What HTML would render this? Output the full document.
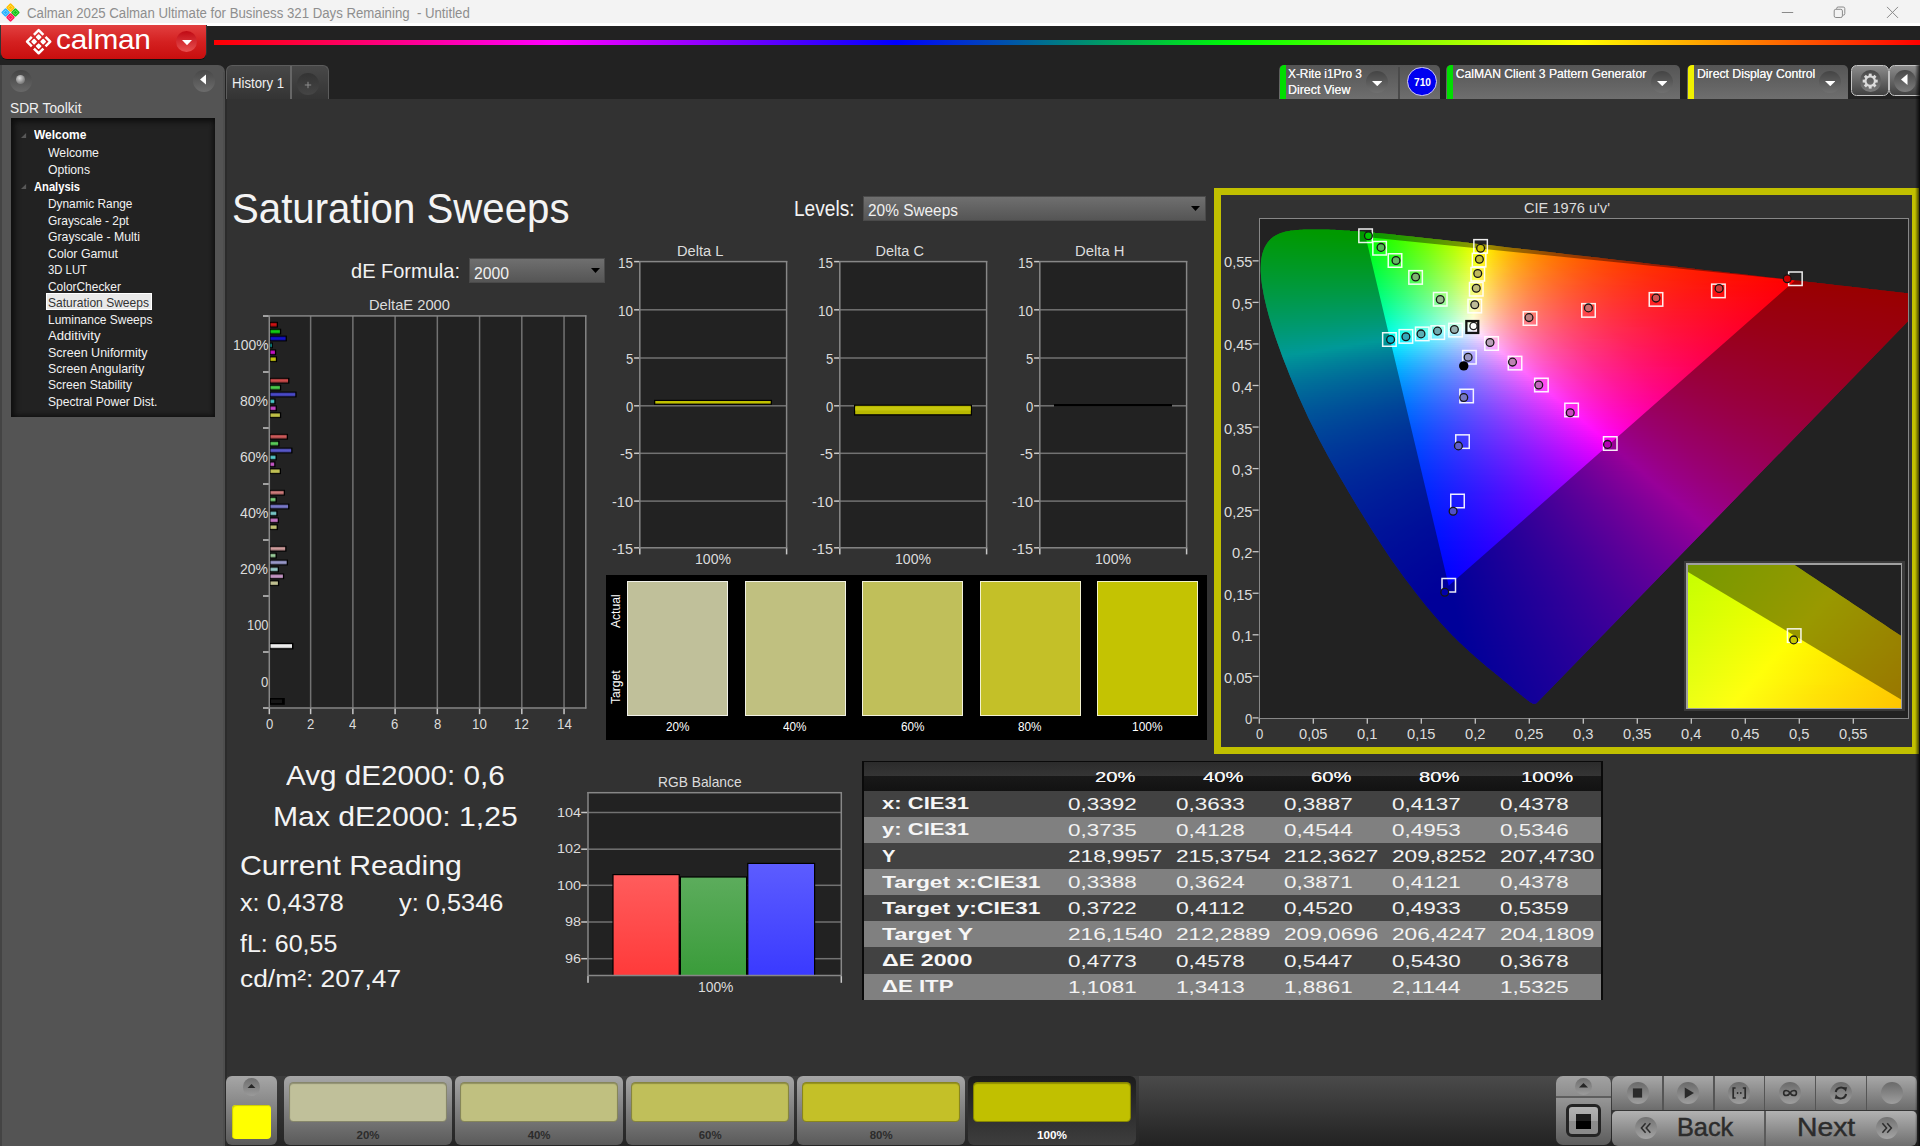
<!DOCTYPE html>
<html><head><meta charset="utf-8"><title>Calman</title><style>html,body{margin:0;padding:0;background:#323232;overflow:hidden}
body{width:1920px;height:1146px;position:relative;font-family:"Liberation Sans",sans-serif}
.a{position:absolute;display:block}
.cie i{position:absolute;display:block}
.t{position:absolute;white-space:nowrap;line-height:1;transform-origin:0 0}
</style></head><body>
<div class="a" style="left:0px;top:0px;width:1920px;height:23.4px;background:#f3f3f3;"></div>
<div class="a" style="left:0px;top:23.4px;width:1920px;height:2.4px;background:#fff;"></div>
<svg class="a" style="left:0;top:0" width="22" height="25"><rect x="7.2" y="4.3" width="6.6" height="6.6" rx="1.2" transform="rotate(45 10.5 7.6)" fill="#ffc000"/><rect x="8.85" y="5.95" width="3.3" height="3.3" rx=".6" transform="rotate(45 10.5 7.6)" fill="none" stroke="#ffe060" stroke-width=".9"/><rect x="12.1" y="9.2" width="6.6" height="6.6" rx="1.2" transform="rotate(45 15.4 12.5)" fill="#18c018"/><rect x="13.75" y="10.85" width="3.3" height="3.3" rx=".6" transform="rotate(45 15.4 12.5)" fill="none" stroke="#70e870" stroke-width=".9"/><rect x="2.3" y="9.2" width="6.6" height="6.6" rx="1.2" transform="rotate(45 5.6 12.5)" fill="#28b0ff"/><rect x="3.95" y="10.85" width="3.3" height="3.3" rx=".6" transform="rotate(45 5.6 12.5)" fill="none" stroke="#80d8ff" stroke-width=".9"/><rect x="7.2" y="14.1" width="6.6" height="6.6" rx="1.2" transform="rotate(45 10.5 17.4)" fill="#ff1858"/><rect x="8.85" y="15.75" width="3.3" height="3.3" rx=".6" transform="rotate(45 10.5 17.4)" fill="none" stroke="#ff7098" stroke-width=".9"/></svg>
<div class="t" style="left:26.50px;top:5.78px;font-size:14.49px;color:#8e8e8e;transform:scaleX(0.9121);white-space:pre;">Calman 2025 Calman Ultimate for Business 321 Days Remaining  - Untitled</div>
<svg class="a" style="left:1770px;top:0" width="150" height="25" fill="none" stroke="#8a8a8a" stroke-width="1"><path d="M11.8 12.5H23.2"/><rect x="64.2" y="9.3" width="8.2" height="8.2" rx="1.6"/><path d="M66.6 9V8.6Q66.6 7 68.2 7H73.2Q74.8 7 74.8 8.6V13.6Q74.8 15.2 73.2 15.2H72.8"/><path d="M117 6.9L128 17.9M128 6.9L117 17.9"/></svg>
<div class="a" style="left:0px;top:25.8px;width:1920px;height:73.2px;background:#222;"></div>
<div class="a" style="left:0px;top:25px;width:207px;height:35px;background:#333;border-radius:0 0 8px 8px;"></div>
<div class="a" style="left:1px;top:25px;width:205px;height:33.5px;background:linear-gradient(#e24040,#d42020 50%,#c80e0e);border-radius:0 0 6px 6px;box-shadow:0 1px 0 #111;"></div>
<svg class="a" style="left:0;top:0" width="60" height="60"><g transform="rotate(45 38.65 41.65)"><g fill="none" stroke="#fff" stroke-width="2.5" stroke-linecap="butt" stroke-linejoin="round"><path d="M37.15 33.45H30.45V40.15"/><path d="M40.15 33.45H46.85V40.15"/><path d="M40.15 49.85H46.85V43.15"/><path d="M37.15 49.85H30.45V43.15"/></g><g fill="#fff"><rect x="33.25" y="36.25" width="4.4" height="4.4" rx=".8"/><rect x="33.25" y="42.65" width="4.4" height="4.4" rx=".8"/><rect x="39.65" y="36.25" width="4.4" height="4.4" rx=".8"/><rect x="39.65" y="42.65" width="4.4" height="4.4" rx=".8"/></g></g></svg>
<div class="t" style="left:55.50px;top:24.66px;font-size:28.40px;color:#fff;transform:scaleX(1.0487);letter-spacing:-.2px;">calman</div>
<div class="a" style="left:176px;top:30.8px;width:21.2px;height:21.2px;border-radius:50%;background:linear-gradient(#c00a14,#e85050);"></div>
<svg class="a" style="left:181.9px;top:40.2px" width="10" height="5.2" viewBox="0 0 10 5.2"><path d="M0 0H10L5 5.2Z" fill="#fff"/></svg>
<div class="a" style="left:214px;top:39.5px;width:1706px;height:5.8px;background:linear-gradient(90deg,#f00,#f0f 20%,#00f 40%,#0f0 60%,#ff0 80%,#f00);"></div>
<div class="a" style="left:0px;top:65px;width:225px;height:1081px;background:#545454;border-radius:0 7px 0 0;"></div>
<div class="a" style="left:0px;top:65px;width:2px;height:1081px;background:#444;"></div>
<div class="a" style="left:222.8px;top:72px;width:2.2px;height:1074px;background:#4e4e4e;"></div>
<div class="a" style="left:10.3px;top:69.6px;width:22px;height:22px;border-radius:50%;background:linear-gradient(#444,#686868);"></div>
<div class="a" style="left:16.3px;top:74.6px;width:9px;height:9px;border-radius:50%;background:radial-gradient(circle at 40% 35%,#ddd,#888 60%,#666);"></div>
<div class="a" style="left:192.5px;top:69.6px;width:22px;height:22px;border-radius:50%;background:linear-gradient(#484848,#6c6c6c);"></div>
<svg class="a" style="left:199.75px;top:74.1px" width="6.5" height="11" viewBox="0 0 6.5 11"><path d="M6.5 0V11L0 5.5Z" fill="#fff"/></svg>
<div class="t" style="left:10.00px;top:100.68px;font-size:14.49px;color:#f0f0f0;transform:scaleX(0.9478);">SDR Toolkit</div>
<div class="a" style="left:10.5px;top:118px;width:204px;height:299px;background:#222;box-shadow:inset 2px 2px 6px 1px #0c0c0c,inset -1px -1px 4px #151515;"></div>
<div class="t" style="left:33.70px;top:128.21px;font-size:13.04px;color:#fff;font-weight:bold;transform:scaleX(0.9207);">Welcome</div>
<div class="t" style="left:48.40px;top:146.21px;font-size:13.04px;color:#f2f2f2;transform:scaleX(0.9423);">Welcome</div>
<div class="t" style="left:48.40px;top:162.91px;font-size:13.04px;color:#f2f2f2;transform:scaleX(0.9344);">Options</div>
<div class="t" style="left:33.70px;top:179.71px;font-size:13.04px;color:#fff;font-weight:bold;transform:scaleX(0.8575);">Analysis</div>
<div class="t" style="left:48.40px;top:197.21px;font-size:13.04px;color:#f2f2f2;transform:scaleX(0.9107);">Dynamic Range</div>
<div class="t" style="left:48.40px;top:213.71px;font-size:13.04px;color:#f2f2f2;transform:scaleX(0.9160);">Grayscale - 2pt</div>
<div class="t" style="left:48.40px;top:230.21px;font-size:13.04px;color:#f2f2f2;transform:scaleX(0.9403);">Grayscale - Multi</div>
<div class="t" style="left:48.40px;top:246.71px;font-size:13.04px;color:#f2f2f2;transform:scaleX(0.9468);">Color Gamut</div>
<div class="t" style="left:48.40px;top:263.21px;font-size:13.04px;color:#f2f2f2;transform:scaleX(0.8679);">3D LUT</div>
<div class="t" style="left:48.40px;top:279.71px;font-size:13.04px;color:#f2f2f2;transform:scaleX(0.9155);">ColorChecker</div>
<div class="a" style="left:46.2px;top:293.3px;width:105.6px;height:16.4px;background:#e9e9e9;border:1px solid #fff;box-sizing:border-box;"></div>
<div class="t" style="left:48.40px;top:296.21px;font-size:13.04px;color:#333;transform:scaleX(0.9225);">Saturation Sweeps</div>
<div class="t" style="left:48.40px;top:312.91px;font-size:13.04px;color:#f2f2f2;transform:scaleX(0.9180);">Luminance Sweeps</div>
<div class="t" style="left:48.40px;top:329.21px;font-size:13.04px;color:#f2f2f2;transform:scaleX(1.0059);">Additivity</div>
<div class="t" style="left:48.40px;top:345.71px;font-size:13.04px;color:#f2f2f2;transform:scaleX(0.9600);">Screen Uniformity</div>
<div class="t" style="left:48.40px;top:362.21px;font-size:13.04px;color:#f2f2f2;transform:scaleX(0.9440);">Screen Angularity</div>
<div class="t" style="left:48.40px;top:378.41px;font-size:13.04px;color:#f2f2f2;transform:scaleX(0.9270);">Screen Stability</div>
<div class="t" style="left:48.40px;top:394.91px;font-size:13.04px;color:#f2f2f2;transform:scaleX(0.9268);">Spectral Power Dist.</div>
<svg class="a" style="left:20.8px;top:132.6px" width="6" height="6"><path d="M5.1 0V4.9H0Z" fill="#585858"/></svg>
<svg class="a" style="left:20.8px;top:184.3px" width="6" height="6"><path d="M5.1 0V4.9H0Z" fill="#585858"/></svg>
<div class="a" style="left:225.6px;top:65px;width:103.4px;height:34px;background:linear-gradient(#484848,#343434);border-radius:6px 6px 0 0;border:1px solid #5c5c5c;border-bottom:none;box-sizing:border-box;"></div>
<div class="a" style="left:290px;top:66px;width:1.5px;height:33px;background:#666;"></div>
<div class="t" style="left:232.00px;top:76.77px;font-size:13.91px;color:#f0f0f0;transform:scaleX(0.9474);">History 1</div>
<div class="a" style="left:297px;top:73.4px;width:22px;height:22px;border-radius:50%;background:linear-gradient(#333,#454545);"></div>
<svg class="a" style="left:303px;top:80.2px" width="10" height="10" stroke="#8c8c8c" stroke-width="1"><path d="M5 1.8V8.2M1.8 5H8.2"/></svg>
<div class="a" style="left:1278.5px;top:65px;width:161px;height:34px;background:linear-gradient(#555,#6e6e6e);border-radius:5px 5px 0 0;overflow:hidden;"><div class="a" style="left:1px;top:0px;width:6px;height:34px;background:#0d0;border-radius:4px 0 0 0;"></div></div>
<div class="t" style="left:1288.20px;top:67.65px;font-size:12.17px;color:#f4f4f4;transform:scaleX(0.9766);text-shadow:0 0 .6px #fff;">X-Rite i1Pro 3</div>
<div class="t" style="left:1288.20px;top:83.95px;font-size:12.17px;color:#f4f4f4;transform:scaleX(1.0190);text-shadow:0 0 .6px #fff;">Direct View</div>
<div class="a" style="left:1366px;top:71px;width:22px;height:22px;border-radius:50%;background:linear-gradient(#444,#707070);"></div>
<svg class="a" style="left:1371.95px;top:80.9px" width="10.5" height="5.2" viewBox="0 0 10.5 5.2"><path d="M0 0H10.5L5.25 5.2Z" fill="#fff"/></svg>
<div class="a" style="left:1398px;top:67px;width:1.5px;height:32px;background:#4a4a4a;"></div>
<div class="a" style="left:1407.3px;top:66.8px;width:29.4px;height:29.4px;border-radius:50%;background:#0000f0;border:1.3px solid #d8d0f0;box-sizing:border-box;"></div>
<div class="t" style="left:1413.50px;top:77.24px;font-size:11.01px;color:#fff;font-weight:bold;transform:scaleX(0.9252);">710</div>
<div class="a" style="left:1446px;top:65px;width:233.5px;height:34px;background:linear-gradient(#555,#6e6e6e);border-radius:5px 5px 0 0;overflow:hidden;"><div class="a" style="left:1px;top:0px;width:6px;height:34px;background:#0d0;border-radius:4px 0 0 0;"></div></div>
<div class="t" style="left:1455.70px;top:67.65px;font-size:12.17px;color:#f4f4f4;text-shadow:0 0 .6px #fff;">CalMAN Client 3 Pattern Generator</div>
<div class="a" style="left:1651px;top:71px;width:22px;height:22px;border-radius:50%;background:linear-gradient(#444,#707070);"></div>
<svg class="a" style="left:1656.95px;top:80.9px" width="10.5" height="5.2" viewBox="0 0 10.5 5.2"><path d="M0 0H10.5L5.25 5.2Z" fill="#fff"/></svg>
<div class="a" style="left:1687px;top:65px;width:161px;height:34px;background:linear-gradient(#555,#6e6e6e);border-radius:5px 5px 0 0;overflow:hidden;"><div class="a" style="left:1px;top:0px;width:6px;height:34px;background:#f0f000;border-radius:4px 0 0 0;"></div></div>
<div class="t" style="left:1696.70px;top:67.65px;font-size:12.17px;color:#f4f4f4;transform:scaleX(1.0067);text-shadow:0 0 .6px #fff;">Direct Display Control</div>
<div class="a" style="left:1819px;top:71px;width:22px;height:22px;border-radius:50%;background:linear-gradient(#444,#707070);"></div>
<svg class="a" style="left:1824.95px;top:80.9px" width="10.5" height="5.2" viewBox="0 0 10.5 5.2"><path d="M0 0H10.5L5.25 5.2Z" fill="#fff"/></svg>
<div class="a" style="left:1851.2px;top:64.7px;width:38.2px;height:31.8px;background:linear-gradient(#8c8c8c,#404040);border:1.5px solid #c4c4c4;border-radius:5.5px;box-sizing:border-box;"></div>
<div class="a" style="left:1889.3px;top:64.7px;width:38.2px;height:31.8px;background:linear-gradient(#8c8c8c,#404040);border:1.5px solid #c4c4c4;border-radius:5.5px;box-sizing:border-box;"></div>
<div class="a" style="left:1859.5px;top:69.8px;width:21.8px;height:21.8px;border-radius:50%;background:linear-gradient(#484848,#7c7c7c);"></div>
<div class="a" style="left:1894.4px;top:69.8px;width:21.8px;height:21.8px;border-radius:50%;background:linear-gradient(#484848,#7c7c7c);"></div>
<svg class="a" style="left:1860.2px;top:70.6px" width="20" height="20"><g transform="translate(10.2 10.1)" fill="#dcdcdc"><rect x="-1.45" y="-7.5" width="2.9" height="3" transform="rotate(0)"/><rect x="-1.45" y="-7.5" width="2.9" height="3" transform="rotate(45)"/><rect x="-1.45" y="-7.5" width="2.9" height="3" transform="rotate(90)"/><rect x="-1.45" y="-7.5" width="2.9" height="3" transform="rotate(135)"/><rect x="-1.45" y="-7.5" width="2.9" height="3" transform="rotate(180)"/><rect x="-1.45" y="-7.5" width="2.9" height="3" transform="rotate(225)"/><rect x="-1.45" y="-7.5" width="2.9" height="3" transform="rotate(270)"/><rect x="-1.45" y="-7.5" width="2.9" height="3" transform="rotate(315)"/><circle r="4.7" fill="none" stroke="#dcdcdc" stroke-width="2.1"/></g></svg>
<svg class="a" style="left:1901.35px;top:74.3px" width="6.5" height="11" viewBox="0 0 6.5 11"><path d="M6.5 0V11L0 5.5Z" fill="#fff"/></svg>
<div class="a" style="left:1915px;top:65px;width:5px;height:1081px;background:linear-gradient(90deg,rgba(0,0,0,0),rgba(0,0,0,.8));z-index:50;"></div>
<div class="a" style="left:225px;top:99px;width:1.5px;height:1047px;background:#2b2b2b;"></div>
<div class="t" style="left:232.30px;top:187.64px;font-size:41.59px;color:#f4f4f4;transform:scaleX(0.9670);">Saturation Sweeps</div>
<div class="t" style="left:351.00px;top:261.26px;font-size:20.87px;color:#f2f2f2;transform:scaleX(0.9590);">dE Formula:</div>
<div class="a" style="left:468.7px;top:257.7px;width:136.5px;height:25.5px;background:linear-gradient(#6f6f6f,#555);border:1px solid #4a4a4a;box-sizing:border-box;"></div><div class="t" style="left:473.70px;top:264.76px;font-size:17.10px;color:#f0f0f0;transform:scaleX(0.9201);">2000</div><svg class="a" style="left:590.5px;top:268.25px" width="9" height="5"><path d="M0 0H9L4.5 5Z" fill="#000"/></svg>
<div class="t" style="left:793.50px;top:198.01px;font-size:21.16px;color:#f2f2f2;transform:scaleX(0.9025);">Levels:</div>
<div class="a" style="left:862.5px;top:195.5px;width:343.7px;height:25.2px;background:linear-gradient(#6f6f6f,#555);border:1px solid #4a4a4a;box-sizing:border-box;"></div><div class="t" style="left:867.50px;top:202.26px;font-size:17.10px;color:#f0f0f0;transform:scaleX(0.9017);">20% Sweeps</div><svg class="a" style="left:1191.1px;top:205.9px" width="9" height="5"><path d="M0 0H9L4.5 5Z" fill="#000"/></svg>
<div class="t" style="left:369.40px;top:298.33px;font-size:14.20px;color:#dcdcdc;transform:scaleX(1.0362);">DeltaE 2000</div>
<svg class="a" style="left:0;top:0" width="620" height="730"><defs><linearGradient id="b1" x1="0" y1="0" x2="0" y2="1"><stop offset="0" stop-color="rgb(147,12,12)"/><stop offset=".45" stop-color="rgb(205,18,18)"/><stop offset="1" stop-color="rgb(147,12,12)"/></linearGradient><linearGradient id="b2" x1="0" y1="0" x2="0" y2="1"><stop offset="0" stop-color="rgb(12,147,12)"/><stop offset=".45" stop-color="rgb(18,205,18)"/><stop offset="1" stop-color="rgb(12,147,12)"/></linearGradient><linearGradient id="b3" x1="0" y1="0" x2="0" y2="1"><stop offset="0" stop-color="rgb(12,12,147)"/><stop offset=".45" stop-color="rgb(18,18,205)"/><stop offset="1" stop-color="rgb(12,12,147)"/></linearGradient><linearGradient id="b4" x1="0" y1="0" x2="0" y2="1"><stop offset="0" stop-color="rgb(12,147,147)"/><stop offset=".45" stop-color="rgb(18,205,205)"/><stop offset="1" stop-color="rgb(12,147,147)"/></linearGradient><linearGradient id="b5" x1="0" y1="0" x2="0" y2="1"><stop offset="0" stop-color="rgb(147,12,147)"/><stop offset=".45" stop-color="rgb(205,18,205)"/><stop offset="1" stop-color="rgb(147,12,147)"/></linearGradient><linearGradient id="b6" x1="0" y1="0" x2="0" y2="1"><stop offset="0" stop-color="rgb(147,147,12)"/><stop offset=".45" stop-color="rgb(205,205,18)"/><stop offset="1" stop-color="rgb(147,147,12)"/></linearGradient><linearGradient id="b7" x1="0" y1="0" x2="0" y2="1"><stop offset="0" stop-color="rgb(147,54,54)"/><stop offset=".45" stop-color="rgb(205,75,75)"/><stop offset="1" stop-color="rgb(147,54,54)"/></linearGradient><linearGradient id="b8" x1="0" y1="0" x2="0" y2="1"><stop offset="0" stop-color="rgb(54,147,54)"/><stop offset=".45" stop-color="rgb(75,205,75)"/><stop offset="1" stop-color="rgb(54,147,54)"/></linearGradient><linearGradient id="b9" x1="0" y1="0" x2="0" y2="1"><stop offset="0" stop-color="rgb(54,54,147)"/><stop offset=".45" stop-color="rgb(75,75,205)"/><stop offset="1" stop-color="rgb(54,54,147)"/></linearGradient><linearGradient id="b10" x1="0" y1="0" x2="0" y2="1"><stop offset="0" stop-color="rgb(54,147,147)"/><stop offset=".45" stop-color="rgb(75,205,205)"/><stop offset="1" stop-color="rgb(54,147,147)"/></linearGradient><linearGradient id="b11" x1="0" y1="0" x2="0" y2="1"><stop offset="0" stop-color="rgb(147,54,147)"/><stop offset=".45" stop-color="rgb(205,75,205)"/><stop offset="1" stop-color="rgb(147,54,147)"/></linearGradient><linearGradient id="b12" x1="0" y1="0" x2="0" y2="1"><stop offset="0" stop-color="rgb(147,147,54)"/><stop offset=".45" stop-color="rgb(205,205,75)"/><stop offset="1" stop-color="rgb(147,147,54)"/></linearGradient><linearGradient id="b13" x1="0" y1="0" x2="0" y2="1"><stop offset="0" stop-color="rgb(147,64,64)"/><stop offset=".45" stop-color="rgb(205,90,90)"/><stop offset="1" stop-color="rgb(147,64,64)"/></linearGradient><linearGradient id="b14" x1="0" y1="0" x2="0" y2="1"><stop offset="0" stop-color="rgb(64,147,64)"/><stop offset=".45" stop-color="rgb(90,205,90)"/><stop offset="1" stop-color="rgb(64,147,64)"/></linearGradient><linearGradient id="b15" x1="0" y1="0" x2="0" y2="1"><stop offset="0" stop-color="rgb(64,64,147)"/><stop offset=".45" stop-color="rgb(90,90,205)"/><stop offset="1" stop-color="rgb(64,64,147)"/></linearGradient><linearGradient id="b16" x1="0" y1="0" x2="0" y2="1"><stop offset="0" stop-color="rgb(64,147,147)"/><stop offset=".45" stop-color="rgb(90,205,205)"/><stop offset="1" stop-color="rgb(64,147,147)"/></linearGradient><linearGradient id="b17" x1="0" y1="0" x2="0" y2="1"><stop offset="0" stop-color="rgb(147,64,147)"/><stop offset=".45" stop-color="rgb(205,90,205)"/><stop offset="1" stop-color="rgb(147,64,147)"/></linearGradient><linearGradient id="b18" x1="0" y1="0" x2="0" y2="1"><stop offset="0" stop-color="rgb(147,147,64)"/><stop offset=".45" stop-color="rgb(205,205,90)"/><stop offset="1" stop-color="rgb(147,147,64)"/></linearGradient><linearGradient id="b19" x1="0" y1="0" x2="0" y2="1"><stop offset="0" stop-color="rgb(147,88,88)"/><stop offset=".45" stop-color="rgb(205,123,123)"/><stop offset="1" stop-color="rgb(147,88,88)"/></linearGradient><linearGradient id="b20" x1="0" y1="0" x2="0" y2="1"><stop offset="0" stop-color="rgb(88,147,88)"/><stop offset=".45" stop-color="rgb(123,205,123)"/><stop offset="1" stop-color="rgb(88,147,88)"/></linearGradient><linearGradient id="b21" x1="0" y1="0" x2="0" y2="1"><stop offset="0" stop-color="rgb(88,88,147)"/><stop offset=".45" stop-color="rgb(123,123,205)"/><stop offset="1" stop-color="rgb(88,88,147)"/></linearGradient><linearGradient id="b22" x1="0" y1="0" x2="0" y2="1"><stop offset="0" stop-color="rgb(88,147,147)"/><stop offset=".45" stop-color="rgb(123,205,205)"/><stop offset="1" stop-color="rgb(88,147,147)"/></linearGradient><linearGradient id="b23" x1="0" y1="0" x2="0" y2="1"><stop offset="0" stop-color="rgb(147,88,147)"/><stop offset=".45" stop-color="rgb(205,123,205)"/><stop offset="1" stop-color="rgb(147,88,147)"/></linearGradient><linearGradient id="b24" x1="0" y1="0" x2="0" y2="1"><stop offset="0" stop-color="rgb(147,147,88)"/><stop offset=".45" stop-color="rgb(205,205,123)"/><stop offset="1" stop-color="rgb(147,147,88)"/></linearGradient><linearGradient id="b25" x1="0" y1="0" x2="0" y2="1"><stop offset="0" stop-color="rgb(147,111,111)"/><stop offset=".45" stop-color="rgb(205,155,155)"/><stop offset="1" stop-color="rgb(147,111,111)"/></linearGradient><linearGradient id="b26" x1="0" y1="0" x2="0" y2="1"><stop offset="0" stop-color="rgb(111,147,111)"/><stop offset=".45" stop-color="rgb(155,205,155)"/><stop offset="1" stop-color="rgb(111,147,111)"/></linearGradient><linearGradient id="b27" x1="0" y1="0" x2="0" y2="1"><stop offset="0" stop-color="rgb(111,111,147)"/><stop offset=".45" stop-color="rgb(155,155,205)"/><stop offset="1" stop-color="rgb(111,111,147)"/></linearGradient><linearGradient id="b28" x1="0" y1="0" x2="0" y2="1"><stop offset="0" stop-color="rgb(111,147,147)"/><stop offset=".45" stop-color="rgb(155,205,205)"/><stop offset="1" stop-color="rgb(111,147,147)"/></linearGradient><linearGradient id="b29" x1="0" y1="0" x2="0" y2="1"><stop offset="0" stop-color="rgb(147,111,147)"/><stop offset=".45" stop-color="rgb(205,155,205)"/><stop offset="1" stop-color="rgb(147,111,147)"/></linearGradient><linearGradient id="b30" x1="0" y1="0" x2="0" y2="1"><stop offset="0" stop-color="rgb(147,147,111)"/><stop offset=".45" stop-color="rgb(205,205,155)"/><stop offset="1" stop-color="rgb(147,147,111)"/></linearGradient><linearGradient id="bw" x1="0" y1="0" x2="0" y2="1"><stop offset="0" stop-color="#aaa"/><stop offset=".45" stop-color="#fff"/><stop offset="1" stop-color="#aaa"/></linearGradient></defs><rect x="269" y="315.3" width="317.4" height="393.3" fill="#222"/><rect x="309.88" y="316.00" width="1.5" height="392.00" fill="#727272"/><rect x="352.12" y="316.00" width="1.5" height="392.00" fill="#727272"/><rect x="394.35" y="316.00" width="1.5" height="392.00" fill="#727272"/><rect x="436.59" y="316.00" width="1.5" height="392.00" fill="#727272"/><rect x="478.82" y="316.00" width="1.5" height="392.00" fill="#727272"/><rect x="521.05" y="316.00" width="1.5" height="392.00" fill="#727272"/><rect x="563.29" y="316.00" width="1.5" height="392.00" fill="#727272"/><rect x="269.00" y="315.15" width="317.40" height="1.5" fill="#878787"/><rect x="585.05" y="315.30" width="1.5" height="393.30" fill="#878787"/><rect x="268.55" y="315.30" width="1.5" height="393.30" fill="#878787"/><rect x="269.00" y="707.25" width="317.40" height="1.5" fill="#878787"/><rect x="263.00" y="315.25" width="5.70" height="1.5" fill="#c6c6c6"/><rect x="263.00" y="371.25" width="5.70" height="1.5" fill="#c6c6c6"/><rect x="263.00" y="427.25" width="5.70" height="1.5" fill="#c6c6c6"/><rect x="263.00" y="483.25" width="5.70" height="1.5" fill="#c6c6c6"/><rect x="263.00" y="539.25" width="5.70" height="1.5" fill="#c6c6c6"/><rect x="263.00" y="595.25" width="5.70" height="1.5" fill="#c6c6c6"/><rect x="263.00" y="651.25" width="5.70" height="1.5" fill="#c6c6c6"/><rect x="263.00" y="707.25" width="5.70" height="1.5" fill="#c6c6c6"/><rect x="268.55" y="708.60" width="1.5" height="5.60" fill="#c6c6c6"/><rect x="309.88" y="708.60" width="1.5" height="5.60" fill="#c6c6c6"/><rect x="352.12" y="708.60" width="1.5" height="5.60" fill="#c6c6c6"/><rect x="394.35" y="708.60" width="1.5" height="5.60" fill="#c6c6c6"/><rect x="436.59" y="708.60" width="1.5" height="5.60" fill="#c6c6c6"/><rect x="478.82" y="708.60" width="1.5" height="5.60" fill="#c6c6c6"/><rect x="521.05" y="708.60" width="1.5" height="5.60" fill="#c6c6c6"/><rect x="563.29" y="708.60" width="1.5" height="5.60" fill="#c6c6c6"/><rect x="270" y="321.8" width="8.0" height="5.8" fill="#000"/><rect x="270.5" y="322.8" width="6.2" height="3.8" fill="url(#b1)"/><rect x="270" y="328.7" width="11.2" height="5.8" fill="#000"/><rect x="270.5" y="329.7" width="9.4" height="3.8" fill="url(#b2)"/><rect x="270" y="335.6" width="16.9" height="5.8" fill="#000"/><rect x="270.5" y="336.6" width="15.1" height="3.8" fill="url(#b3)"/><rect x="270" y="342.5" width="2.9" height="5.8" fill="#000"/><rect x="270.5" y="343.5" width="1.1" height="3.8" fill="url(#b4)"/><rect x="270" y="349.4" width="6.2" height="5.8" fill="#000"/><rect x="270.5" y="350.4" width="4.4" height="3.8" fill="url(#b5)"/><rect x="270" y="356.3" width="7.1" height="5.8" fill="#000"/><rect x="270.5" y="357.3" width="5.3" height="3.8" fill="url(#b6)"/><rect x="270" y="377.8" width="19.4" height="5.8" fill="#000"/><rect x="270.5" y="378.8" width="17.6" height="3.8" fill="url(#b7)"/><rect x="270" y="384.7" width="11.2" height="5.8" fill="#000"/><rect x="270.5" y="385.7" width="9.4" height="3.8" fill="url(#b8)"/><rect x="270" y="391.6" width="26.6" height="5.8" fill="#000"/><rect x="270.5" y="392.6" width="24.8" height="3.8" fill="url(#b9)"/><rect x="270" y="398.5" width="5.6" height="5.8" fill="#000"/><rect x="270.5" y="399.5" width="3.8" height="3.8" fill="url(#b10)"/><rect x="270" y="405.4" width="6.9" height="5.8" fill="#000"/><rect x="270.5" y="406.4" width="5.1" height="3.8" fill="url(#b11)"/><rect x="270" y="412.3" width="11.2" height="5.8" fill="#000"/><rect x="270.5" y="413.3" width="9.4" height="3.8" fill="url(#b12)"/><rect x="270" y="433.8" width="18.0" height="5.8" fill="#000"/><rect x="270.5" y="434.8" width="16.2" height="3.8" fill="url(#b13)"/><rect x="270" y="440.7" width="9.5" height="5.8" fill="#000"/><rect x="270.5" y="441.7" width="7.7" height="3.8" fill="url(#b14)"/><rect x="270" y="447.6" width="22.5" height="5.8" fill="#000"/><rect x="270.5" y="448.6" width="20.7" height="3.8" fill="url(#b15)"/><rect x="270" y="454.5" width="6.8" height="5.8" fill="#000"/><rect x="270.5" y="455.5" width="5.0" height="3.8" fill="url(#b16)"/><rect x="270" y="461.4" width="5.5" height="5.8" fill="#000"/><rect x="270.5" y="462.4" width="3.7" height="3.8" fill="url(#b17)"/><rect x="270" y="468.3" width="11.0" height="5.8" fill="#000"/><rect x="270.5" y="469.3" width="9.2" height="3.8" fill="url(#b18)"/><rect x="270" y="489.8" width="15.0" height="5.8" fill="#000"/><rect x="270.5" y="490.8" width="13.2" height="3.8" fill="url(#b19)"/><rect x="270" y="496.7" width="6.8" height="5.8" fill="#000"/><rect x="270.5" y="497.7" width="5.0" height="3.8" fill="url(#b20)"/><rect x="270" y="503.6" width="19.4" height="5.8" fill="#000"/><rect x="270.5" y="504.6" width="17.6" height="3.8" fill="url(#b21)"/><rect x="270" y="510.5" width="7.6" height="5.8" fill="#000"/><rect x="270.5" y="511.5" width="5.8" height="3.8" fill="url(#b22)"/><rect x="270" y="517.4" width="9.0" height="5.8" fill="#000"/><rect x="270.5" y="518.4" width="7.2" height="3.8" fill="url(#b23)"/><rect x="270" y="524.3" width="7.9" height="5.8" fill="#000"/><rect x="270.5" y="525.3" width="6.1" height="3.8" fill="url(#b24)"/><rect x="270" y="545.8" width="16.5" height="5.8" fill="#000"/><rect x="270.5" y="546.8" width="14.7" height="3.8" fill="url(#b25)"/><rect x="270" y="552.7" width="6.8" height="5.8" fill="#000"/><rect x="270.5" y="553.7" width="5.0" height="3.8" fill="url(#b26)"/><rect x="270" y="559.6" width="18.0" height="5.8" fill="#000"/><rect x="270.5" y="560.6" width="16.2" height="3.8" fill="url(#b27)"/><rect x="270" y="566.5" width="9.0" height="5.8" fill="#000"/><rect x="270.5" y="567.5" width="7.2" height="3.8" fill="url(#b28)"/><rect x="270" y="573.4" width="14.2" height="5.8" fill="#000"/><rect x="270.5" y="574.4" width="12.4" height="3.8" fill="url(#b29)"/><rect x="270" y="580.3" width="9.2" height="5.8" fill="#000"/><rect x="270.5" y="581.3" width="7.4" height="3.8" fill="url(#b30)"/><rect x="270" y="642.8" width="23.5" height="6.6" fill="#000"/><rect x="270.5" y="644" width="21.5" height="4.2" fill="url(#bw)"/><rect x="270" y="698" width="14.8" height="6.8" fill="#000"/><rect x="271" y="699.5" width="11" height="3.6" fill="#151515"/></svg>
<div class="t" style="left:232.80px;top:338.18px;font-size:14.49px;color:#dcdcdc;transform:scaleX(0.9578);">100%</div>
<div class="t" style="left:240.30px;top:394.18px;font-size:14.49px;color:#dcdcdc;transform:scaleX(0.9653);">80%</div>
<div class="t" style="left:240.30px;top:450.18px;font-size:14.49px;color:#dcdcdc;transform:scaleX(0.9653);">60%</div>
<div class="t" style="left:239.80px;top:506.18px;font-size:14.49px;color:#dcdcdc;transform:scaleX(0.9826);">40%</div>
<div class="t" style="left:240.30px;top:562.18px;font-size:14.49px;color:#dcdcdc;transform:scaleX(0.9653);">20%</div>
<div class="t" style="left:246.80px;top:617.98px;font-size:14.49px;color:#dcdcdc;transform:scaleX(0.8892);">100</div>
<div class="t" style="left:261.00px;top:674.68px;font-size:14.49px;color:#dcdcdc;transform:scaleX(0.9058);">0</div>
<div class="t" style="left:265.65px;top:717.67px;font-size:13.91px;color:#dcdcdc;transform:scaleX(0.9435);">0</div>
<div class="t" style="left:306.98px;top:717.67px;font-size:13.91px;color:#dcdcdc;transform:scaleX(0.9435);">2</div>
<div class="t" style="left:349.22px;top:717.67px;font-size:13.91px;color:#dcdcdc;transform:scaleX(0.9435);">4</div>
<div class="t" style="left:391.45px;top:717.67px;font-size:13.91px;color:#dcdcdc;transform:scaleX(0.9435);">6</div>
<div class="t" style="left:433.69px;top:717.67px;font-size:13.91px;color:#dcdcdc;transform:scaleX(0.9435);">8</div>
<div class="t" style="left:472.17px;top:717.67px;font-size:13.91px;color:#dcdcdc;transform:scaleX(0.9564);">10</div>
<div class="t" style="left:514.40px;top:717.67px;font-size:13.91px;color:#dcdcdc;transform:scaleX(0.9564);">12</div>
<div class="t" style="left:556.64px;top:717.67px;font-size:13.91px;color:#dcdcdc;transform:scaleX(0.9564);">14</div>
<svg class="a" style="left:0;top:0" width="1210" height="560"><rect x="639.6" y="261" width="147.5" height="287.4" fill="#222"/><rect x="640.00" y="309.05" width="146.50" height="1.5" fill="#727272"/><rect x="640.00" y="357.25" width="146.50" height="1.5" fill="#727272"/><rect x="640.00" y="405.05" width="146.50" height="1.5" fill="#727272"/><rect x="640.00" y="452.55" width="146.50" height="1.5" fill="#727272"/><rect x="640.00" y="500.35" width="146.50" height="1.5" fill="#727272"/><rect x="639.20" y="260.85" width="148.10" height="1.5" fill="#878787"/><rect x="639.20" y="547.05" width="148.10" height="1.5" fill="#878787"/><rect x="639.05" y="261.00" width="1.5" height="287.40" fill="#878787"/><rect x="785.85" y="261.00" width="1.5" height="287.40" fill="#878787"/><rect x="634.10" y="260.85" width="5.00" height="1.5" fill="#c6c6c6"/><rect x="634.10" y="309.05" width="5.00" height="1.5" fill="#c6c6c6"/><rect x="634.10" y="357.25" width="5.00" height="1.5" fill="#c6c6c6"/><rect x="634.10" y="405.05" width="5.00" height="1.5" fill="#c6c6c6"/><rect x="634.10" y="452.55" width="5.00" height="1.5" fill="#c6c6c6"/><rect x="634.10" y="500.35" width="5.00" height="1.5" fill="#c6c6c6"/><rect x="634.10" y="547.05" width="5.00" height="1.5" fill="#c6c6c6"/><rect x="639.05" y="548.40" width="1.5" height="6.00" fill="#c6c6c6"/><rect x="785.85" y="548.40" width="1.5" height="6.00" fill="#c6c6c6"/><rect x="654" y="399.8" width="118" height="5" fill="#000"/><rect x="655.3" y="401" width="115.4" height="2.6" fill="#c0c000"/></svg>
<div class="t" style="left:676.55px;top:243.58px;font-size:14.49px;color:#dcdcdc;transform:scaleX(1.0127);">Delta L</div>
<div class="t" style="left:618.30px;top:255.63px;font-size:14.78px;color:#dcdcdc;transform:scaleX(0.9124);">15</div>
<div class="t" style="left:618.30px;top:303.83px;font-size:14.78px;color:#dcdcdc;transform:scaleX(0.9124);">10</div>
<div class="t" style="left:626.00px;top:352.03px;font-size:14.78px;color:#dcdcdc;transform:scaleX(0.8880);">5</div>
<div class="t" style="left:626.00px;top:399.83px;font-size:14.78px;color:#dcdcdc;transform:scaleX(0.8880);">0</div>
<div class="t" style="left:620.30px;top:447.33px;font-size:14.78px;color:#dcdcdc;transform:scaleX(0.9891);">-5</div>
<div class="t" style="left:612.30px;top:495.13px;font-size:14.78px;color:#dcdcdc;transform:scaleX(0.9830);">-10</div>
<div class="t" style="left:612.30px;top:541.83px;font-size:14.78px;color:#dcdcdc;transform:scaleX(0.9830);">-15</div>
<div class="t" style="left:695.20px;top:551.68px;font-size:14.49px;color:#dcdcdc;transform:scaleX(0.9713);">100%</div>
<svg class="a" style="left:0;top:0" width="1210" height="560"><rect x="839.6" y="261" width="147.5" height="287.4" fill="#222"/><rect x="840.00" y="309.05" width="146.50" height="1.5" fill="#727272"/><rect x="840.00" y="357.25" width="146.50" height="1.5" fill="#727272"/><rect x="840.00" y="405.05" width="146.50" height="1.5" fill="#727272"/><rect x="840.00" y="452.55" width="146.50" height="1.5" fill="#727272"/><rect x="840.00" y="500.35" width="146.50" height="1.5" fill="#727272"/><rect x="839.20" y="260.85" width="148.10" height="1.5" fill="#878787"/><rect x="839.20" y="547.05" width="148.10" height="1.5" fill="#878787"/><rect x="839.05" y="261.00" width="1.5" height="287.40" fill="#878787"/><rect x="985.85" y="261.00" width="1.5" height="287.40" fill="#878787"/><rect x="834.10" y="260.85" width="5.00" height="1.5" fill="#c6c6c6"/><rect x="834.10" y="309.05" width="5.00" height="1.5" fill="#c6c6c6"/><rect x="834.10" y="357.25" width="5.00" height="1.5" fill="#c6c6c6"/><rect x="834.10" y="405.05" width="5.00" height="1.5" fill="#c6c6c6"/><rect x="834.10" y="452.55" width="5.00" height="1.5" fill="#c6c6c6"/><rect x="834.10" y="500.35" width="5.00" height="1.5" fill="#c6c6c6"/><rect x="834.10" y="547.05" width="5.00" height="1.5" fill="#c6c6c6"/><rect x="839.05" y="548.40" width="1.5" height="6.00" fill="#c6c6c6"/><rect x="985.85" y="548.40" width="1.5" height="6.00" fill="#c6c6c6"/><rect x="854" y="404.6" width="118" height="11" fill="#000"/><rect x="855.2" y="405.8" width="115.6" height="8.4" fill="#b8b800"/><rect x="855.2" y="407" width="115.6" height="3.5" fill="#caca10" opacity=".8"/></svg>
<div class="t" style="left:875.55px;top:243.58px;font-size:14.49px;color:#dcdcdc;">Delta C</div>
<div class="t" style="left:818.30px;top:255.63px;font-size:14.78px;color:#dcdcdc;transform:scaleX(0.9124);">15</div>
<div class="t" style="left:818.30px;top:303.83px;font-size:14.78px;color:#dcdcdc;transform:scaleX(0.9124);">10</div>
<div class="t" style="left:826.00px;top:352.03px;font-size:14.78px;color:#dcdcdc;transform:scaleX(0.8880);">5</div>
<div class="t" style="left:826.00px;top:399.83px;font-size:14.78px;color:#dcdcdc;transform:scaleX(0.8880);">0</div>
<div class="t" style="left:820.30px;top:447.33px;font-size:14.78px;color:#dcdcdc;transform:scaleX(0.9891);">-5</div>
<div class="t" style="left:812.30px;top:495.13px;font-size:14.78px;color:#dcdcdc;transform:scaleX(0.9830);">-10</div>
<div class="t" style="left:812.30px;top:541.83px;font-size:14.78px;color:#dcdcdc;transform:scaleX(0.9830);">-15</div>
<div class="t" style="left:895.20px;top:551.68px;font-size:14.49px;color:#dcdcdc;transform:scaleX(0.9713);">100%</div>
<svg class="a" style="left:0;top:0" width="1210" height="560"><rect x="1039.6" y="261" width="147.5" height="287.4" fill="#222"/><rect x="1040.00" y="309.05" width="146.50" height="1.5" fill="#727272"/><rect x="1040.00" y="357.25" width="146.50" height="1.5" fill="#727272"/><rect x="1040.00" y="405.05" width="146.50" height="1.5" fill="#727272"/><rect x="1040.00" y="452.55" width="146.50" height="1.5" fill="#727272"/><rect x="1040.00" y="500.35" width="146.50" height="1.5" fill="#727272"/><rect x="1039.20" y="260.85" width="148.10" height="1.5" fill="#878787"/><rect x="1039.20" y="547.05" width="148.10" height="1.5" fill="#878787"/><rect x="1039.05" y="261.00" width="1.5" height="287.40" fill="#878787"/><rect x="1185.85" y="261.00" width="1.5" height="287.40" fill="#878787"/><rect x="1034.10" y="260.85" width="5.00" height="1.5" fill="#c6c6c6"/><rect x="1034.10" y="309.05" width="5.00" height="1.5" fill="#c6c6c6"/><rect x="1034.10" y="357.25" width="5.00" height="1.5" fill="#c6c6c6"/><rect x="1034.10" y="405.05" width="5.00" height="1.5" fill="#c6c6c6"/><rect x="1034.10" y="452.55" width="5.00" height="1.5" fill="#c6c6c6"/><rect x="1034.10" y="500.35" width="5.00" height="1.5" fill="#c6c6c6"/><rect x="1034.10" y="547.05" width="5.00" height="1.5" fill="#c6c6c6"/><rect x="1039.05" y="548.40" width="1.5" height="6.00" fill="#c6c6c6"/><rect x="1185.85" y="548.40" width="1.5" height="6.00" fill="#c6c6c6"/><rect x="1054" y="404" width="118" height="2.6" fill="#000"/></svg>
<div class="t" style="left:1075.05px;top:243.58px;font-size:14.49px;color:#dcdcdc;transform:scaleX(1.0243);">Delta H</div>
<div class="t" style="left:1018.30px;top:255.63px;font-size:14.78px;color:#dcdcdc;transform:scaleX(0.9124);">15</div>
<div class="t" style="left:1018.30px;top:303.83px;font-size:14.78px;color:#dcdcdc;transform:scaleX(0.9124);">10</div>
<div class="t" style="left:1026.00px;top:352.03px;font-size:14.78px;color:#dcdcdc;transform:scaleX(0.8880);">5</div>
<div class="t" style="left:1026.00px;top:399.83px;font-size:14.78px;color:#dcdcdc;transform:scaleX(0.8880);">0</div>
<div class="t" style="left:1020.30px;top:447.33px;font-size:14.78px;color:#dcdcdc;transform:scaleX(0.9891);">-5</div>
<div class="t" style="left:1012.30px;top:495.13px;font-size:14.78px;color:#dcdcdc;transform:scaleX(0.9830);">-10</div>
<div class="t" style="left:1012.30px;top:541.83px;font-size:14.78px;color:#dcdcdc;transform:scaleX(0.9830);">-15</div>
<div class="t" style="left:1095.20px;top:551.68px;font-size:14.49px;color:#dcdcdc;transform:scaleX(0.9713);">100%</div>
<div class="a" style="left:606px;top:575px;width:601px;height:164.7px;background:#000;"></div>
<div class="a" style="left:627px;top:581px;width:101px;height:135px;background:#c0c09a;border:1.2px solid rgba(255,255,255,.78);box-sizing:border-box;"></div>
<div class="t" style="left:665.75px;top:721.16px;font-size:12.75px;color:#fff;transform:scaleX(0.9207);">20%</div>
<div class="a" style="left:744.55px;top:581px;width:101px;height:135px;background:#c0c080;border:1.2px solid rgba(255,255,255,.78);box-sizing:border-box;"></div>
<div class="t" style="left:783.30px;top:721.16px;font-size:12.75px;color:#fff;transform:scaleX(0.9207);">40%</div>
<div class="a" style="left:862.1px;top:581px;width:101px;height:135px;background:#c0bf5a;border:1.2px solid rgba(255,255,255,.78);box-sizing:border-box;"></div>
<div class="t" style="left:900.85px;top:721.16px;font-size:12.75px;color:#fff;transform:scaleX(0.9207);">60%</div>
<div class="a" style="left:979.65px;top:581px;width:101px;height:135px;background:#c4c028;border:1.2px solid rgba(255,255,255,.78);box-sizing:border-box;"></div>
<div class="t" style="left:1018.40px;top:721.16px;font-size:12.75px;color:#fff;transform:scaleX(0.9207);">80%</div>
<div class="a" style="left:1097.2px;top:581px;width:101px;height:135px;background:#c4c302;border:1.2px solid rgba(255,255,255,.78);box-sizing:border-box;"></div>
<div class="t" style="left:1132.45px;top:721.16px;font-size:12.75px;color:#fff;transform:scaleX(0.9351);">100%</div>
<div class="t" style="left:609.5px;top:627.5px;font-size:12.6px;color:#fff;transform:rotate(-90deg) scaleX(.96);transform-origin:0 0;">Actual</div>
<div class="t" style="left:609.5px;top:703.8px;font-size:12.6px;color:#fff;transform:rotate(-90deg) scaleX(.96);transform-origin:0 0;">Target</div>
<div class="t" style="left:285.80px;top:761.82px;font-size:27.97px;color:#f4f4f4;transform:scaleX(1.0605);">Avg dE2000: 0,6</div>
<div class="t" style="left:273.10px;top:803.42px;font-size:27.97px;color:#f4f4f4;transform:scaleX(1.0779);">Max dE2000: 1,25</div>
<div class="t" style="left:240.40px;top:851.36px;font-size:28.41px;color:#f4f4f4;transform:scaleX(1.0642);">Current Reading</div>
<div class="t" style="left:240.40px;top:891.40px;font-size:23.77px;color:#f4f4f4;transform:scaleX(1.0616);">x: 0,4378</div>
<div class="t" style="left:399.30px;top:891.40px;font-size:23.77px;color:#f4f4f4;transform:scaleX(1.0677);">y: 0,5346</div>
<div class="t" style="left:240.40px;top:931.80px;font-size:23.77px;color:#f4f4f4;transform:scaleX(1.0530);">fL: 60,55</div>
<div class="t" style="left:240.40px;top:967.00px;font-size:23.77px;color:#f4f4f4;transform:scaleX(1.1093);">cd/m²: 207,47</div>
<div class="t" style="left:657.65px;top:774.93px;font-size:14.20px;color:#dcdcdc;transform:scaleX(0.9727);">RGB Balance</div>
<svg class="a" style="left:0;top:0" width="860" height="1000"><rect x="588" y="792.5" width="253.5" height="183.3" fill="#222"/><rect x="588.00" y="811.75" width="253.00" height="1.5" fill="#727272"/><rect x="581.20" y="811.75" width="6.20" height="1.5" fill="#c6c6c6"/><rect x="588.00" y="848.45" width="253.00" height="1.5" fill="#727272"/><rect x="581.20" y="848.45" width="6.20" height="1.5" fill="#c6c6c6"/><rect x="588.00" y="884.55" width="253.00" height="1.5" fill="#727272"/><rect x="581.20" y="884.55" width="6.20" height="1.5" fill="#c6c6c6"/><rect x="588.00" y="921.25" width="253.00" height="1.5" fill="#727272"/><rect x="581.20" y="921.25" width="6.20" height="1.5" fill="#c6c6c6"/><rect x="588.00" y="957.95" width="253.00" height="1.5" fill="#727272"/><rect x="581.20" y="957.95" width="6.20" height="1.5" fill="#c6c6c6"/><rect x="587.40" y="791.95" width="254.60" height="1.5" fill="#878787"/><rect x="587.25" y="792.00" width="1.5" height="183.50" fill="#878787"/><rect x="840.55" y="792.00" width="1.5" height="183.50" fill="#878787"/><rect x="587.25" y="976.00" width="1.5" height="6.80" fill="#c6c6c6"/><rect x="840.55" y="976.00" width="1.5" height="6.80" fill="#c6c6c6"/><defs><linearGradient id="gr" x1="0" y1="0" x2="0" y2="1"><stop offset="0" stop-color="#ff5c5c"/><stop offset="1" stop-color="#ff3a3a"/></linearGradient><linearGradient id="gg" x1="0" y1="0" x2="0" y2="1"><stop offset="0" stop-color="#5cac5c"/><stop offset="1" stop-color="#3a9c3a"/></linearGradient><linearGradient id="gb" x1="0" y1="0" x2="0" y2="1"><stop offset="0" stop-color="#5c5cff"/><stop offset="1" stop-color="#3a3aff"/></linearGradient></defs><rect x="612.4" y="874" width="67.4" height="101.5" fill="#000"/><rect x="613.6" y="875.2" width="65.0" height="100.3" fill="url(#gr)"/><rect x="679.8" y="876.4" width="67.4" height="99.1" fill="#000"/><rect x="681.0" y="877.6" width="65.0" height="97.9" fill="url(#gg)"/><rect x="747.2" y="862.8" width="68" height="112.7" fill="#000"/><rect x="748.4000000000001" y="864.0" width="65.6" height="111.5" fill="url(#gb)"/><rect x="587.40" y="974.75" width="254.60" height="1.5" fill="#878787"/></svg>
<div class="t" style="left:556.80px;top:805.77px;font-size:13.33px;color:#dcdcdc;transform:scaleX(1.0790);">104</div>
<div class="t" style="left:556.80px;top:842.47px;font-size:13.33px;color:#dcdcdc;transform:scaleX(1.0790);">102</div>
<div class="t" style="left:556.80px;top:878.77px;font-size:13.33px;color:#dcdcdc;transform:scaleX(1.0790);">100</div>
<div class="t" style="left:564.80px;top:915.27px;font-size:13.33px;color:#dcdcdc;transform:scaleX(1.0790);">98</div>
<div class="t" style="left:564.80px;top:951.97px;font-size:13.33px;color:#dcdcdc;transform:scaleX(1.0790);">96</div>
<div class="t" style="left:697.50px;top:981.17px;font-size:13.91px;color:#dcdcdc;transform:scaleX(0.9949);">100%</div>
<div class="a" style="left:862px;top:760.6px;width:741.2px;height:239.4px;background:#0a0a0a;"></div>
<div class="a" style="left:864px;top:762px;width:736.5px;height:14px;background:linear-gradient(#2b2b2b,#353535);"></div>
<div class="a" style="left:864px;top:776px;width:736.5px;height:14.6px;background:linear-gradient(#191919,#121212);"></div>
<div class="t" style="left:1095.10px;top:769.91px;font-size:14.93px;color:#f4f4f4;transform:scaleX(1.3556);text-shadow:0 0 .5px #fff;">20%</div>
<div class="t" style="left:1203.10px;top:769.91px;font-size:14.93px;color:#f4f4f4;transform:scaleX(1.3556);text-shadow:0 0 .5px #fff;">40%</div>
<div class="t" style="left:1311.10px;top:769.91px;font-size:14.93px;color:#f4f4f4;transform:scaleX(1.3556);text-shadow:0 0 .5px #fff;">60%</div>
<div class="t" style="left:1419.10px;top:769.91px;font-size:14.93px;color:#f4f4f4;transform:scaleX(1.3556);text-shadow:0 0 .5px #fff;">80%</div>
<div class="t" style="left:1521.30px;top:769.91px;font-size:14.93px;color:#f4f4f4;transform:scaleX(1.3699);text-shadow:0 0 .5px #fff;">100%</div>
<div class="a" style="left:864px;top:790.6px;width:736.5px;height:26.43px;background:#424242;"></div>
<div class="t" style="left:881.90px;top:796.26px;font-size:16.52px;color:#f6f6f6;font-weight:bold;transform:scaleX(1.3344);">x: CIE31</div>
<div class="t" style="left:1067.60px;top:795.84px;font-size:17.25px;color:#f2f2f2;transform:scaleX(1.3006);">0,3392</div>
<div class="t" style="left:1175.60px;top:795.84px;font-size:17.25px;color:#f2f2f2;transform:scaleX(1.3006);">0,3633</div>
<div class="t" style="left:1283.60px;top:795.84px;font-size:17.25px;color:#f2f2f2;transform:scaleX(1.3006);">0,3887</div>
<div class="t" style="left:1391.60px;top:795.84px;font-size:17.25px;color:#f2f2f2;transform:scaleX(1.3006);">0,4137</div>
<div class="t" style="left:1499.60px;top:795.84px;font-size:17.25px;color:#f2f2f2;transform:scaleX(1.3006);">0,4378</div>
<div class="a" style="left:864px;top:816.73px;width:736.5px;height:26.43px;background:#808080;"></div>
<div class="t" style="left:881.90px;top:822.39px;font-size:16.52px;color:#f6f6f6;font-weight:bold;transform:scaleX(1.3344);">y: CIE31</div>
<div class="t" style="left:1067.60px;top:821.97px;font-size:17.25px;color:#f2f2f2;transform:scaleX(1.3006);">0,3735</div>
<div class="t" style="left:1175.60px;top:821.97px;font-size:17.25px;color:#f2f2f2;transform:scaleX(1.3006);">0,4128</div>
<div class="t" style="left:1283.60px;top:821.97px;font-size:17.25px;color:#f2f2f2;transform:scaleX(1.3006);">0,4544</div>
<div class="t" style="left:1391.60px;top:821.97px;font-size:17.25px;color:#f2f2f2;transform:scaleX(1.3006);">0,4953</div>
<div class="t" style="left:1499.60px;top:821.97px;font-size:17.25px;color:#f2f2f2;transform:scaleX(1.3006);">0,5346</div>
<div class="a" style="left:864px;top:842.86px;width:736.5px;height:26.43px;background:#424242;"></div>
<div class="t" style="left:881.90px;top:848.52px;font-size:16.52px;color:#f6f6f6;font-weight:bold;transform:scaleX(1.2250);">Y</div>
<div class="t" style="left:1067.60px;top:848.10px;font-size:17.25px;color:#f2f2f2;transform:scaleX(1.3125);">218,9957</div>
<div class="t" style="left:1175.60px;top:848.10px;font-size:17.25px;color:#f2f2f2;transform:scaleX(1.3125);">215,3754</div>
<div class="t" style="left:1283.60px;top:848.10px;font-size:17.25px;color:#f2f2f2;transform:scaleX(1.3125);">212,3627</div>
<div class="t" style="left:1391.60px;top:848.10px;font-size:17.25px;color:#f2f2f2;transform:scaleX(1.3125);">209,8252</div>
<div class="t" style="left:1499.60px;top:848.10px;font-size:17.25px;color:#f2f2f2;transform:scaleX(1.3125);">207,4730</div>
<div class="a" style="left:864px;top:868.99px;width:736.5px;height:26.43px;background:#808080;"></div>
<div class="t" style="left:881.90px;top:874.65px;font-size:16.52px;color:#f6f6f6;font-weight:bold;transform:scaleX(1.3848);">Target x:CIE31</div>
<div class="t" style="left:1067.60px;top:874.23px;font-size:17.25px;color:#f2f2f2;transform:scaleX(1.3006);">0,3388</div>
<div class="t" style="left:1175.60px;top:874.23px;font-size:17.25px;color:#f2f2f2;transform:scaleX(1.3006);">0,3624</div>
<div class="t" style="left:1283.60px;top:874.23px;font-size:17.25px;color:#f2f2f2;transform:scaleX(1.3006);">0,3871</div>
<div class="t" style="left:1391.60px;top:874.23px;font-size:17.25px;color:#f2f2f2;transform:scaleX(1.3006);">0,4121</div>
<div class="t" style="left:1499.60px;top:874.23px;font-size:17.25px;color:#f2f2f2;transform:scaleX(1.3006);">0,4378</div>
<div class="a" style="left:864px;top:895.12px;width:736.5px;height:26.43px;background:#424242;"></div>
<div class="t" style="left:881.90px;top:900.78px;font-size:16.52px;color:#f6f6f6;font-weight:bold;transform:scaleX(1.3848);">Target y:CIE31</div>
<div class="t" style="left:1067.60px;top:900.36px;font-size:17.25px;color:#f2f2f2;transform:scaleX(1.3006);">0,3722</div>
<div class="t" style="left:1175.60px;top:900.36px;font-size:17.25px;color:#f2f2f2;transform:scaleX(1.3330);">0,4112</div>
<div class="t" style="left:1283.60px;top:900.36px;font-size:17.25px;color:#f2f2f2;transform:scaleX(1.3006);">0,4520</div>
<div class="t" style="left:1391.60px;top:900.36px;font-size:17.25px;color:#f2f2f2;transform:scaleX(1.3006);">0,4933</div>
<div class="t" style="left:1499.60px;top:900.36px;font-size:17.25px;color:#f2f2f2;transform:scaleX(1.3006);">0,5359</div>
<div class="a" style="left:864px;top:921.25px;width:736.5px;height:26.43px;background:#808080;"></div>
<div class="t" style="left:881.90px;top:926.91px;font-size:16.52px;color:#f6f6f6;font-weight:bold;transform:scaleX(1.4092);">Target Y</div>
<div class="t" style="left:1067.60px;top:926.49px;font-size:17.25px;color:#f2f2f2;transform:scaleX(1.3125);">216,1540</div>
<div class="t" style="left:1175.60px;top:926.49px;font-size:17.25px;color:#f2f2f2;transform:scaleX(1.3125);">212,2889</div>
<div class="t" style="left:1283.60px;top:926.49px;font-size:17.25px;color:#f2f2f2;transform:scaleX(1.3125);">209,0696</div>
<div class="t" style="left:1391.60px;top:926.49px;font-size:17.25px;color:#f2f2f2;transform:scaleX(1.3125);">206,4247</div>
<div class="t" style="left:1499.60px;top:926.49px;font-size:17.25px;color:#f2f2f2;transform:scaleX(1.3125);">204,1809</div>
<div class="a" style="left:864px;top:947.38px;width:736.5px;height:26.43px;background:#424242;"></div>
<div class="t" style="left:881.90px;top:953.04px;font-size:16.52px;color:#f6f6f6;font-weight:bold;transform:scaleX(1.4089);">ΔE 2000</div>
<div class="t" style="left:1067.60px;top:952.62px;font-size:17.25px;color:#f2f2f2;transform:scaleX(1.3006);">0,4773</div>
<div class="t" style="left:1175.60px;top:952.62px;font-size:17.25px;color:#f2f2f2;transform:scaleX(1.3006);">0,4578</div>
<div class="t" style="left:1283.60px;top:952.62px;font-size:17.25px;color:#f2f2f2;transform:scaleX(1.3006);">0,5447</div>
<div class="t" style="left:1391.60px;top:952.62px;font-size:17.25px;color:#f2f2f2;transform:scaleX(1.3006);">0,5430</div>
<div class="t" style="left:1499.60px;top:952.62px;font-size:17.25px;color:#f2f2f2;transform:scaleX(1.3006);">0,3678</div>
<div class="a" style="left:864px;top:973.51px;width:736.5px;height:26.13px;background:#808080;"></div>
<div class="t" style="left:881.90px;top:979.17px;font-size:16.52px;color:#f6f6f6;font-weight:bold;transform:scaleX(1.3443);">ΔE ITP</div>
<div class="t" style="left:1067.60px;top:978.75px;font-size:17.25px;color:#f2f2f2;transform:scaleX(1.3006);">1,1081</div>
<div class="t" style="left:1175.60px;top:978.75px;font-size:17.25px;color:#f2f2f2;transform:scaleX(1.3006);">1,3413</div>
<div class="t" style="left:1283.60px;top:978.75px;font-size:17.25px;color:#f2f2f2;transform:scaleX(1.3006);">1,8861</div>
<div class="t" style="left:1391.60px;top:978.75px;font-size:17.25px;color:#f2f2f2;transform:scaleX(1.3330);">2,1144</div>
<div class="t" style="left:1499.60px;top:978.75px;font-size:17.25px;color:#f2f2f2;transform:scaleX(1.3006);">1,5325</div>
<div class="a" style="left:1214px;top:187.5px;width:704.8px;height:566.5px;border:7.1px solid #c1c000;box-sizing:border-box;background:#323232;"></div>
<div class="t" style="left:1523.50px;top:200.55px;font-size:14.06px;color:#dcdcdc;transform:scaleX(1.0395);">CIE 1976 u'v'</div>
<div class="a" style="left:1258.65px;top:217.85px;width:650.8px;height:500.7px;background:#222;border:1.5px solid #878787;box-sizing:border-box;"></div>
<div class="a cie" style="left:1260px;top:219px;width:648px;height:498px;overflow:hidden"><div class="a" style="left:0;top:0;width:948px;height:498px;clip-path:polygon(276.5px 484.2px,276.5px 484.2px,276.5px 484.1px,276.5px 484.1px,276.5px 484.1px,276.4px 484.1px,276.4px 484.1px,276.4px 484.2px,276.4px 484.2px,276.3px 484.2px,276.3px 484.3px,276.3px 484.3px,276.3px 484.4px,276.2px 484.4px,276.2px 484.4px,276.2px 484.5px,276.1px 484.5px,276.1px 484.5px,276.1px 484.5px,276.0px 484.5px,276.0px 484.5px,275.9px 484.5px,275.9px 484.5px,275.8px 484.5px,275.8px 484.5px,275.7px 484.5px,275.7px 484.5px,275.6px 484.6px,275.6px 484.6px,275.5px 484.7px,275.5px 484.7px,275.4px 484.7px,275.4px 484.8px,275.3px 484.8px,275.2px 484.8px,275.2px 484.8px,275.1px 484.8px,275.0px 484.8px,275.0px 484.8px,274.9px 484.8px,274.8px 484.8px,274.7px 484.8px,274.7px 484.7px,274.6px 484.7px,274.5px 484.7px,274.4px 484.7px,274.3px 484.7px,274.2px 484.8px,274.1px 484.8px,274.0px 484.8px,273.9px 484.8px,273.8px 484.8px,273.7px 484.8px,273.6px 484.8px,273.5px 484.8px,273.3px 484.8px,273.2px 484.8px,273.1px 484.7px,272.9px 484.7px,272.7px 484.6px,272.5px 484.5px,272.3px 484.4px,272.1px 484.3px,271.8px 484.1px,271.6px 484.0px,271.3px 483.8px,271.0px 483.6px,270.7px 483.4px,270.3px 483.2px,269.9px 482.9px,269.6px 482.7px,269.2px 482.4px,268.8px 482.1px,268.4px 481.8px,268.0px 481.5px,267.5px 481.2px,267.1px 480.8px,266.6px 480.4px,266.1px 480.1px,265.6px 479.6px,265.0px 479.2px,264.4px 478.7px,263.8px 478.2px,263.2px 477.7px,262.5px 477.2px,261.8px 476.6px,261.1px 476.0px,260.3px 475.4px,259.5px 474.8px,258.8px 474.1px,258.0px 473.4px,257.1px 472.7px,256.3px 472.0px,255.4px 471.2px,254.5px 470.5px,253.6px 469.7px,252.7px 468.9px,251.7px 468.1px,250.7px 467.3px,249.7px 466.4px,248.6px 465.5px,247.5px 464.6px,246.4px 463.7px,245.2px 462.7px,244.0px 461.7px,242.7px 460.7px,241.4px 459.6px,240.0px 458.4px,238.6px 457.3px,237.1px 456.1px,235.6px 454.9px,234.1px 453.6px,232.5px 452.3px,231.0px 451.0px,229.4px 449.7px,227.7px 448.4px,226.0px 447.0px,224.3px 445.5px,222.5px 444.0px,220.7px 442.5px,218.8px 440.8px,216.9px 439.2px,214.9px 437.4px,212.8px 435.6px,210.7px 433.7px,208.6px 431.8px,206.4px 429.8px,204.2px 427.7px,201.9px 425.6px,199.6px 423.4px,197.3px 421.2px,194.9px 418.8px,192.5px 416.4px,189.9px 413.8px,187.3px 411.0px,184.5px 408.1px,181.7px 405.0px,178.7px 401.6px,175.6px 398.1px,172.4px 394.3px,169.0px 390.3px,165.6px 386.2px,162.1px 381.8px,158.5px 377.3px,154.8px 372.5px,151.1px 367.6px,147.2px 362.5px,143.3px 357.3px,139.4px 351.8px,135.4px 346.2px,131.3px 340.4px,127.2px 334.4px,123.1px 328.2px,118.9px 321.8px,114.6px 315.2px,110.3px 308.5px,106.0px 301.6px,101.7px 294.6px,97.3px 287.5px,93.0px 280.2px,88.6px 272.9px,84.3px 265.6px,80.0px 258.2px,75.7px 250.7px,71.5px 243.2px,67.3px 235.7px,63.3px 228.2px,59.3px 220.7px,55.5px 213.2px,51.8px 205.8px,48.2px 198.4px,44.8px 191.1px,41.5px 183.8px,38.3px 176.7px,35.3px 169.6px,32.4px 162.7px,29.6px 155.9px,27.0px 149.2px,24.4px 142.8px,22.0px 136.4px,19.8px 130.3px,17.6px 124.3px,15.6px 118.5px,13.8px 112.9px,12.0px 107.6px,10.5px 102.4px,9.0px 97.4px,7.7px 92.6px,6.5px 88.1px,5.5px 83.7px,4.5px 79.5px,3.7px 75.5px,3.0px 71.6px,2.3px 68.0px,1.8px 64.5px,1.4px 61.2px,1.1px 58.0px,0.9px 54.9px,0.7px 52.0px,0.7px 49.3px,0.8px 46.6px,0.9px 44.1px,1.1px 41.7px,1.4px 39.4px,1.8px 37.2px,2.3px 35.1px,2.9px 33.1px,3.5px 31.2px,4.2px 29.4px,5.0px 27.8px,5.9px 26.2px,6.8px 24.7px,7.8px 23.3px,8.9px 21.9px,10.0px 20.7px,11.2px 19.6px,12.5px 18.5px,13.8px 17.6px,15.1px 16.7px,16.5px 15.9px,18.0px 15.2px,19.5px 14.5px,21.0px 14.0px,22.6px 13.4px,24.2px 13.0px,25.8px 12.6px,27.5px 12.2px,29.2px 11.9px,30.9px 11.6px,32.7px 11.4px,34.4px 11.2px,36.3px 11.1px,38.1px 10.9px,39.9px 10.8px,41.8px 10.7px,43.7px 10.6px,45.6px 10.5px,47.5px 10.5px,49.4px 10.5px,51.3px 10.4px,53.3px 10.4px,55.2px 10.4px,57.1px 10.4px,59.0px 10.4px,60.9px 10.4px,62.9px 10.5px,64.8px 10.5px,66.7px 10.5px,68.7px 10.6px,70.6px 10.7px,72.6px 10.7px,74.6px 10.8px,76.6px 10.9px,78.6px 11.0px,80.6px 11.1px,82.7px 11.2px,84.8px 11.4px,86.9px 11.5px,89.0px 11.6px,91.1px 11.8px,93.3px 11.9px,95.4px 12.1px,97.6px 12.2px,99.8px 12.4px,102.1px 12.6px,104.4px 12.8px,106.6px 13.0px,109.0px 13.2px,111.3px 13.4px,113.7px 13.6px,116.1px 13.8px,118.5px 14.1px,120.9px 14.3px,123.4px 14.5px,125.9px 14.8px,128.4px 15.0px,131.0px 15.3px,133.6px 15.6px,136.2px 15.8px,138.9px 16.1px,141.6px 16.4px,144.3px 16.7px,147.1px 17.0px,149.9px 17.3px,152.8px 17.6px,155.7px 17.9px,158.6px 18.2px,161.6px 18.5px,164.5px 18.9px,167.6px 19.2px,170.7px 19.5px,173.8px 19.9px,176.9px 20.2px,180.1px 20.6px,183.3px 20.9px,186.6px 21.3px,189.9px 21.7px,193.3px 22.1px,196.7px 22.4px,200.1px 22.8px,203.6px 23.2px,207.1px 23.6px,210.7px 24.0px,214.3px 24.4px,218.0px 24.9px,221.7px 25.3px,225.5px 25.7px,229.2px 26.1px,233.1px 26.6px,237.0px 27.0px,240.9px 27.5px,244.9px 27.9px,248.9px 28.4px,252.9px 28.9px,257.0px 29.3px,261.2px 29.8px,265.3px 30.3px,269.6px 30.8px,273.9px 31.3px,278.2px 31.8px,282.5px 32.3px,286.9px 32.8px,291.4px 33.3px,295.9px 33.8px,300.4px 34.3px,304.9px 34.9px,309.5px 35.4px,314.2px 35.9px,318.8px 36.5px,323.5px 37.0px,328.3px 37.5px,333.0px 38.1px,337.8px 38.6px,342.6px 39.2px,347.5px 39.7px,352.4px 40.3px,357.2px 40.9px,362.2px 41.4px,367.1px 42.0px,372.1px 42.6px,377.0px 43.1px,382.0px 43.7px,386.9px 44.3px,391.8px 44.9px,396.7px 45.4px,401.6px 46.0px,406.4px 46.5px,411.2px 47.1px,416.0px 47.6px,420.7px 48.2px,425.5px 48.7px,430.2px 49.3px,435.0px 49.8px,439.7px 50.4px,444.4px 50.9px,449.1px 51.4px,453.8px 52.0px,458.5px 52.5px,463.1px 53.1px,467.7px 53.6px,472.2px 54.1px,476.6px 54.6px,481.0px 55.1px,485.3px 55.6px,489.5px 56.1px,493.7px 56.5px,497.8px 57.0px,501.9px 57.5px,505.9px 57.9px,509.8px 58.4px,513.7px 58.8px,517.6px 59.3px,521.3px 59.7px,525.0px 60.1px,528.7px 60.6px,532.2px 61.0px,535.7px 61.4px,539.1px 61.8px,542.5px 62.2px,545.7px 62.5px,548.9px 62.9px,552.1px 63.3px,555.1px 63.6px,558.1px 64.0px,561.1px 64.3px,563.9px 64.6px,566.7px 65.0px,569.5px 65.3px,572.2px 65.6px,574.8px 65.9px,577.4px 66.2px,579.9px 66.4px,582.3px 66.7px,584.7px 67.0px,587.1px 67.3px,589.4px 67.5px,591.6px 67.8px,593.8px 68.1px,596.0px 68.3px,598.1px 68.6px,600.2px 68.8px,602.3px 69.0px,604.3px 69.3px,606.3px 69.5px,608.3px 69.7px,610.2px 69.9px,612.1px 70.2px,613.9px 70.4px,615.8px 70.6px,617.5px 70.8px,619.3px 71.0px,621.0px 71.2px,622.6px 71.4px,624.2px 71.6px,625.8px 71.8px,627.4px 71.9px,628.9px 72.1px,630.3px 72.3px,631.8px 72.4px,633.2px 72.6px,634.5px 72.7px,635.8px 72.9px,637.1px 73.0px,638.3px 73.2px,639.5px 73.3px,640.6px 73.4px,641.8px 73.6px,642.8px 73.7px,643.9px 73.8px,644.9px 73.9px,645.9px 74.0px,646.8px 74.1px,647.7px 74.3px,648.6px 74.4px,649.5px 74.5px,650.3px 74.6px,651.1px 74.6px,651.9px 74.7px,652.7px 74.8px,653.4px 74.9px,654.2px 75.0px,654.8px 75.1px,655.5px 75.1px,656.2px 75.2px,656.8px 75.3px,657.4px 75.4px,657.9px 75.4px,658.5px 75.5px,658.9px 75.5px,659.4px 75.6px,659.9px 75.7px,660.3px 75.7px,660.7px 75.7px,661.0px 75.8px,661.4px 75.8px,661.7px 75.9px,662.1px 75.9px,662.4px 75.9px,662.8px 76.0px,663.1px 76.0px,663.4px 76.1px,663.8px 76.1px,664.1px 76.1px,664.4px 76.2px,664.7px 76.2px,664.9px 76.2px,665.2px 76.3px,665.4px 76.3px,665.7px 76.3px,665.9px 76.4px,666.2px 76.4px,666.4px 76.4px,666.7px 76.4px,666.9px 76.5px,667.2px 76.5px,667.4px 76.5px,667.7px 76.6px,667.9px 76.6px,668.2px 76.6px,668.4px 76.6px,668.7px 76.7px,668.9px 76.7px,669.2px 76.7px,669.4px 76.8px,669.6px 76.8px,669.8px 76.8px,670.0px 76.8px,670.2px 76.8px,670.4px 76.9px,670.6px 76.9px,670.8px 76.9px,670.9px 76.9px,671.1px 76.9px,671.2px 77.0px,671.4px 77.0px,671.5px 77.0px,671.6px 77.0px,671.7px 77.0px,671.8px 77.0px,671.9px 77.0px,671.9px 77.0px,672.0px 77.1px,672.1px 77.1px,672.1px 77.1px,672.2px 77.1px,672.2px 77.1px,672.3px 77.1px,672.3px 77.1px,672.3px 77.1px,672.4px 77.1px,672.4px 77.1px,672.4px 77.1px,672.5px 77.1px)"><i style="left:29px;top:10px;width:61px;height:2px;background:linear-gradient(90deg,#00ff01 0px,#00ff00 60px)"></i><i style="left:19px;top:12px;width:96px;height:2px;background:linear-gradient(90deg,#00ff06 0px,#00ff00 42px,#00ff00 85px,#11ff00 95px)"></i><i style="left:14px;top:14px;width:122px;height:2px;background:linear-gradient(90deg,#00ff09 0px,#00ff01 57px,#00ff00 90px,#36ff00 121px)"></i><i style="left:11px;top:16px;width:144px;height:2px;background:linear-gradient(90deg,#00ff0d 0px,#00ff00 94px,#2cff00 119px,#5bff00 143px)"></i><i style="left:8px;top:18px;width:165px;height:2px;background:linear-gradient(90deg,#00ff10 0px,#00ff02 97px,#3dff00 131px,#82ff00 164px)"></i><i style="left:6px;top:20px;width:185px;height:2px;background:linear-gradient(90deg,#00ff13 0px,#00ff05 100px,#27ff01 122px,#52ff00 144px,#7dff00 164px,#acff00 184px)"></i><i style="left:5px;top:22px;width:204px;height:2px;background:linear-gradient(90deg,#00ff17 0px,#01ff09 102px,#34ff04 130px,#69ff00 156px,#a0ff00 180px,#dcff00 203px)"></i><i style="left:3px;top:24px;width:224px;height:2px;background:linear-gradient(90deg,#00ff1a 0px,#00ff0d 104px,#39ff07 135px,#76ff02 164px,#b7ff00 191px,#feff00 217px,#ffef00 223px)"></i><i style="left:2px;top:26px;width:242px;height:2px;background:linear-gradient(90deg,#00ff1d 0px,#00ff10 105px,#36ff0b 135px,#75ff06 165px,#b7ff01 192px,#ffff00 218px,#ffe100 229px,#ffc600 241px)"></i><i style="left:1px;top:28px;width:260px;height:2px;background:linear-gradient(90deg,#00ff20 0px,#00ff14 107px,#3aff0f 138px,#75ff0a 166px,#b7ff05 193px,#ffff00 219px,#ffe600 228px,#ffd000 237px,#ffba00 248px,#ffa600 259px)"></i><i style="left:0px;top:30px;width:279px;height:2px;background:linear-gradient(90deg,#00ff24 0px,#00ff18 108px,#37ff13 138px,#75ff0e 167px,#b4ff0a 193px,#fffe04 220px,#ffdd01 232px,#ffbf00 246px,#ffa400 261px,#ff8b00 278px)"></i><i style="left:0px;top:32px;width:296px;height:2px;background:linear-gradient(90deg,#00ff27 0px,#00ff1b 109px,#3bff17 140px,#77ff13 168px,#b7ff0e 194px,#feff09 219px,#ffd304 236px,#ffb101 253px,#ff9100 273px,#ff7700 295px)"></i><i style="left:0px;top:34px;width:314px;height:2px;background:linear-gradient(90deg,#00ff2a 0px,#00ff1f 109px,#36ff1c 138px,#74ff17 167px,#b7ff13 194px,#feff0e 219px,#ffce08 238px,#ffa603 259px,#ff8200 284px,#ff6400 313px)"></i><i style="left:0px;top:36px;width:331px;height:2px;background:linear-gradient(90deg,#00ff2d 0px,#00ff23 110px,#39ff1f 140px,#76ff1c 168px,#b7ff17 194px,#ffff13 219px,#ffe30f 229px,#ffc90b 240px,#ffb108 252px,#ff9c05 265px,#ff8802 279px,#ff7500 295px,#ff5600 330px)"></i><i style="left:0px;top:38px;width:348px;height:2px;background:linear-gradient(90deg,#00ff30 0px,#00ff27 110px,#37ff24 139px,#76ff20 168px,#b7ff1c 194px,#ffff18 219px,#ffe013 230px,#ffc40f 242px,#ffa90b 256px,#ff9207 271px,#ff7d04 287px,#ff6a01 305px,#ff5900 325px,#ff4900 347px)"></i><i style="left:0px;top:40px;width:366px;height:2px;background:linear-gradient(90deg,#00ff34 0px,#01ff2b 111px,#38ff28 140px,#76ff25 168px,#b7ff21 194px,#fdff1d 218px,#fffe1d 219px,#ffd817 233px,#ffbb12 246px,#ffa00d 261px,#ff8909 277px,#ff7406 295px,#ff6002 316px,#ff4e00 339px,#ff3e00 365px)"></i><i style="left:0px;top:42px;width:383px;height:2px;background:linear-gradient(90deg,#00ff37 0px,#00ff2f 111px,#38ff2c 140px,#75ff29 168px,#b7ff26 194px,#fdff23 218px,#ffd71b 233px,#ffb916 247px,#ff9d10 263px,#ff820c 282px,#ff6b07 303px,#ff5704 326px,#ff4500 352px,#ff3400 382px)"></i><i style="left:0px;top:44px;width:400px;height:2px;background:linear-gradient(90deg,#00ff3a 0px,#01ff33 112px,#39ff31 141px,#77ff2e 169px,#b8ff2b 194px,#feff28 218px,#ffd620 233px,#ffb419 249px,#ff9613 267px,#ff7b0e 287px,#ff6409 310px,#ff4f05 336px,#ff3c01 366px,#ff2c00 399px)"></i><i style="left:0px;top:46px;width:418px;height:2px;background:linear-gradient(90deg,#00ff3e 0px,#00ff37 112px,#38ff35 141px,#77ff33 169px,#b8ff30 194px,#ffff2d 218px,#ffd624 233px,#ffb11d 250px,#ff9115 270px,#ff750f 292px,#ff5d0a 317px,#ff4706 346px,#ff3401 379px,#ff2400 417px)"></i><i style="left:0px;top:48px;width:435px;height:2px;background:linear-gradient(90deg,#00ff41 0px,#01ff3b 113px,#3aff39 142px,#77ff37 169px,#b8ff35 194px,#ffff33 218px,#ffd329 234px,#ffad20 252px,#ff8c18 273px,#ff6f11 297px,#ff560c 324px,#ff4006 356px,#ff2e02 392px,#ff1d00 434px)"></i><i style="left:0px;top:50px;width:453px;height:2px;background:linear-gradient(90deg,#00ff44 0px,#00ff40 113px,#37ff3e 141px,#74ff3c 168px,#b5ff3b 193px,#fffe38 218px,#ffe732 226px,#ffd02d 235px,#ffa923 254px,#ff871a 276px,#ff6913 302px,#ff500d 332px,#ff3a07 366px,#ff2703 406px,#ff1700 452px)"></i><i style="left:0px;top:52px;width:470px;height:2px;background:linear-gradient(90deg,#00ff48 0px,#01ff44 114px,#39ff43 142px,#76ff41 169px,#b5ff40 193px,#fffe3e 218px,#ffe637 226px,#ffcf31 235px,#ffa626 255px,#ff821d 279px,#ff6515 306px,#ff4b0e 338px,#ff3508 375px,#ff2203 418px,#ff1100 469px)"></i><i style="left:0px;top:54px;width:488px;height:2px;background:linear-gradient(90deg,#00ff4b 0px,#00ff48 114px,#38ff47 142px,#74ff46 168px,#b0ff45 191px,#feff44 217px,#fffd43 218px,#ffe23c 227px,#ffcc35 236px,#ffb62f 246px,#ffa229 257px,#ff7e1f 282px,#ff5f17 311px,#ff450f 345px,#ff2f09 385px,#ff1c04 432px,#ff0c00 487px)"></i><i style="left:0px;top:56px;width:505px;height:2px;background:linear-gradient(90deg,#00ff4f 0px,#01ff4d 115px,#37ff4c 142px,#73ff4b 168px,#b0ff4b 191px,#feff4a 217px,#fffc49 218px,#ffe241 227px,#ffc939 237px,#ffb132 248px,#ff9e2c 259px,#ff7921 285px,#ff5b18 315px,#ff4110 351px,#ff2a0a 394px,#ff1804 444px,#ff0700 504px)"></i><i style="left:0px;top:58px;width:523px;height:2px;background:linear-gradient(90deg,#00ff52 0px,#00ff51 115px,#39ff51 143px,#75ff50 169px,#b8ff50 194px,#ffff4f 217px,#ffe447 226px,#ffca3f 236px,#ffb337 247px,#ff9d30 259px,#ff892a 272px,#ff7724 286px,#ff571a 319px,#ff3d12 357px,#ff260a 403px,#ff1304 457px,#ff0300 522px)"></i><i style="left:0px;top:60px;width:540px;height:2px;background:linear-gradient(90deg,#00ff56 0px,#01ff56 116px,#3aff56 144px,#78ff56 170px,#b8ff55 194px,#fffe55 217px,#ffe04b 227px,#ffc743 237px,#ffb03b 248px,#ff9933 261px,#ff862d 274px,#ff7326 289px,#ff531c 323px,#ff3813 364px,#ff210b 413px,#ff0e04 474px,#ff0000 539px)"></i><i style="left:0px;top:62px;width:557px;height:2px;background:linear-gradient(90deg,#00ff59 0px,#00ff5a 116px,#38ff5a 143px,#75ff5b 169px,#b3ff5b 192px,#fffe5b 217px,#ffe050 227px,#ffc447 238px,#ffab3e 250px,#ff9536 263px,#ff812f 277px,#ff6e28 293px,#ff4e1d 329px,#ff3113 375px,#ff1b0b 430px,#ff0302 517px,#ff0001 533px,#ff0000 556px)"></i><i style="left:0px;top:64px;width:575px;height:2px;background:linear-gradient(90deg,#00ff5d 0px,#00ff5f 116px,#35ff5f 142px,#72ff60 168px,#b0ff61 191px,#fdff62 216px,#fffd61 217px,#ffdf56 227px,#ffc34b 238px,#ffab42 250px,#ff9339 264px,#ff7e31 279px,#ff6a2a 296px,#ff491e 334px,#ff2c13 385px,#ff140a 448px,#ff0003 530px,#ff0000 574px)"></i><i style="left:0px;top:66px;width:592px;height:2px;background:linear-gradient(90deg,#00ff61 0px,#00ff63 117px,#39ff64 144px,#74ff65 169px,#b0ff66 191px,#feff68 216px,#fffd67 217px,#ffde5b 227px,#ffc04f 239px,#ffa645 252px,#ff8f3c 266px,#ff7934 282px,#ff662c 299px,#ff5525 318px,#ff451f 339px,#ff3519 365px,#ff2713 395px,#ff0e0a 466px,#ff0004 528px,#ff0000 591px)"></i><i style="left:0px;top:68px;width:609px;height:2px;background:linear-gradient(90deg,#00ff64 0px,#00ff68 117px,#36ff69 143px,#74ff6b 169px,#b6ff6c 193px,#ffff6e 216px,#ffde60 227px,#ffc054 239px,#ffa549 252px,#ff8d3f 267px,#ff7736 283px,#ff642e 301px,#ff5227 321px,#ff4221 343px,#ff311a 372px,#ff2214 405px,#ff0a0a 483px,#ff0006 526px,#ff0000 608px)"></i><i style="left:0px;top:70px;width:627px;height:2px;background:linear-gradient(90deg,#00ff68 0px,#00ff6d 118px,#39ff6f 145px,#76ff70 170px,#b6ff72 193px,#ffff74 216px,#ffdd66 227px,#ffbf59 239px,#ffa34d 253px,#ff8a42 268px,#ff7439 285px,#ff6030 304px,#ff4e29 325px,#ff3e22 348px,#ff2d1b 379px,#ff1e14 415px,#ff100e 456px,#ff0509 502px,#ff0007 524px,#ff0000 626px)"></i><i style="left:0px;top:72px;width:644px;height:2px;background:linear-gradient(90deg,#00ff6c 0px,#00ff72 118px,#34ff74 143px,#73ff76 169px,#b3ff78 192px,#fffe7a 216px,#ffdc6b 227px,#ffbc5d 240px,#ffa050 254px,#ff8745 270px,#ff713b 287px,#ff5c32 307px,#ff4a2a 329px,#ff3a23 353px,#ff291b 387px,#ff1a14 425px,#ff0c0e 469px,#ff0009 520px,#ff0000 643px)"></i><i style="left:0px;top:74px;width:648px;height:2px;background:linear-gradient(90deg,#00ff6f 0px,#00ff77 119px,#38ff79 145px,#75ff7c 170px,#b3ff7e 192px,#fffd81 216px,#ffdb71 227px,#ffbb62 240px,#ff9f55 254px,#ff8649 270px,#ff703f 287px,#ff5c35 307px,#ff4a2d 329px,#ff3925 354px,#ff281d 387px,#ff1916 425px,#ff0c10 468px,#ff000b 518px,#ff0001 647px)"></i><i style="left:1px;top:76px;width:647px;height:2px;background:linear-gradient(90deg,#00ff73 0px,#00ff7c 118px,#35ff7e 143px,#72ff81 168px,#b0ff84 190px,#feff88 214px,#fffd87 215px,#ffdb76 226px,#ffba67 239px,#ff9f59 253px,#ff854d 269px,#ff6f42 286px,#ff5b38 306px,#ff492f 328px,#ff3827 353px,#ff271f 386px,#ff1918 423px,#ff0c12 466px,#ff000c 515px,#ff0002 646px)"></i><i style="left:1px;top:78px;width:647px;height:2px;background:linear-gradient(90deg,#00ff77 0px,#01ff81 119px,#37ff84 144px,#72ff87 168px,#adff8a 189px,#d6ff8c 202px,#feff8f 214px,#fffc8d 215px,#ffda7c 226px,#ffba6b 239px,#ff9e5d 253px,#ff8451 269px,#ff6f46 286px,#ff5a3b 306px,#ff4832 328px,#ff382a 353px,#ff2721 386px,#ff181a 423px,#ff000e 513px,#ff0003 646px)"></i><i style="left:2px;top:80px;width:646px;height:2px;background:linear-gradient(90deg,#00ff7b 0px,#00ff86 118px,#36ff89 143px,#74ff8d 168px,#b6ff91 191px,#ffff95 213px,#ffdc83 224px,#ffbb72 237px,#ff9f63 251px,#ff8555 267px,#ff6f4a 284px,#ff5a3f 304px,#ff4835 326px,#ff382d 351px,#ff2724 383px,#ff181c 420px,#ff000f 509px,#ff0004 645px)"></i><i style="left:2px;top:82px;width:646px;height:2px;background:linear-gradient(90deg,#00ff7f 0px,#01ff8b 119px,#3aff8f 145px,#77ff93 169px,#b7ff98 191px,#fffe9c 213px,#ffdb89 224px,#ffba77 237px,#ff9e67 251px,#ff8459 267px,#ff6e4d 284px,#ff5942 304px,#ff4738 326px,#ff372f 351px,#ff2626 383px,#ff181e 419px,#ff0011 507px,#ff0005 645px)"></i><i style="left:3px;top:84px;width:645px;height:2px;background:linear-gradient(90deg,#00ff83 0px,#00ff91 118px,#37ff95 143px,#74ff99 167px,#b4ff9e 189px,#fffea2 212px,#ffda8f 223px,#ffb97c 236px,#ff9d6c 250px,#ff835d 266px,#ff6d51 283px,#ff5945 303px,#ff473b 325px,#ff3631 350px,#ff2628 381px,#ff1820 417px,#ff0013 504px,#ff0006 644px)"></i><i style="left:3px;top:86px;width:645px;height:2px;background:linear-gradient(90deg,#00ff87 0px,#01ff96 119px,#39ff9b 144px,#73ff9f 167px,#b0ffa4 188px,#feffaa 211px,#fffda9 212px,#ffda94 223px,#ffb981 236px,#ff9c70 250px,#ff8462 265px,#ff6e55 282px,#ff5949 302px,#ff473e 324px,#ff3634 349px,#ff262b 380px,#ff1822 416px,#ff0014 502px,#ff0007 644px)"></i><i style="left:4px;top:88px;width:644px;height:2px;background:linear-gradient(90deg,#00ff8b 0px,#00ff9c 118px,#36ffa0 142px,#73ffa5 166px,#adffab 186px,#d4ffae 198px,#feffb2 210px,#fffcb0 211px,#ffd99a 222px,#ffb886 235px,#ff9b75 249px,#ff8366 264px,#ff6d58 281px,#ff584c 301px,#ff4641 323px,#ff3537 348px,#ff252d 379px,#ff1724 414px,#ff0016 499px,#ff0009 643px)"></i><i style="left:4px;top:90px;width:644px;height:2px;background:linear-gradient(90deg,#00ff8f 0px,#01ffa1 119px,#3affa6 144px,#78ffac 168px,#baffb2 190px,#ffffb9 210px,#ffdba2 221px,#ffb98d 234px,#ff9c7b 248px,#ff846b 263px,#ff6d5d 280px,#ff5850 300px,#ff4644 322px,#ff353a 347px,#ff2630 377px,#ff1827 412px,#ff0018 496px,#ff000a 643px)"></i><i style="left:5px;top:92px;width:643px;height:2px;background:linear-gradient(90deg,#00ff93 0px,#00ffa7 118px,#39ffac 143px,#75ffb2 166px,#b7ffb9 188px,#fffec0 209px,#ffdaa8 220px,#ffbb94 232px,#ff9d80 246px,#ff836f 262px,#ff6c61 279px,#ff5753 299px,#ff4547 321px,#ff353c 346px,#ff2532 376px,#ff1729 410px,#ff001a 493px,#ff000b 642px)"></i><i style="left:5px;top:94px;width:643px;height:2px;background:linear-gradient(90deg,#00ff98 0px,#01ffac 119px,#38ffb2 143px,#75ffb9 166px,#b4ffc0 187px,#fffec7 209px,#ffd9ae 220px,#ffba99 232px,#ff9c85 246px,#ff8273 262px,#ff6c64 279px,#ff5756 299px,#ff444a 321px,#ff343f 346px,#ff2434 376px,#ff172b 410px,#ff001c 491px,#ff000c 642px)"></i><i style="left:6px;top:96px;width:642px;height:2px;background:linear-gradient(90deg,#00ff9c 0px,#00ffb2 118px,#37ffb9 142px,#74ffc0 165px,#b1ffc6 185px,#fdffcf 207px,#fffdce 208px,#ffd9b5 219px,#ffb99f 231px,#ff9c8a 245px,#ff8178 261px,#ff6b68 278px,#ff5659 298px,#ff444d 320px,#ff3341 345px,#ff2436 375px,#ff162d 408px,#ff001d 488px,#ff000d 641px)"></i><i style="left:6px;top:98px;width:642px;height:2px;background:linear-gradient(90deg,#00ffa0 0px,#00ffab 64px,#01ffb8 119px,#39ffbf 143px,#74ffc6 165px,#aeffcd 184px,#feffd7 207px,#fffcd5 208px,#ffd8bb 219px,#ffb8a4 231px,#ff9b8f 245px,#ff807c 261px,#ff6a6c 278px,#ff555d 298px,#ff434f 320px,#ff3344 345px,#ff2439 374px,#ff162f 407px,#ff001f 485px,#ff000e 641px)"></i><i style="left:7px;top:100px;width:641px;height:2px;background:linear-gradient(90deg,#00ffa5 0px,#00ffb0 63px,#00ffbe 118px,#38ffc5 142px,#77ffcd 165px,#b8ffd6 186px,#ffffdf 206px,#ffd7c1 218px,#ffb7aa 230px,#ff9a94 244px,#ff8181 259px,#ff6a70 276px,#ff5561 296px,#ff4353 318px,#ff3247 343px,#ff233b 372px,#ff1632 404px,#ff0021 482px,#ff0017 554px,#ff000f 640px)"></i><i style="left:7px;top:102px;width:641px;height:2px;background:linear-gradient(90deg,#00ffa9 0px,#00ffb5 63px,#00ffc4 118px,#33ffcb 140px,#73ffd4 164px,#b4ffdd 185px,#ffffe7 206px,#ffd9ca 217px,#ffb9b1 229px,#ff9b9a 243px,#ff8187 258px,#ff6b75 275px,#ff5565 295px,#ff4356 317px,#ff324a 342px,#ff233e 371px,#ff1634 403px,#ff0023 480px,#ff0019 553px,#ff0010 640px)"></i><i style="left:8px;top:104px;width:640px;height:2px;background:linear-gradient(90deg,#00ffae 0px,#00ffbb 63px,#00ffca 118px,#3affd3 142px,#76ffdb 164px,#b4ffe4 184px,#fffeee 205px,#ffd8d0 216px,#ffb8b7 228px,#ff9a9f 242px,#ff818b 257px,#ff6a79 274px,#ff5568 294px,#ff4259 316px,#ff324c 341px,#ff2341 369px,#ff1636 401px,#ff0025 477px,#ff001a 550px,#ff0011 639px)"></i><i style="left:9px;top:106px;width:638px;height:2px;background:linear-gradient(90deg,#00ffb2 0px,#00ffc0 63px,#00ffd0 117px,#34ffd8 139px,#72ffe2 162px,#b1ffeb 182px,#fdfff7 203px,#fffdf6 204px,#ffd7d7 215px,#ffb7bd 227px,#ff99a4 241px,#ff808f 256px,#ff697d 273px,#ff546b 293px,#ff415c 315px,#ff314f 340px,#ff2243 368px,#ff1639 399px,#ff0027 473px,#ff001c 547px,#ff0012 637px)"></i><i style="left:9px;top:108px;width:636px;height:2px;background:linear-gradient(90deg,#00ffb7 0px,#00ffc6 63px,#00ffd7 118px,#38ffe0 141px,#72ffe9 162px,#aefff3 181px,#eefffd 199px,#fffcfd 204px,#ffd7de 215px,#ffb6c2 227px,#ff98a9 241px,#ff7f94 256px,#ff6881 273px,#ff536f 293px,#ff415f 315px,#ff3052 340px,#ff153b 398px,#ff0029 471px,#ff001d 545px,#ff0013 635px)"></i><i style="left:10px;top:110px;width:633px;height:2px;background:linear-gradient(90deg,#00ffbb 0px,#00ffcb 63px,#00ffdd 117px,#2affe4 135px,#60ffed 155px,#8dfff5 170px,#bffffd 185px,#fcf5ff 204px,#fff0fc 206px,#ffcddd 217px,#ffaec2 229px,#ff92a9 243px,#ff7a94 258px,#ff6481 275px,#ff4f70 295px,#ff3e60 317px,#ff2e53 342px,#ff143d 398px,#ff002b 468px,#ff001f 542px,#ff0015 632px)"></i><i style="left:11px;top:112px;width:630px;height:2px;background:linear-gradient(90deg,#00ffc0 0px,#00ffd1 63px,#00ffe4 117px,#46fff0 145px,#90fffd 170px,#d6f3ff 193px,#fbecff 205px,#ffe9fd 207px,#ffc6de 218px,#ffa9c4 230px,#ff8dab 244px,#ff7495 260px,#ff5f82 277px,#ff4c71 297px,#ff3b62 319px,#ff2c54 343px,#ff133e 398px,#ff002d 465px,#ff0020 539px,#ff0016 629px)"></i><i style="left:11px;top:114px;width:628px;height:2px;background:linear-gradient(90deg,#00ffc5 0px,#00ffd6 63px,#00ffea 117px,#36fff4 139px,#79fdff 163px,#ffe1fe 209px,#ffbddd 221px,#ffa1c4 233px,#ff87ab 247px,#ff7197 262px,#ff5c84 279px,#ff4973 299px,#ff3963 321px,#ff2955 346px,#ff1340 398px,#ff002f 462px,#ff0022 536px,#ff0017 627px)"></i><i style="left:12px;top:116px;width:625px;height:2px;background:linear-gradient(90deg,#00ffca 0px,#00ffdc 63px,#01fff1 117px,#25fff8 132px,#50fdff 148px,#a4ecff 179px,#fcdaff 209px,#ffd6fc 211px,#ffb7df 222px,#ff9ac3 235px,#ff81ac 249px,#ff6c97 264px,#ff5885 281px,#ff4673 301px,#ff3664 323px,#ff2756 348px,#ff1242 398px,#ff0031 459px,#ff0024 533px,#ff0018 624px)"></i><i style="left:13px;top:118px;width:622px;height:2px;background:linear-gradient(90deg,#00ffcf 0px,#00ffe2 62px,#00fff8 116px,#2cfdff 134px,#8aeaff 170px,#fbd2ff 210px,#ffcffd 212px,#ffb2e0 223px,#ff95c5 236px,#ff7dad 250px,#ff6798 266px,#ff5486 283px,#ff4374 303px,#ff3365 325px,#ff2557 350px,#ff1144 398px,#ff0034 456px,#ff0025 530px,#ff001a 621px)"></i><i style="left:13px;top:120px;width:620px;height:2px;background:linear-gradient(90deg,#00ffd4 0px,#00ffe6 59px,#01fefe 117px,#6be8ff 160px,#b3d9ff 187px,#fdcaff 213px,#ffc6fb 215px,#ffaadf 226px,#ff8fc5 239px,#ff78ae 253px,#ff6398 269px,#ff5186 286px,#ff4075 306px,#ff2358 353px,#ff1046 399px,#ff0036 454px,#ff0027 528px,#ff001b 619px)"></i><i style="left:14px;top:122px;width:617px;height:2px;background:linear-gradient(90deg,#00ffd9 0px,#00ffea 52px,#00fffd 99px,#00f8ff 116px,#6de1ff 161px,#b4d2ff 188px,#fcc2ff 214px,#ffbffc 216px,#ffa4e1 227px,#ff8ac6 240px,#ff73ae 255px,#ff5e99 271px,#ff4c86 289px,#ff3c76 308px,#ff2159 355px,#ff0f47 399px,#ff0038 451px,#ff0029 525px,#ff001c 616px)"></i><i style="left:15px;top:124px;width:614px;height:2px;background:linear-gradient(90deg,#00ffde 0px,#00ffed 44px,#00fffd 84px,#01f1ff 116px,#76d8ff 165px,#ffb9fd 217px,#ff9de0 229px,#ff84c6 242px,#ff6faf 256px,#ff5b9b 272px,#ff4988 290px,#ff3977 310px,#ff1f5b 356px,#ff0e49 398px,#ff003a 448px,#ff002b 522px,#ff001e 613px)"></i><i style="left:15px;top:126px;width:612px;height:2px;background:linear-gradient(90deg,#00ffe3 0px,#00fffe 71px,#00ebff 116px,#6cd4ff 162px,#b2c4ff 190px,#fdb4ff 218px,#ffb0fc 220px,#ff96df 232px,#ff7ec6 245px,#ff6aaf 259px,#ff579b 275px,#ff4688 293px,#ff3778 313px,#ff1c5b 360px,#ff0d4b 399px,#ff003d 445px,#ff002c 520px,#ff001f 611px)"></i><i style="left:16px;top:128px;width:609px;height:2px;background:linear-gradient(90deg,#00ffe8 0px,#00feff 62px,#01e5ff 116px,#72ccff 165px,#b5bdff 192px,#fcadff 219px,#ffaafd 221px,#ff91e0 233px,#ff7ac7 246px,#ff66b1 260px,#ff549d 276px,#ff438a 294px,#ff3479 314px,#ff1b5d 361px,#ff0c4d 399px,#ff003f 442px,#ff002e 516px,#ff0020 608px)"></i><i style="left:17px;top:130px;width:607px;height:2px;background:linear-gradient(90deg,#00ffee 0px,#00feff 48px,#00dfff 115px,#74c5ff 166px,#ffa5fe 222px,#ff8ee3 233px,#ff79cc 245px,#ff67b7 258px,#ff56a4 272px,#ff3983 305px,#ff2268 344px,#ff0f53 387px,#ff0041 439px,#ff0030 514px,#ff0022 606px)"></i><i style="left:18px;top:132px;width:604px;height:2px;background:linear-gradient(90deg,#00fff3 0px,#00feff 34px,#01d9ff 115px,#70c0ff 165px,#b6b0ff 194px,#fda0ff 222px,#ff9dfc 224px,#ff87e3 235px,#ff74cc 247px,#ff62b7 260px,#ff52a4 274px,#ff3684 307px,#ff1f69 346px,#ff0e55 387px,#ff0044 435px,#ff0032 510px,#ff0023 603px)"></i><i style="left:18px;top:134px;width:602px;height:2px;background:linear-gradient(90deg,#00fff8 0px,#00fdff 21px,#00d4ff 115px,#72baff 167px,#b6aaff 196px,#fc9aff 224px,#ff98fd 226px,#ff83e4 237px,#ff71cf 248px,#ff60ba 261px,#ff50a7 275px,#ff3586 308px,#ff1e6b 347px,#ff0e57 387px,#ff0046 433px,#ff0034 508px,#ff0025 601px)"></i><i style="left:19px;top:136px;width:599px;height:2px;background:linear-gradient(90deg,#00fffe 0px,#00eeff 45px,#01ceff 115px,#78b3ff 170px,#ff92fe 227px,#ff7ee5 238px,#ff6cce 250px,#ff5bba 263px,#ff4ca7 277px,#ff3287 309px,#ff1c6c 348px,#ff0d59 386px,#ff0049 430px,#ff0036 505px,#ff0026 598px)"></i><i style="left:20px;top:138px;width:596px;height:2px;background:linear-gradient(90deg,#00faff 0px,#00c9ff 114px,#70afff 167px,#b49fff 197px,#fd8eff 227px,#ff8cfc 229px,#ff78e4 240px,#ff68cf 251px,#ff58bb 264px,#ff4aa9 278px,#ff3089 310px,#ff1b6d 349px,#ff0c5b 385px,#ff004b 427px,#ff0037 502px,#ff0027 595px)"></i><i style="left:21px;top:140px;width:593px;height:2px;background:linear-gradient(90deg,#00f5ff 0px,#01c4ff 114px,#76a8ff 170px,#b799ff 199px,#fc89ff 228px,#ff87fd 230px,#ff74e5 241px,#ff64d1 252px,#ff55bc 265px,#ff47aa 279px,#ff2e8a 311px,#ff196f 350px,#ff0c5d 384px,#ff004e 424px,#ff0039 499px,#ff0029 592px)"></i><i style="left:21px;top:142px;width:591px;height:2px;background:linear-gradient(90deg,#00f0ff 0px,#00bfff 114px,#77a3ff 172px,#ff82fe 232px,#ff70e6 243px,#ff60d0 255px,#ff44ac 281px,#ff2c8c 313px,#ff1871 351px,#ff0b60 384px,#ff0051 421px,#ff003c 496px,#ff002a 590px)"></i><i style="left:22px;top:144px;width:588px;height:2px;background:linear-gradient(90deg,#00ebff 0px,#00bbff 113px,#2cb0ff 136px,#6ea0ff 168px,#b390ff 200px,#fd7eff 232px,#ff7cfd 234px,#ff6be5 245px,#ff5cd1 256px,#ff4ebe 269px,#ff41ac 283px,#ff298c 315px,#ff1672 352px,#ff0a62 383px,#ff0053 418px,#ff003e 493px,#ff002c 587px)"></i><i style="left:23px;top:146px;width:585px;height:2px;background:linear-gradient(90deg,#00e6ff 0px,#00b6ff 113px,#769aff 172px,#ff77fe 235px,#ff67e6 246px,#ff59d3 257px,#ff4bbf 270px,#ff3ead 284px,#ff278d 316px,#ff1573 353px,#ff0a64 382px,#ff0056 415px,#ff0040 490px,#ff002d 584px)"></i><i style="left:24px;top:148px;width:582px;height:2px;background:linear-gradient(90deg,#00e1ff 0px,#00b2ff 112px,#33a5ff 139px,#7595ff 172px,#ff73fe 236px,#ff62e5 248px,#ff54d2 259px,#ff3bae 285px,#ff2690 316px,#ff1475 353px,#ff0059 412px,#ff0042 487px,#ff002f 581px)"></i><i style="left:24px;top:150px;width:580px;height:2px;background:linear-gradient(90deg,#00dcff 0px,#00adff 113px,#7491ff 173px,#b681ff 205px,#fd6fff 237px,#ff6dfd 239px,#ff5ee6 250px,#ff51d3 261px,#ff38af 288px,#ff2390 319px,#ff1277 355px,#ff005c 409px,#ff0044 484px,#ff0030 579px)"></i><i style="left:25px;top:152px;width:577px;height:2px;background:linear-gradient(90deg,#00d8ff 0px,#00a9ff 112px,#339dff 140px,#738dff 173px,#ff69fe 240px,#ff5be7 251px,#ff4dd3 263px,#ff36b0 289px,#ff2291 320px,#ff1178 356px,#ff005f 406px,#ff0046 481px,#ff0032 576px)"></i><i style="left:26px;top:154px;width:574px;height:2px;background:linear-gradient(90deg,#00d3ff 0px,#00a5ff 112px,#7887ff 176px,#ff65fe 241px,#ff4ad4 264px,#ff33b1 290px,#ff2094 320px,#ff0f7a 356px,#ff0062 403px,#ff0048 478px,#ff0034 573px)"></i><i style="left:27px;top:156px;width:571px;height:2px;background:linear-gradient(90deg,#00cfff 0px,#00a1ff 111px,#7285ff 173px,#b574ff 207px,#fc62ff 241px,#ff60fd 243px,#ff47d5 265px,#ff31b2 291px,#ff1e95 321px,#ff0e7b 357px,#ff0065 400px,#ff004a 475px,#ff0035 570px)"></i><i style="left:28px;top:158px;width:568px;height:2px;background:linear-gradient(90deg,#00caff 0px,#009dff 111px,#7780ff 176px,#ff5dfe 244px,#ff44d6 266px,#ff2fb3 292px,#ff1c96 322px,#ff0d7d 357px,#ff0068 396px,#ff0054 446px,#ff0044 502px,#ff0037 567px)"></i><i style="left:28px;top:160px;width:566px;height:2px;background:linear-gradient(90deg,#00c6ff 0px,#009aff 111px,#707dff 174px,#b66cff 210px,#fd5aff 245px,#ff58fd 247px,#ff40d6 269px,#ff2cb4 295px,#ff1a96 325px,#ff0b7e 359px,#ff006b 394px,#ff0056 447px,#ff0046 502px,#ff0038 565px)"></i><i style="left:29px;top:162px;width:563px;height:2px;background:linear-gradient(90deg,#00c2ff 0px,#0196ff 111px,#7578ff 177px,#ff54fd 248px,#ff3dd7 270px,#ff29b5 296px,#ff1898 326px,#ff0a7f 360px,#ff006e 391px,#ff0058 446px,#ff0048 500px,#ff003a 562px)"></i><i style="left:30px;top:164px;width:560px;height:2px;background:linear-gradient(90deg,#00beff 0px,#0093ff 110px,#7674ff 178px,#ff51fe 249px,#ff3bd8 271px,#ff27b6 297px,#ff179a 326px,#ff0981 360px,#ff0072 387px,#ff0059 445px,#ff0049 498px,#ff003c 559px)"></i><i style="left:31px;top:166px;width:558px;height:2px;background:linear-gradient(90deg,#00baff 0px,#018fff 110px,#7471ff 177px,#b760ff 213px,#fd4eff 249px,#ff4cfd 251px,#ff37d7 273px,#ff25b7 298px,#ff159b 327px,#ff0782 361px,#ff0075 384px,#ff005b 445px,#ff004b 497px,#ff003d 557px)"></i><i style="left:32px;top:168px;width:555px;height:2px;background:linear-gradient(90deg,#00b7ff 0px,#008cff 109px,#756eff 178px,#ff49fe 252px,#ff35d8 274px,#ff23b8 299px,#ff149c 328px,#ff0684 361px,#ff0078 381px,#ff005c 444px,#ff004d 495px,#ff003f 554px)"></i><i style="left:33px;top:170px;width:552px;height:2px;background:linear-gradient(90deg,#00b3ff 0px,#0189ff 109px,#786aff 180px,#ff46fe 253px,#ff32d9 275px,#ff21b9 300px,#ff129d 329px,#ff0585 362px,#ff007c 378px,#ff005e 443px,#ff004e 493px,#ff0041 551px)"></i><i style="left:34px;top:172px;width:549px;height:2px;background:linear-gradient(90deg,#00afff 0px,#0086ff 108px,#7467ff 178px,#b756ff 216px,#fd43ff 253px,#ff42fd 255px,#ff2fda 276px,#ff1fba 301px,#ff119f 329px,#ff0487 362px,#ff007f 375px,#ff006e 407px,#ff0060 442px,#ff0050 491px,#ff0042 548px)"></i><i style="left:34px;top:174px;width:547px;height:2px;background:linear-gradient(90deg,#00acff 0px,#0182ff 109px,#7863ff 182px,#ff3ffe 257px,#ff2ddb 278px,#ff1dbb 303px,#ff0fa0 331px,#ff0389 363px,#ff0083 372px,#ff0074 400px,#ff0062 442px,#ff0052 490px,#ff0044 546px)"></i><i style="left:35px;top:176px;width:544px;height:2px;background:linear-gradient(90deg,#00a9ff 0px,#0080ff 108px,#7760ff 182px,#ff3cfe 258px,#ff2ada 280px,#ff1bbc 304px,#ff0da1 332px,#ff018a 364px,#ff0075 400px,#ff0063 442px,#ff0054 489px,#ff0046 543px)"></i><i style="left:36px;top:178px;width:541px;height:2px;background:linear-gradient(90deg,#00a5ff 0px,#017cff 108px,#755eff 181px,#b84cff 220px,#fd39ff 258px,#ff38fd 260px,#ff27db 281px,#ff19bd 305px,#ff0ca2 333px,#ff008b 364px,#ff0077 400px,#ff0065 441px,#ff0055 487px,#ff0048 540px)"></i><i style="left:37px;top:180px;width:538px;height:2px;background:linear-gradient(90deg,#00a2ff 0px,#007aff 107px,#785aff 183px,#ff35fe 261px,#ff25dc 282px,#ff17be 306px,#ff0aa4 333px,#ff008d 364px,#ff0079 399px,#ff0067 439px,#ff0057 485px,#ff0049 537px)"></i><i style="left:38px;top:182px;width:535px;height:2px;background:linear-gradient(90deg,#009fff 0px,#0177ff 107px,#7957ff 184px,#ff32fe 262px,#ff22dc 284px,#ff15bf 307px,#ff09a5 334px,#ff0093 358px,#ff008e 365px,#ff007a 400px,#ff0069 439px,#ff0059 484px,#ff004b 534px)"></i><i style="left:39px;top:184px;width:532px;height:2px;background:linear-gradient(90deg,#009cff 0px,#0074ff 106px,#7654ff 183px,#ff2ffe 264px,#ff20dd 285px,#ff13c0 308px,#ff0aac 329px,#ff0199 352px,#ff0090 365px,#ff007c 399px,#ff006a 438px,#ff005b 482px,#ff004d 531px)"></i><i style="left:40px;top:186px;width:529px;height:2px;background:linear-gradient(90deg,#0098ff 0px,#0171ff 106px,#7951ff 185px,#ff2cfe 265px,#ff1edd 286px,#ff11c1 309px,#ff08ae 329px,#ff009c 351px,#ff0092 365px,#ff007e 399px,#ff006c 437px,#ff005d 480px,#ff004f 528px)"></i><i style="left:41px;top:188px;width:526px;height:2px;background:linear-gradient(90deg,#0095ff 0px,#006fff 105px,#7a4eff 186px,#ff2afe 266px,#ff1cde 287px,#ff0fc2 310px,#ff00a0 348px,#ff0093 365px,#ff0080 398px,#ff006e 435px,#ff005f 477px,#ff0051 525px)"></i><i style="left:42px;top:190px;width:523px;height:2px;background:linear-gradient(90deg,#0092ff 0px,#016cff 105px,#784cff 185px,#ff27fe 268px,#ff19df 288px,#ff0ec3 311px,#ff00a4 345px,#ff0094 366px,#ff0081 398px,#ff0070 435px,#ff0060 476px,#ff0053 522px)"></i><i style="left:42px;top:192px;width:521px;height:2px;background:linear-gradient(90deg,#0090ff 0px,#006aff 105px,#7949ff 187px,#ff24fe 270px,#ff17df 291px,#ff0cc4 313px,#ff00a8 343px,#ff0096 367px,#ff0083 399px,#ff0072 435px,#ff0062 475px,#ff0055 520px)"></i><i style="left:43px;top:194px;width:518px;height:2px;background:linear-gradient(90deg,#008dff 0px,#0068ff 104px,#3759ff 143px,#7847ff 187px,#ff22fe 271px,#ff15df 292px,#ff0ac5 314px,#ff00ac 340px,#ff0098 367px,#ff0084 399px,#ff0073 434px,#ff0064 473px,#ff0057 517px)"></i><i style="left:44px;top:196px;width:515px;height:2px;background:linear-gradient(90deg,#008aff 0px,#0065ff 104px,#7744ff 187px,#ff1ffe 273px,#ff13e0 293px,#ff08c6 315px,#ff00b1 337px,#ff0099 367px,#ff0086 398px,#ff0076 432px,#ff0066 471px,#ff0059 514px)"></i><i style="left:45px;top:198px;width:512px;height:2px;background:linear-gradient(90deg,#0088ff 0px,#0063ff 103px,#3754ff 143px,#7742ff 187px,#ff1cfe 274px,#ff11e1 294px,#ff07c7 316px,#ff00b5 334px,#ff009b 367px,#ff0088 397px,#ff0077 431px,#ff005b 511px)"></i><i style="left:46px;top:200px;width:509px;height:2px;background:linear-gradient(90deg,#0085ff 0px,#0061ff 103px,#7640ff 187px,#ff19fd 276px,#ff0cda 301px,#ff00bb 330px,#ff009c 368px,#ff0089 398px,#ff0079 431px,#ff005d 508px)"></i><i style="left:47px;top:202px;width:507px;height:2px;background:linear-gradient(90deg,#0082ff 0px,#005fff 102px,#374fff 143px,#773dff 188px,#ff17fe 277px,#ff0bdd 300px,#ff00bf 327px,#ff009e 368px,#ff008b 397px,#ff007b 430px,#ff005e 506px)"></i><i style="left:48px;top:204px;width:504px;height:2px;background:linear-gradient(90deg,#0080ff 0px,#005cff 102px,#793bff 190px,#ff15fe 278px,#ff0adf 300px,#ff00c5 323px,#ff00b2 344px,#ff009f 368px,#ff008d 397px,#ff007c 429px,#ff0060 503px)"></i><i style="left:49px;top:206px;width:501px;height:2px;background:linear-gradient(90deg,#007dff 0px,#005aff 101px,#743aff 187px,#ff12fe 280px,#ff09e3 299px,#ff00ca 320px,#ff00b4 343px,#ff00a1 368px,#ff008f 396px,#ff007f 427px,#ff0063 500px)"></i><i style="left:50px;top:208px;width:498px;height:2px;background:linear-gradient(90deg,#007bff 0px,#0058ff 101px,#7837ff 190px,#ff10fe 281px,#ff08e6 298px,#ff00cf 317px,#ff00b8 341px,#ff00a3 368px,#ff0091 396px,#ff0081 426px,#ff0065 497px)"></i><i style="left:51px;top:210px;width:495px;height:2px;background:linear-gradient(90deg,#0078ff 0px,#0056ff 100px,#7934ff 191px,#ff0efe 282px,#ff00d5 314px,#ff00bb 339px,#ff00a4 368px,#ff0093 395px,#ff0083 425px,#ff0067 494px)"></i><i style="left:52px;top:212px;width:492px;height:2px;background:linear-gradient(90deg,#0076ff 0px,#0154ff 100px,#7733ff 190px,#ff0cfe 284px,#ff00db 310px,#ff00ce 322px,#ff00b9 344px,#ff00a6 368px,#ff0084 424px,#ff0069 491px)"></i><i style="left:53px;top:214px;width:489px;height:2px;background:linear-gradient(90deg,#0074ff 0px,#0052ff 99px,#7830ff 191px,#ff0afe 285px,#ff00e1 307px,#ff00cf 323px,#ff00ba 344px,#ff00a7 368px,#ff0087 422px,#ff006b 488px)"></i><i style="left:54px;top:216px;width:486px;height:2px;background:linear-gradient(90deg,#0071ff 0px,#0150ff 99px,#7a2eff 193px,#ff08fe 286px,#ff00e6 304px,#ff00cf 324px,#ff00bb 345px,#ff00a9 368px,#ff0089 421px,#ff006d 485px)"></i><i style="left:55px;top:218px;width:483px;height:2px;background:linear-gradient(90deg,#006fff 0px,#004fff 98px,#772dff 191px,#ff05fe 288px,#ff00ec 301px,#ff00d1 324px,#ff00bd 345px,#ff00ab 368px,#ff008b 420px,#ff0070 482px)"></i><i style="left:56px;top:220px;width:480px;height:2px;background:linear-gradient(90deg,#006dff 0px,#014dff 98px,#792aff 193px,#ff04fe 289px,#ff00f2 298px,#ff00d2 325px,#ff00be 346px,#ff00ac 368px,#ff008c 419px,#ff0072 479px)"></i><i style="left:57px;top:222px;width:477px;height:2px;background:linear-gradient(90deg,#006bff 0px,#004bff 97px,#7a28ff 194px,#ff02ff 290px,#ff00e7 308px,#ff00d3 326px,#ff00ae 368px,#ff008f 417px,#ff0074 476px)"></i><i style="left:58px;top:224px;width:474px;height:2px;background:linear-gradient(90deg,#0068ff 0px,#0149ff 97px,#7827ff 193px,#ff00fe 292px,#ff00e8 309px,#ff00d3 327px,#ff00af 368px,#ff0091 416px,#ff0077 473px)"></i><i style="left:59px;top:226px;width:471px;height:2px;background:linear-gradient(90deg,#0066ff 0px,#0047ff 96px,#7a24ff 195px,#f700ff 287px,#ff00fe 293px,#ff00e8 310px,#ff00d4 328px,#ff00b1 368px,#ff0093 415px,#ff0079 470px)"></i><i style="left:60px;top:228px;width:468px;height:2px;background:linear-gradient(90deg,#0064ff 0px,#0146ff 96px,#7b22ff 196px,#f100ff 284px,#ff00ff 294px,#ff00d5 329px,#ff00b2 368px,#ff0095 414px,#ff007c 467px)"></i><i style="left:62px;top:230px;width:464px;height:2px;background:linear-gradient(90deg,#0062ff 0px,#0044ff 94px,#7921ff 194px,#eb00ff 280px,#ff00fe 295px,#ff00d6 328px,#ff00b5 366px,#ff0097 411px,#ff007e 463px)"></i><i style="left:63px;top:232px;width:461px;height:2px;background:linear-gradient(90deg,#0060ff 0px,#0142ff 94px,#7a1fff 195px,#e400ff 276px,#ff00fe 296px,#ff00d7 329px,#ff00b6 366px,#ff0099 410px,#ff0080 460px)"></i><i style="left:64px;top:234px;width:458px;height:2px;background:linear-gradient(90deg,#005eff 0px,#0041ff 93px,#6d21ff 185px,#de00ff 273px,#fe00ff 297px,#ff00d8 330px,#ff00b8 366px,#ff009c 408px,#ff0083 457px)"></i><i style="left:65px;top:236px;width:455px;height:2px;background:linear-gradient(90deg,#005cff 0px,#013fff 93px,#6a20ff 183px,#d900ff 270px,#ff00fe 299px,#ff00da 330px,#ff00b9 366px,#ff009e 407px,#ff0086 454px)"></i><i style="left:66px;top:238px;width:453px;height:2px;background:linear-gradient(90deg,#005aff 0px,#003eff 92px,#6720ff 181px,#d300ff 267px,#ff00ff 300px,#ff00da 331px,#ff00bb 366px,#ff00a0 406px,#ff0088 452px)"></i><i style="left:67px;top:240px;width:450px;height:2px;background:linear-gradient(90deg,#0058ff 0px,#013cff 92px,#641fff 179px,#cd00ff 263px,#fe00ff 301px,#ff00db 332px,#ff00bc 366px,#ff00a2 405px,#ff008a 449px)"></i><i style="left:68px;top:242px;width:447px;height:2px;background:linear-gradient(90deg,#0057ff 0px,#003bff 91px,#621eff 177px,#c700ff 260px,#ff00fe 303px,#ff00dd 332px,#ff00bf 365px,#ff00a4 403px,#ff008d 446px)"></i><i style="left:69px;top:244px;width:444px;height:2px;background:linear-gradient(90deg,#0055ff 0px,#0039ff 90px,#5e1eff 174px,#c200ff 257px,#ff00ff 304px,#ff00dd 333px,#ff00c0 365px,#ff00a6 402px,#ff0090 443px)"></i><i style="left:70px;top:246px;width:441px;height:2px;background:linear-gradient(90deg,#0053ff 0px,#0038ff 90px,#5e1cff 174px,#bd00ff 254px,#ff00fe 306px,#ff00de 334px,#ff00c2 365px,#ff00a9 400px,#ff0092 440px)"></i><i style="left:71px;top:248px;width:438px;height:2px;background:linear-gradient(90deg,#0051ff 0px,#0037ff 89px,#591cff 170px,#b700ff 250px,#ff00fe 307px,#ff00de 335px,#ff00c3 365px,#ff00ab 399px,#ff0095 437px)"></i><i style="left:73px;top:250px;width:434px;height:2px;background:linear-gradient(90deg,#004fff 0px,#0035ff 88px,#571bff 168px,#b300ff 246px,#ff00ff 307px,#ff00e0 334px,#ff00c6 363px,#ff00ad 396px,#ff0098 433px)"></i><i style="left:74px;top:252px;width:431px;height:2px;background:linear-gradient(90deg,#004eff 0px,#0034ff 87px,#551bff 166px,#ae00ff 243px,#ff00fe 309px,#ff00e1 335px,#ff00c7 363px,#ff00b0 395px,#ff009b 430px)"></i><i style="left:75px;top:254px;width:428px;height:2px;background:linear-gradient(90deg,#004cff 0px,#0032ff 87px,#541aff 165px,#aa00ff 240px,#fe00ff 309px,#ff00e0 337px,#ff00c9 363px,#ff00b2 393px,#ff009e 427px)"></i><i style="left:76px;top:256px;width:425px;height:2px;background:linear-gradient(90deg,#004aff 0px,#0031ff 86px,#5019ff 162px,#a400ff 236px,#fe00ff 310px,#ff00e1 338px,#ff00ca 363px,#ff00b4 392px,#ff00a1 424px)"></i><i style="left:77px;top:258px;width:422px;height:2px;background:linear-gradient(90deg,#0049ff 0px,#0030ff 86px,#4f18ff 161px,#a000ff 233px,#fe00ff 312px,#ff00e3 337px,#ff00cc 362px,#ff00b7 390px,#ff00a4 421px)"></i><i style="left:78px;top:260px;width:419px;height:2px;background:linear-gradient(90deg,#0047ff 0px,#002fff 85px,#4c18ff 158px,#9b00ff 230px,#fe00ff 313px,#ff00e3 339px,#ff00ce 362px,#ff00b9 389px,#ff00a7 418px)"></i><i style="left:80px;top:262px;width:415px;height:2px;background:linear-gradient(90deg,#0045ff 0px,#012dff 84px,#4b17ff 156px,#9700ff 226px,#fe00ff 313px,#ff00e3 340px,#ff00cf 361px,#ff00bc 386px,#ff00aa 414px)"></i><i style="left:81px;top:264px;width:412px;height:2px;background:linear-gradient(90deg,#0044ff 0px,#002cff 83px,#4717ff 153px,#9200ff 222px,#fe00ff 315px,#ff00e6 338px,#ff00d2 360px,#ff00ad 411px)"></i><i style="left:82px;top:266px;width:409px;height:2px;background:linear-gradient(90deg,#0042ff 0px,#012bff 83px,#4616ff 152px,#8e00ff 219px,#fe00ff 316px,#ff00d3 360px,#ff00b0 408px)"></i><i style="left:83px;top:268px;width:406px;height:2px;background:linear-gradient(90deg,#0041ff 0px,#002aff 82px,#4415ff 150px,#8a00ff 216px,#fe00ff 317px,#ff00d5 360px,#ff00b3 405px)"></i><i style="left:84px;top:270px;width:403px;height:2px;background:linear-gradient(90deg,#003fff 0px,#0128ff 82px,#4215ff 148px,#8600ff 213px,#fe00ff 319px,#ff00d7 359px,#ff00b6 402px)"></i><i style="left:85px;top:272px;width:400px;height:2px;background:linear-gradient(90deg,#003eff 0px,#0027ff 81px,#4014ff 146px,#8200ff 209px,#fe00ff 320px,#ff00d8 359px,#ff00ba 399px)"></i><i style="left:87px;top:274px;width:396px;height:2px;background:linear-gradient(90deg,#003cff 0px,#0126ff 80px,#3e13ff 143px,#7e00ff 205px,#fe00ff 321px,#ff00db 357px,#ff00bd 395px)"></i><i style="left:88px;top:276px;width:394px;height:2px;background:linear-gradient(90deg,#003bff 0px,#0025ff 79px,#7a00ff 202px,#bc00ff 263px,#fe00ff 322px,#ff00dc 357px,#ff00c0 393px)"></i><i style="left:89px;top:278px;width:391px;height:2px;background:linear-gradient(90deg,#003aff 0px,#0024ff 78px,#7700ff 199px,#b700ff 260px,#ff00ff 324px,#ff00de 356px,#ff00c3 390px)"></i><i style="left:90px;top:280px;width:388px;height:2px;background:linear-gradient(90deg,#0038ff 0px,#0023ff 78px,#7300ff 196px,#b600ff 260px,#fe00ff 325px,#ff00e0 356px,#ff00c7 387px)"></i><i style="left:91px;top:282px;width:385px;height:2px;background:linear-gradient(90deg,#0037ff 0px,#0022ff 77px,#6f00ff 192px,#b600ff 260px,#fe00ff 326px,#ff00e1 356px,#ff00ca 384px)"></i><i style="left:93px;top:284px;width:381px;height:2px;background:linear-gradient(90deg,#0035ff 0px,#0021ff 76px,#6b00ff 188px,#b100ff 256px,#ff00ff 327px,#ff00e5 353px,#ff00ce 380px)"></i><i style="left:94px;top:286px;width:378px;height:2px;background:linear-gradient(90deg,#0034ff 0px,#0020ff 75px,#6800ff 185px,#b200ff 257px,#fe00ff 328px,#ff00e6 353px,#ff00d2 377px)"></i><i style="left:95px;top:288px;width:375px;height:2px;background:linear-gradient(90deg,#0033ff 0px,#001fff 75px,#6500ff 182px,#b100ff 257px,#fe00ff 329px,#ff00d5 374px)"></i><i style="left:96px;top:290px;width:372px;height:2px;background:linear-gradient(90deg,#0031ff 0px,#001eff 74px,#6100ff 178px,#ad00ff 254px,#ff00ff 331px,#ff00d9 371px)"></i><i style="left:97px;top:292px;width:369px;height:2px;background:linear-gradient(90deg,#0030ff 0px,#001dff 74px,#5e00ff 175px,#ad00ff 255px,#fe00ff 332px,#ff00dd 368px)"></i><i style="left:99px;top:294px;width:365px;height:2px;background:linear-gradient(90deg,#002fff 0px,#001cff 72px,#5b00ff 171px,#ab00ff 253px,#fe00ff 332px,#ff00e1 364px)"></i><i style="left:100px;top:296px;width:362px;height:2px;background:linear-gradient(90deg,#002eff 0px,#001bff 72px,#5800ff 168px,#a900ff 252px,#fe00ff 333px,#ff00e5 361px)"></i><i style="left:101px;top:298px;width:359px;height:2px;background:linear-gradient(90deg,#002cff 0px,#001aff 71px,#5400ff 164px,#a800ff 251px,#fe00ff 335px,#ff00e9 358px)"></i><i style="left:102px;top:300px;width:356px;height:2px;background:linear-gradient(90deg,#002bff 0px,#0019ff 71px,#5100ff 161px,#a600ff 250px,#fe00ff 336px,#ff00ed 355px)"></i><i style="left:104px;top:302px;width:352px;height:2px;background:linear-gradient(90deg,#002aff 0px,#0018ff 69px,#4e00ff 157px,#a400ff 248px,#fe00ff 336px,#ff00f1 351px)"></i><i style="left:105px;top:304px;width:349px;height:2px;background:linear-gradient(90deg,#0029ff 0px,#0017ff 69px,#4b00ff 154px,#a400ff 248px,#fe00ff 338px,#ff00f6 348px)"></i><i style="left:106px;top:306px;width:346px;height:2px;background:linear-gradient(90deg,#0027ff 0px,#0016ff 68px,#4800ff 150px,#a100ff 246px,#fe00ff 339px,#ff00fa 345px)"></i><i style="left:107px;top:308px;width:343px;height:2px;background:linear-gradient(90deg,#0026ff 0px,#0015ff 68px,#4500ff 147px,#9c00ff 242px,#ff00fe 342px)"></i><i style="left:109px;top:310px;width:339px;height:2px;background:linear-gradient(90deg,#0025ff 0px,#0014ff 66px,#4200ff 143px,#9d00ff 242px,#fb00ff 338px)"></i><i style="left:110px;top:312px;width:337px;height:2px;background:linear-gradient(90deg,#0024ff 0px,#0113ff 66px,#4000ff 140px,#9a00ff 240px,#f800ff 336px)"></i><i style="left:111px;top:314px;width:334px;height:2px;background:linear-gradient(90deg,#0023ff 0px,#0013ff 65px,#3c00ff 136px,#9600ff 236px,#f300ff 333px)"></i><i style="left:112px;top:316px;width:331px;height:2px;background:linear-gradient(90deg,#0022ff 0px,#0112ff 65px,#3a00ff 133px,#9200ff 233px,#ef00ff 330px)"></i><i style="left:114px;top:318px;width:327px;height:2px;background:linear-gradient(90deg,#0021ff 0px,#0011ff 63px,#3700ff 129px,#8f00ff 229px,#eb00ff 326px)"></i><i style="left:115px;top:320px;width:324px;height:2px;background:linear-gradient(90deg,#0020ff 0px,#0110ff 63px,#3500ff 126px,#8c00ff 226px,#e700ff 323px)"></i><i style="left:116px;top:322px;width:321px;height:2px;background:linear-gradient(90deg,#001eff 0px,#000fff 62px,#3100ff 122px,#8900ff 223px,#e300ff 320px)"></i><i style="left:118px;top:324px;width:317px;height:2px;background:linear-gradient(90deg,#001dff 0px,#010eff 61px,#2f00ff 118px,#8600ff 219px,#df00ff 316px)"></i><i style="left:119px;top:326px;width:314px;height:2px;background:linear-gradient(90deg,#001cff 0px,#000eff 60px,#2d00ff 115px,#8200ff 216px,#db00ff 313px)"></i><i style="left:120px;top:328px;width:311px;height:2px;background:linear-gradient(90deg,#001bff 0px,#010dff 60px,#2a00ff 112px,#7f00ff 213px,#d700ff 310px)"></i><i style="left:122px;top:330px;width:307px;height:2px;background:linear-gradient(90deg,#001aff 0px,#000cff 58px,#2700ff 107px,#7c00ff 208px,#d300ff 306px)"></i><i style="left:123px;top:332px;width:304px;height:2px;background:linear-gradient(90deg,#0019ff 0px,#010bff 58px,#2500ff 104px,#7900ff 205px,#d000ff 303px)"></i><i style="left:124px;top:334px;width:301px;height:2px;background:linear-gradient(90deg,#0018ff 0px,#000bff 57px,#2300ff 101px,#7600ff 202px,#cc00ff 300px)"></i><i style="left:126px;top:336px;width:297px;height:2px;background:linear-gradient(90deg,#0017ff 0px,#000aff 55px,#2100ff 97px,#7300ff 198px,#c800ff 296px)"></i><i style="left:127px;top:338px;width:294px;height:2px;background:linear-gradient(90deg,#0016ff 0px,#0009ff 55px,#1e00ff 93px,#7000ff 195px,#c500ff 293px)"></i><i style="left:128px;top:340px;width:291px;height:2px;background:linear-gradient(90deg,#0015ff 0px,#0009ff 54px,#1c00ff 90px,#6d00ff 192px,#c100ff 290px)"></i><i style="left:130px;top:342px;width:287px;height:2px;background:linear-gradient(90deg,#0014ff 0px,#0008ff 53px,#1900ff 86px,#6b00ff 188px,#be00ff 286px)"></i><i style="left:131px;top:344px;width:284px;height:2px;background:linear-gradient(90deg,#0013ff 0px,#0007ff 52px,#1700ff 83px,#6800ff 185px,#ba00ff 283px)"></i><i style="left:133px;top:346px;width:280px;height:2px;background:linear-gradient(90deg,#0012ff 0px,#0006ff 51px,#1500ff 78px,#6400ff 180px,#b700ff 279px)"></i><i style="left:134px;top:348px;width:278px;height:2px;background:linear-gradient(90deg,#0011ff 0px,#0006ff 50px,#1300ff 75px,#6300ff 178px,#b500ff 277px)"></i><i style="left:135px;top:350px;width:275px;height:2px;background:linear-gradient(90deg,#0010ff 0px,#0005ff 50px,#1100ff 72px,#6000ff 175px,#b100ff 274px)"></i><i style="left:137px;top:352px;width:271px;height:2px;background:linear-gradient(90deg,#000fff 0px,#0004ff 48px,#0f00ff 68px,#5d00ff 171px,#ae00ff 270px)"></i><i style="left:138px;top:354px;width:268px;height:2px;background:linear-gradient(90deg,#000eff 0px,#0004ff 48px,#0c00ff 64px,#5a00ff 167px,#ab00ff 267px)"></i><i style="left:140px;top:356px;width:264px;height:2px;background:linear-gradient(90deg,#000dff 0px,#0003ff 46px,#0a00ff 60px,#5200ff 156px,#a800ff 263px)"></i><i style="left:141px;top:358px;width:261px;height:2px;background:linear-gradient(90deg,#000dff 0px,#0002ff 46px,#0800ff 57px,#5100ff 155px,#a500ff 260px)"></i><i style="left:143px;top:360px;width:257px;height:2px;background:linear-gradient(90deg,#000cff 0px,#0002ff 44px,#0700ff 53px,#5000ff 152px,#a200ff 256px)"></i><i style="left:144px;top:362px;width:254px;height:2px;background:linear-gradient(90deg,#000bff 0px,#0101ff 44px,#4e00ff 150px,#9f00ff 253px)"></i><i style="left:146px;top:364px;width:250px;height:2px;background:linear-gradient(90deg,#000aff 0px,#0000ff 42px,#4d00ff 147px,#9c00ff 249px)"></i><i style="left:147px;top:366px;width:247px;height:2px;background:linear-gradient(90deg,#0009ff 0px,#0100ff 42px,#4c00ff 146px,#9900ff 246px)"></i><i style="left:149px;top:368px;width:243px;height:2px;background:linear-gradient(90deg,#0008ff 0px,#0000ff 40px,#4a00ff 143px,#9600ff 242px)"></i><i style="left:150px;top:370px;width:240px;height:2px;background:linear-gradient(90deg,#0007ff 0px,#0100ff 40px,#4900ff 141px,#9300ff 239px)"></i><i style="left:152px;top:372px;width:236px;height:2px;background:linear-gradient(90deg,#0006ff 0px,#0000ff 38px,#4700ff 138px,#9000ff 235px)"></i><i style="left:153px;top:374px;width:233px;height:2px;background:linear-gradient(90deg,#0006ff 0px,#0000ff 25px,#0100ff 38px,#4600ff 136px,#8d00ff 232px)"></i><i style="left:155px;top:376px;width:229px;height:2px;background:linear-gradient(90deg,#0005ff 0px,#0000ff 21px,#0000ff 36px,#4400ff 133px,#8b00ff 228px)"></i><i style="left:156px;top:378px;width:226px;height:2px;background:linear-gradient(90deg,#0004ff 0px,#0000ff 18px,#0000ff 35px,#4200ff 130px,#8800ff 225px)"></i><i style="left:158px;top:380px;width:222px;height:2px;background:linear-gradient(90deg,#0003ff 0px,#0000ff 14px,#0000ff 34px,#4200ff 129px,#8500ff 221px)"></i><i style="left:160px;top:382px;width:218px;height:2px;background:linear-gradient(90deg,#0002ff 0px,#0000ff 32px,#4000ff 125px,#8300ff 217px)"></i><i style="left:161px;top:384px;width:216px;height:2px;background:linear-gradient(90deg,#0001ff 0px,#0000ff 32px,#4000ff 125px,#8100ff 215px)"></i><i style="left:163px;top:386px;width:212px;height:2px;background:linear-gradient(90deg,#0000ff 0px,#0000ff 30px,#3e00ff 121px,#7e00ff 211px)"></i><i style="left:165px;top:388px;width:208px;height:2px;background:linear-gradient(90deg,#0000ff 0px,#0000ff 29px,#7c00ff 207px)"></i><i style="left:166px;top:390px;width:205px;height:2px;background:linear-gradient(90deg,#0000ff 0px,#0000ff 28px,#7900ff 204px)"></i><i style="left:168px;top:392px;width:201px;height:2px;background:linear-gradient(90deg,#0000ff 0px,#0000ff 27px,#7700ff 200px)"></i><i style="left:170px;top:394px;width:197px;height:2px;background:linear-gradient(90deg,#0000ff 0px,#0000ff 25px,#7400ff 196px)"></i><i style="left:171px;top:396px;width:194px;height:2px;background:linear-gradient(90deg,#0000ff 0px,#0000ff 25px,#7200ff 193px)"></i><i style="left:173px;top:398px;width:190px;height:2px;background:linear-gradient(90deg,#0000ff 0px,#0000ff 23px,#7000ff 189px)"></i><i style="left:175px;top:400px;width:186px;height:2px;background:linear-gradient(90deg,#0000ff 0px,#0000ff 22px,#6d00ff 185px)"></i><i style="left:176px;top:402px;width:183px;height:2px;background:linear-gradient(90deg,#0000ff 0px,#0000ff 21px,#6b00ff 182px)"></i><i style="left:178px;top:404px;width:179px;height:2px;background:linear-gradient(90deg,#0000ff 0px,#0000ff 20px,#6900ff 178px)"></i><i style="left:180px;top:406px;width:175px;height:2px;background:linear-gradient(90deg,#0000ff 0px,#0000ff 18px,#6600ff 174px)"></i><i style="left:182px;top:408px;width:171px;height:2px;background:linear-gradient(90deg,#0000ff 0px,#0000ff 17px,#6400ff 170px)"></i><i style="left:184px;top:410px;width:167px;height:2px;background:linear-gradient(90deg,#0000ff 0px,#0000ff 15px,#6200ff 166px)"></i><i style="left:186px;top:412px;width:163px;height:2px;background:linear-gradient(90deg,#0000ff 0px,#0100ff 14px,#6000ff 162px)"></i><i style="left:188px;top:414px;width:159px;height:2px;background:linear-gradient(90deg,#0000ff 0px,#0000ff 12px,#5e00ff 158px)"></i><i style="left:190px;top:416px;width:155px;height:2px;background:linear-gradient(90deg,#0000ff 0px,#0100ff 11px,#5c00ff 154px)"></i><i style="left:192px;top:418px;width:151px;height:2px;background:linear-gradient(90deg,#0000ff 0px,#0000ff 9px,#5900ff 150px)"></i><i style="left:194px;top:420px;width:148px;height:2px;background:linear-gradient(90deg,#0000ff 0px,#0100ff 8px,#5800ff 147px)"></i><i style="left:196px;top:422px;width:144px;height:2px;background:linear-gradient(90deg,#0000ff 0px,#0000ff 6px,#5600ff 143px)"></i><i style="left:198px;top:424px;width:140px;height:2px;background:linear-gradient(90deg,#0000ff 0px,#0000ff 4px,#0700ff 15px,#5400ff 139px)"></i><i style="left:200px;top:426px;width:136px;height:2px;background:linear-gradient(90deg,#0000ff 0px,#1200ff 33px,#5200ff 135px)"></i><i style="left:202px;top:428px;width:132px;height:2px;background:linear-gradient(90deg,#0000ff 0px,#5000ff 131px)"></i><i style="left:204px;top:430px;width:128px;height:2px;background:linear-gradient(90deg,#0000ff 0px,#4e00ff 127px)"></i><i style="left:206px;top:432px;width:124px;height:2px;background:linear-gradient(90deg,#0100ff 0px,#4c00ff 123px)"></i><i style="left:209px;top:434px;width:119px;height:2px;background:linear-gradient(90deg,#0300ff 0px,#4a00ff 118px)"></i><i style="left:211px;top:436px;width:115px;height:2px;background:linear-gradient(90deg,#0400ff 0px,#4800ff 114px)"></i><i style="left:213px;top:438px;width:111px;height:2px;background:linear-gradient(90deg,#0400ff 0px,#4600ff 110px)"></i><i style="left:215px;top:440px;width:107px;height:2px;background:linear-gradient(90deg,#0500ff 0px,#4500ff 106px)"></i><i style="left:218px;top:442px;width:102px;height:2px;background:linear-gradient(90deg,#0700ff 0px,#4300ff 101px)"></i><i style="left:220px;top:444px;width:98px;height:2px;background:linear-gradient(90deg,#0800ff 0px,#4100ff 97px)"></i><i style="left:222px;top:446px;width:94px;height:2px;background:linear-gradient(90deg,#0800ff 0px,#3f00ff 93px)"></i><i style="left:225px;top:448px;width:89px;height:2px;background:linear-gradient(90deg,#0a00ff 0px,#3d00ff 88px)"></i><i style="left:227px;top:450px;width:85px;height:2px;background:linear-gradient(90deg,#0b00ff 0px,#3c00ff 84px)"></i><i style="left:230px;top:452px;width:80px;height:2px;background:linear-gradient(90deg,#0c00ff 0px,#3a00ff 79px)"></i><i style="left:232px;top:454px;width:76px;height:2px;background:linear-gradient(90deg,#0d00ff 0px,#3800ff 75px)"></i><i style="left:235px;top:456px;width:71px;height:2px;background:linear-gradient(90deg,#0e00ff 0px,#3600ff 70px)"></i><i style="left:237px;top:458px;width:68px;height:2px;background:linear-gradient(90deg,#0f00ff 0px,#3500ff 67px)"></i><i style="left:239px;top:460px;width:64px;height:2px;background:linear-gradient(90deg,#1000ff 0px,#3400ff 63px)"></i><i style="left:242px;top:462px;width:59px;height:2px;background:linear-gradient(90deg,#1100ff 0px,#3200ff 58px)"></i><i style="left:244px;top:464px;width:55px;height:2px;background:linear-gradient(90deg,#1200ff 0px,#3000ff 54px)"></i><i style="left:247px;top:466px;width:50px;height:2px;background:linear-gradient(90deg,#1300ff 0px,#2f00ff 49px)"></i><i style="left:249px;top:468px;width:46px;height:2px;background:linear-gradient(90deg,#1400ff 0px,#2d00ff 45px)"></i><i style="left:252px;top:470px;width:41px;height:2px;background:linear-gradient(90deg,#1500ff 0px,#2b00ff 40px)"></i><i style="left:254px;top:472px;width:37px;height:2px;background:linear-gradient(90deg,#1600ff 0px,#2a00ff 36px)"></i><i style="left:256px;top:474px;width:33px;height:2px;background:linear-gradient(90deg,#1700ff 0px,#2800ff 32px)"></i><i style="left:259px;top:476px;width:28px;height:2px;background:linear-gradient(90deg,#1800ff 0px,#2700ff 27px)"></i><i style="left:261px;top:478px;width:24px;height:2px;background:linear-gradient(90deg,#1900ff 0px,#2500ff 23px)"></i><i style="left:264px;top:480px;width:19px;height:2px;background:linear-gradient(90deg,#1a00ff 0px,#2400ff 18px)"></i><i style="left:266px;top:482px;width:15px;height:2px;background:linear-gradient(90deg,#1b00ff 0px,#2200ff 14px)"></i><i style="left:270px;top:484px;width:9px;height:2px;background:linear-gradient(90deg,#1c00ff 0px,#2100ff 8px)"></i></div></div>
<svg class="a" style="left:1260px;top:219px;overflow:hidden" width="648" height="498"><path d="M276.5 484.2 L276.5 484.2 L276.5 484.1 L276.5 484.1 L276.5 484.1 L276.4 484.1 L276.4 484.1 L276.4 484.2 L276.4 484.2 L276.3 484.2 L276.3 484.3 L276.3 484.3 L276.3 484.4 L276.2 484.4 L276.2 484.4 L276.2 484.5 L276.1 484.5 L276.1 484.5 L276.1 484.5 L276.0 484.5 L276.0 484.5 L275.9 484.5 L275.9 484.5 L275.8 484.5 L275.8 484.5 L275.7 484.5 L275.7 484.5 L275.6 484.6 L275.6 484.6 L275.5 484.7 L275.5 484.7 L275.4 484.7 L275.4 484.8 L275.3 484.8 L275.2 484.8 L275.2 484.8 L275.1 484.8 L275.0 484.8 L275.0 484.8 L274.9 484.8 L274.8 484.8 L274.7 484.8 L274.7 484.7 L274.6 484.7 L274.5 484.7 L274.4 484.7 L274.3 484.7 L274.2 484.8 L274.1 484.8 L274.0 484.8 L273.9 484.8 L273.8 484.8 L273.7 484.8 L273.6 484.8 L273.5 484.8 L273.3 484.8 L273.2 484.8 L273.1 484.7 L272.9 484.7 L272.7 484.6 L272.5 484.5 L272.3 484.4 L272.1 484.3 L271.8 484.1 L271.6 484.0 L271.3 483.8 L271.0 483.6 L270.7 483.4 L270.3 483.2 L269.9 482.9 L269.6 482.7 L269.2 482.4 L268.8 482.1 L268.4 481.8 L268.0 481.5 L267.5 481.2 L267.1 480.8 L266.6 480.4 L266.1 480.1 L265.6 479.6 L265.0 479.2 L264.4 478.7 L263.8 478.2 L263.2 477.7 L262.5 477.2 L261.8 476.6 L261.1 476.0 L260.3 475.4 L259.5 474.8 L258.8 474.1 L258.0 473.4 L257.1 472.7 L256.3 472.0 L255.4 471.2 L254.5 470.5 L253.6 469.7 L252.7 468.9 L251.7 468.1 L250.7 467.3 L249.7 466.4 L248.6 465.5 L247.5 464.6 L246.4 463.7 L245.2 462.7 L244.0 461.7 L242.7 460.7 L241.4 459.6 L240.0 458.4 L238.6 457.3 L237.1 456.1 L235.6 454.9 L234.1 453.6 L232.5 452.3 L231.0 451.0 L229.4 449.7 L227.7 448.4 L226.0 447.0 L224.3 445.5 L222.5 444.0 L220.7 442.5 L218.8 440.8 L216.9 439.2 L214.9 437.4 L212.8 435.6 L210.7 433.7 L208.6 431.8 L206.4 429.8 L204.2 427.7 L201.9 425.6 L199.6 423.4 L197.3 421.2 L194.9 418.8 L192.5 416.4 L189.9 413.8 L187.3 411.0 L184.5 408.1 L181.7 405.0 L178.7 401.6 L175.6 398.1 L172.4 394.3 L169.0 390.3 L165.6 386.2 L162.1 381.8 L158.5 377.3 L154.8 372.5 L151.1 367.6 L147.2 362.5 L143.3 357.3 L139.4 351.8 L135.4 346.2 L131.3 340.4 L127.2 334.4 L123.1 328.2 L118.9 321.8 L114.6 315.2 L110.3 308.5 L106.0 301.6 L101.7 294.6 L97.3 287.5 L93.0 280.2 L88.6 272.9 L84.3 265.6 L80.0 258.2 L75.7 250.7 L71.5 243.2 L67.3 235.7 L63.3 228.2 L59.3 220.7 L55.5 213.2 L51.8 205.8 L48.2 198.4 L44.8 191.1 L41.5 183.8 L38.3 176.7 L35.3 169.6 L32.4 162.7 L29.6 155.9 L27.0 149.2 L24.4 142.8 L22.0 136.4 L19.8 130.3 L17.6 124.3 L15.6 118.5 L13.8 112.9 L12.0 107.6 L10.5 102.4 L9.0 97.4 L7.7 92.6 L6.5 88.1 L5.5 83.7 L4.5 79.5 L3.7 75.5 L3.0 71.6 L2.3 68.0 L1.8 64.5 L1.4 61.2 L1.1 58.0 L0.9 54.9 L0.7 52.0 L0.7 49.3 L0.8 46.6 L0.9 44.1 L1.1 41.7 L1.4 39.4 L1.8 37.2 L2.3 35.1 L2.9 33.1 L3.5 31.2 L4.2 29.4 L5.0 27.8 L5.9 26.2 L6.8 24.7 L7.8 23.3 L8.9 21.9 L10.0 20.7 L11.2 19.6 L12.5 18.5 L13.8 17.6 L15.1 16.7 L16.5 15.9 L18.0 15.2 L19.5 14.5 L21.0 14.0 L22.6 13.4 L24.2 13.0 L25.8 12.6 L27.5 12.2 L29.2 11.9 L30.9 11.6 L32.7 11.4 L34.4 11.2 L36.3 11.1 L38.1 10.9 L39.9 10.8 L41.8 10.7 L43.7 10.6 L45.6 10.5 L47.5 10.5 L49.4 10.5 L51.3 10.4 L53.3 10.4 L55.2 10.4 L57.1 10.4 L59.0 10.4 L60.9 10.4 L62.9 10.5 L64.8 10.5 L66.7 10.5 L68.7 10.6 L70.6 10.7 L72.6 10.7 L74.6 10.8 L76.6 10.9 L78.6 11.0 L80.6 11.1 L82.7 11.2 L84.8 11.4 L86.9 11.5 L89.0 11.6 L91.1 11.8 L93.3 11.9 L95.4 12.1 L97.6 12.2 L99.8 12.4 L102.1 12.6 L104.4 12.8 L106.6 13.0 L109.0 13.2 L111.3 13.4 L113.7 13.6 L116.1 13.8 L118.5 14.1 L120.9 14.3 L123.4 14.5 L125.9 14.8 L128.4 15.0 L131.0 15.3 L133.6 15.6 L136.2 15.8 L138.9 16.1 L141.6 16.4 L144.3 16.7 L147.1 17.0 L149.9 17.3 L152.8 17.6 L155.7 17.9 L158.6 18.2 L161.6 18.5 L164.5 18.9 L167.6 19.2 L170.7 19.5 L173.8 19.9 L176.9 20.2 L180.1 20.6 L183.3 20.9 L186.6 21.3 L189.9 21.7 L193.3 22.1 L196.7 22.4 L200.1 22.8 L203.6 23.2 L207.1 23.6 L210.7 24.0 L214.3 24.4 L218.0 24.9 L221.7 25.3 L225.5 25.7 L229.2 26.1 L233.1 26.6 L237.0 27.0 L240.9 27.5 L244.9 27.9 L248.9 28.4 L252.9 28.9 L257.0 29.3 L261.2 29.8 L265.3 30.3 L269.6 30.8 L273.9 31.3 L278.2 31.8 L282.5 32.3 L286.9 32.8 L291.4 33.3 L295.9 33.8 L300.4 34.3 L304.9 34.9 L309.5 35.4 L314.2 35.9 L318.8 36.5 L323.5 37.0 L328.3 37.5 L333.0 38.1 L337.8 38.6 L342.6 39.2 L347.5 39.7 L352.4 40.3 L357.2 40.9 L362.2 41.4 L367.1 42.0 L372.1 42.6 L377.0 43.1 L382.0 43.7 L386.9 44.3 L391.8 44.9 L396.7 45.4 L401.6 46.0 L406.4 46.5 L411.2 47.1 L416.0 47.6 L420.7 48.2 L425.5 48.7 L430.2 49.3 L435.0 49.8 L439.7 50.4 L444.4 50.9 L449.1 51.4 L453.8 52.0 L458.5 52.5 L463.1 53.1 L467.7 53.6 L472.2 54.1 L476.6 54.6 L481.0 55.1 L485.3 55.6 L489.5 56.1 L493.7 56.5 L497.8 57.0 L501.9 57.5 L505.9 57.9 L509.8 58.4 L513.7 58.8 L517.6 59.3 L521.3 59.7 L525.0 60.1 L528.7 60.6 L532.2 61.0 L535.7 61.4 L539.1 61.8 L542.5 62.2 L545.7 62.5 L548.9 62.9 L552.1 63.3 L555.1 63.6 L558.1 64.0 L561.1 64.3 L563.9 64.6 L566.7 65.0 L569.5 65.3 L572.2 65.6 L574.8 65.9 L577.4 66.2 L579.9 66.4 L582.3 66.7 L584.7 67.0 L587.1 67.3 L589.4 67.5 L591.6 67.8 L593.8 68.1 L596.0 68.3 L598.1 68.6 L600.2 68.8 L602.3 69.0 L604.3 69.3 L606.3 69.5 L608.3 69.7 L610.2 69.9 L612.1 70.2 L613.9 70.4 L615.8 70.6 L617.5 70.8 L619.3 71.0 L621.0 71.2 L622.6 71.4 L624.2 71.6 L625.8 71.8 L627.4 71.9 L628.9 72.1 L630.3 72.3 L631.8 72.4 L633.2 72.6 L634.5 72.7 L635.8 72.9 L637.1 73.0 L638.3 73.2 L639.5 73.3 L640.6 73.4 L641.8 73.6 L642.8 73.7 L643.9 73.8 L644.9 73.9 L645.9 74.0 L646.8 74.1 L647.7 74.3 L648.6 74.4 L649.5 74.5 L650.3 74.6 L651.1 74.6 L651.9 74.7 L652.7 74.8 L653.4 74.9 L654.2 75.0 L654.8 75.1 L655.5 75.1 L656.2 75.2 L656.8 75.3 L657.4 75.4 L657.9 75.4 L658.5 75.5 L658.9 75.5 L659.4 75.6 L659.9 75.7 L660.3 75.7 L660.7 75.7 L661.0 75.8 L661.4 75.8 L661.7 75.9 L662.1 75.9 L662.4 75.9 L662.8 76.0 L663.1 76.0 L663.4 76.1 L663.8 76.1 L664.1 76.1 L664.4 76.2 L664.7 76.2 L664.9 76.2 L665.2 76.3 L665.4 76.3 L665.7 76.3 L665.9 76.4 L666.2 76.4 L666.4 76.4 L666.7 76.4 L666.9 76.5 L667.2 76.5 L667.4 76.5 L667.7 76.6 L667.9 76.6 L668.2 76.6 L668.4 76.6 L668.7 76.7 L668.9 76.7 L669.2 76.7 L669.4 76.8 L669.6 76.8 L669.8 76.8 L670.0 76.8 L670.2 76.8 L670.4 76.9 L670.6 76.9 L670.8 76.9 L670.9 76.9 L671.1 76.9 L671.2 77.0 L671.4 77.0 L671.5 77.0 L671.6 77.0 L671.7 77.0 L671.8 77.0 L671.9 77.0 L671.9 77.0 L672.0 77.1 L672.1 77.1 L672.1 77.1 L672.2 77.1 L672.2 77.1 L672.3 77.1 L672.3 77.1 L672.3 77.1 L672.4 77.1 L672.4 77.1 L672.4 77.1 L672.5 77.1Z M535.3 61.3 L105.7 18.0 L188.7 366.8Z" fill="#000" fill-opacity=".4" fill-rule="evenodd"/><rect x="173.50" y="73.50" width="13.5" height="13.5" fill="none" stroke="#fff" stroke-width="1.5" stroke-opacity=".92"/><rect x="148.85" y="51.65" width="13.5" height="13.5" fill="none" stroke="#fff" stroke-width="1.5" stroke-opacity=".92"/><rect x="128.25" y="34.75" width="13.5" height="13.5" fill="none" stroke="#fff" stroke-width="1.5" stroke-opacity=".92"/><rect x="112.85" y="22.50" width="13.5" height="13.5" fill="none" stroke="#fff" stroke-width="1.5" stroke-opacity=".92"/><rect x="98.85" y="10.00" width="13.5" height="13.5" fill="none" stroke="#fff" stroke-width="1.5" stroke-opacity=".92"/><rect x="208.00" y="80.35" width="13.5" height="13.5" fill="none" stroke="#fff" stroke-width="1.5" stroke-opacity=".92"/><rect x="209.50" y="63.50" width="13.5" height="13.5" fill="none" stroke="#fff" stroke-width="1.5" stroke-opacity=".92"/><rect x="211.00" y="48.50" width="13.5" height="13.5" fill="none" stroke="#fff" stroke-width="1.5" stroke-opacity=".92"/><rect x="212.35" y="34.35" width="13.5" height="13.5" fill="none" stroke="#fff" stroke-width="1.5" stroke-opacity=".92"/><rect x="213.85" y="20.65" width="13.5" height="13.5" fill="none" stroke="#fff" stroke-width="1.5" stroke-opacity=".92"/><rect x="188.85" y="104.35" width="13.5" height="13.5" fill="none" stroke="#fff" stroke-width="1.5" stroke-opacity=".92"/><rect x="171.00" y="106.85" width="13.5" height="13.5" fill="none" stroke="#fff" stroke-width="1.5" stroke-opacity=".92"/><rect x="155.50" y="108.15" width="13.5" height="13.5" fill="none" stroke="#fff" stroke-width="1.5" stroke-opacity=".92"/><rect x="139.15" y="110.65" width="13.5" height="13.5" fill="none" stroke="#fff" stroke-width="1.5" stroke-opacity=".92"/><rect x="122.65" y="113.75" width="13.5" height="13.5" fill="none" stroke="#fff" stroke-width="1.5" stroke-opacity=".92"/><rect x="263.25" y="92.75" width="13.5" height="13.5" fill="none" stroke="#fff" stroke-width="1.5" stroke-opacity=".92"/><rect x="321.75" y="84.65" width="13.5" height="13.5" fill="none" stroke="#fff" stroke-width="1.5" stroke-opacity=".92"/><rect x="389.25" y="73.65" width="13.5" height="13.5" fill="none" stroke="#fff" stroke-width="1.5" stroke-opacity=".92"/><rect x="451.65" y="65.15" width="13.5" height="13.5" fill="none" stroke="#fff" stroke-width="1.5" stroke-opacity=".92"/><rect x="528.65" y="53.00" width="13.5" height="13.5" fill="none" stroke="#fff" stroke-width="1.5" stroke-opacity=".92"/><rect x="224.85" y="117.75" width="13.5" height="13.5" fill="none" stroke="#fff" stroke-width="1.5" stroke-opacity=".92"/><rect x="248.25" y="137.35" width="13.5" height="13.5" fill="none" stroke="#fff" stroke-width="1.5" stroke-opacity=".92"/><rect x="274.65" y="159.25" width="13.5" height="13.5" fill="none" stroke="#fff" stroke-width="1.5" stroke-opacity=".92"/><rect x="304.85" y="184.25" width="13.5" height="13.5" fill="none" stroke="#fff" stroke-width="1.5" stroke-opacity=".92"/><rect x="343.50" y="217.75" width="13.5" height="13.5" fill="none" stroke="#fff" stroke-width="1.5" stroke-opacity=".92"/><rect x="202.65" y="131.50" width="13.5" height="13.5" fill="none" stroke="#fff" stroke-width="1.5" stroke-opacity=".92"/><rect x="199.85" y="170.25" width="13.5" height="13.5" fill="none" stroke="#fff" stroke-width="1.5" stroke-opacity=".92"/><rect x="195.75" y="215.85" width="13.5" height="13.5" fill="none" stroke="#fff" stroke-width="1.5" stroke-opacity=".92"/><rect x="190.75" y="275.25" width="13.5" height="13.5" fill="none" stroke="#fff" stroke-width="1.5" stroke-opacity=".92"/><rect x="182.00" y="359.50" width="13.5" height="13.5" fill="none" stroke="#fff" stroke-width="1.5" stroke-opacity=".92"/><rect x="206.35" y="102.05" width="11.899999999999999" height="11.899999999999999" fill="none" stroke="#000" stroke-width="2.3" stroke-opacity=".92"/><circle cx="180.25" cy="80.50" r="3.9" fill="#96b98c" stroke="#151515" stroke-width="1.3"/><circle cx="155.60" cy="58.00" r="3.9" fill="#7db46e" stroke="#151515" stroke-width="1.3"/><circle cx="136.00" cy="41.50" r="3.9" fill="#64b964" stroke="#151515" stroke-width="1.3"/><circle cx="121.00" cy="28.40" r="3.9" fill="#55b955" stroke="#151515" stroke-width="1.3"/><circle cx="108.40" cy="16.75" r="3.9" fill="#00c800" stroke="#151515" stroke-width="1.3"/><circle cx="214.75" cy="85.75" r="3.9" fill="#bebc96" stroke="#151515" stroke-width="1.3"/><circle cx="216.25" cy="69.25" r="3.9" fill="#bebc78" stroke="#151515" stroke-width="1.3"/><circle cx="217.75" cy="54.50" r="3.9" fill="#beb95a" stroke="#151515" stroke-width="1.3"/><circle cx="219.40" cy="40.25" r="3.9" fill="#c3be32" stroke="#151515" stroke-width="1.3"/><circle cx="220.60" cy="29.25" r="3.9" fill="#cdc30a" stroke="#151515" stroke-width="1.3"/><circle cx="194.40" cy="110.50" r="3.9" fill="#96afaf" stroke="#151515" stroke-width="1.3"/><circle cx="177.50" cy="112.10" r="3.9" fill="#6eaaaf" stroke="#151515" stroke-width="1.3"/><circle cx="161.00" cy="114.90" r="3.9" fill="#5aafb4" stroke="#151515" stroke-width="1.3"/><circle cx="145.90" cy="117.75" r="3.9" fill="#32aab9" stroke="#151515" stroke-width="1.3"/><circle cx="130.60" cy="120.50" r="3.9" fill="#00b4c8" stroke="#151515" stroke-width="1.3"/><circle cx="269.00" cy="98.60" r="3.9" fill="#be8282" stroke="#151515" stroke-width="1.3"/><circle cx="328.40" cy="88.90" r="3.9" fill="#cd6e6e" stroke="#151515" stroke-width="1.3"/><circle cx="396.00" cy="79.10" r="3.9" fill="#d25050" stroke="#151515" stroke-width="1.3"/><circle cx="459.10" cy="69.50" r="3.9" fill="#d23737" stroke="#151515" stroke-width="1.3"/><circle cx="527.25" cy="59.75" r="3.9" fill="#c80000" stroke="#151515" stroke-width="1.3"/><circle cx="230.00" cy="123.50" r="3.9" fill="#b9a0b9" stroke="#151515" stroke-width="1.3"/><circle cx="252.50" cy="143.10" r="3.9" fill="#be82b4" stroke="#151515" stroke-width="1.3"/><circle cx="278.75" cy="166.00" r="3.9" fill="#c364be" stroke="#151515" stroke-width="1.3"/><circle cx="310.25" cy="193.75" r="3.9" fill="#c846be" stroke="#151515" stroke-width="1.3"/><circle cx="347.50" cy="225.40" r="3.9" fill="#b400b4" stroke="#151515" stroke-width="1.3"/><circle cx="208.10" cy="138.25" r="3.9" fill="#9696c3" stroke="#151515" stroke-width="1.3"/><circle cx="203.75" cy="178.50" r="3.9" fill="#7878c3" stroke="#151515" stroke-width="1.3"/><circle cx="198.40" cy="226.90" r="3.9" fill="#5f5fc8" stroke="#151515" stroke-width="1.3"/><circle cx="193.10" cy="292.25" r="3.9" fill="#5050c8" stroke="#151515" stroke-width="1.3"/><circle cx="184.75" cy="373.25" r="3.9" fill="#0000aa" stroke="#151515" stroke-width="1.3"/><circle cx="213.50" cy="107.00" r="3.6" fill="#fff" stroke="#222" stroke-width="1.3"/><circle cx="203.75" cy="146.90" r="4.7" fill="#000"/></svg>
<svg class="a" style="left:0;top:0" width="1920" height="730"><rect x="1258.65" y="718.5" width="1.3" height="5.2" fill="#c6c6c6"/><rect x="1252.6" y="717.25" width="6" height="1.3" fill="#c6c6c6"/><rect x="1312.65" y="718.5" width="1.3" height="5.2" fill="#c6c6c6"/><rect x="1252.6" y="675.70" width="6" height="1.3" fill="#c6c6c6"/><rect x="1366.65" y="718.5" width="1.3" height="5.2" fill="#c6c6c6"/><rect x="1252.6" y="634.15" width="6" height="1.3" fill="#c6c6c6"/><rect x="1420.65" y="718.5" width="1.3" height="5.2" fill="#c6c6c6"/><rect x="1252.6" y="592.60" width="6" height="1.3" fill="#c6c6c6"/><rect x="1474.65" y="718.5" width="1.3" height="5.2" fill="#c6c6c6"/><rect x="1252.6" y="551.05" width="6" height="1.3" fill="#c6c6c6"/><rect x="1528.65" y="718.5" width="1.3" height="5.2" fill="#c6c6c6"/><rect x="1252.6" y="509.50" width="6" height="1.3" fill="#c6c6c6"/><rect x="1582.65" y="718.5" width="1.3" height="5.2" fill="#c6c6c6"/><rect x="1252.6" y="467.95" width="6" height="1.3" fill="#c6c6c6"/><rect x="1636.65" y="718.5" width="1.3" height="5.2" fill="#c6c6c6"/><rect x="1252.6" y="426.40" width="6" height="1.3" fill="#c6c6c6"/><rect x="1690.65" y="718.5" width="1.3" height="5.2" fill="#c6c6c6"/><rect x="1252.6" y="384.85" width="6" height="1.3" fill="#c6c6c6"/><rect x="1744.65" y="718.5" width="1.3" height="5.2" fill="#c6c6c6"/><rect x="1252.6" y="343.30" width="6" height="1.3" fill="#c6c6c6"/><rect x="1798.65" y="718.5" width="1.3" height="5.2" fill="#c6c6c6"/><rect x="1252.6" y="301.75" width="6" height="1.3" fill="#c6c6c6"/><rect x="1852.65" y="718.5" width="1.3" height="5.2" fill="#c6c6c6"/><rect x="1252.6" y="260.20" width="6" height="1.3" fill="#c6c6c6"/></svg>
<div class="t" style="left:1255.75px;top:727.45px;font-size:14.06px;color:#dcdcdc;transform:scaleX(0.9338);">0</div>
<div class="t" style="left:1245.00px;top:712.35px;font-size:14.06px;color:#dcdcdc;transform:scaleX(0.9338);">0</div>
<div class="t" style="left:1299.15px;top:727.45px;font-size:14.06px;color:#dcdcdc;transform:scaleX(1.0417);">0,05</div>
<div class="t" style="left:1223.80px;top:670.80px;font-size:14.06px;color:#dcdcdc;transform:scaleX(1.0417);">0,05</div>
<div class="t" style="left:1357.15px;top:727.45px;font-size:14.06px;color:#dcdcdc;transform:scaleX(1.0491);">0,1</div>
<div class="t" style="left:1231.80px;top:629.25px;font-size:14.06px;color:#dcdcdc;transform:scaleX(1.0491);">0,1</div>
<div class="t" style="left:1407.15px;top:727.45px;font-size:14.06px;color:#dcdcdc;transform:scaleX(1.0417);">0,15</div>
<div class="t" style="left:1223.80px;top:587.70px;font-size:14.06px;color:#dcdcdc;transform:scaleX(1.0417);">0,15</div>
<div class="t" style="left:1465.15px;top:727.45px;font-size:14.06px;color:#dcdcdc;transform:scaleX(1.0491);">0,2</div>
<div class="t" style="left:1231.80px;top:546.15px;font-size:14.06px;color:#dcdcdc;transform:scaleX(1.0491);">0,2</div>
<div class="t" style="left:1515.15px;top:727.45px;font-size:14.06px;color:#dcdcdc;transform:scaleX(1.0417);">0,25</div>
<div class="t" style="left:1223.80px;top:504.60px;font-size:14.06px;color:#dcdcdc;transform:scaleX(1.0417);">0,25</div>
<div class="t" style="left:1573.15px;top:727.45px;font-size:14.06px;color:#dcdcdc;transform:scaleX(1.0491);">0,3</div>
<div class="t" style="left:1231.80px;top:463.05px;font-size:14.06px;color:#dcdcdc;transform:scaleX(1.0491);">0,3</div>
<div class="t" style="left:1623.15px;top:727.45px;font-size:14.06px;color:#dcdcdc;transform:scaleX(1.0417);">0,35</div>
<div class="t" style="left:1223.80px;top:421.50px;font-size:14.06px;color:#dcdcdc;transform:scaleX(1.0417);">0,35</div>
<div class="t" style="left:1681.15px;top:727.45px;font-size:14.06px;color:#dcdcdc;transform:scaleX(1.0491);">0,4</div>
<div class="t" style="left:1231.80px;top:379.95px;font-size:14.06px;color:#dcdcdc;transform:scaleX(1.0491);">0,4</div>
<div class="t" style="left:1731.15px;top:727.45px;font-size:14.06px;color:#dcdcdc;transform:scaleX(1.0417);">0,45</div>
<div class="t" style="left:1223.80px;top:338.40px;font-size:14.06px;color:#dcdcdc;transform:scaleX(1.0417);">0,45</div>
<div class="t" style="left:1789.15px;top:727.45px;font-size:14.06px;color:#dcdcdc;transform:scaleX(1.0491);">0,5</div>
<div class="t" style="left:1231.80px;top:296.85px;font-size:14.06px;color:#dcdcdc;transform:scaleX(1.0491);">0,5</div>
<div class="t" style="left:1839.15px;top:727.45px;font-size:14.06px;color:#dcdcdc;transform:scaleX(1.0417);">0,55</div>
<div class="t" style="left:1223.80px;top:255.30px;font-size:14.06px;color:#dcdcdc;transform:scaleX(1.0417);">0,55</div>
<div class="a" style="left:1684px;top:560.6px;width:220.7px;height:150.8px;background:#3a3a3a;"></div>
<div class="a" style="left:1686.4px;top:563px;width:216px;height:146px;background:#a0a0a0;"></div>
<div class="a cie" style="left:1688px;top:565px;width:213px;height:143px;overflow:hidden;background:#222"><div class="a" style="left:0;top:0;width:213px;height:143px;clip-path:polygon(-298.8px -265.5px,-294.1px -262.4px,-289.3px -259.4px,-284.6px -256.4px,-279.9px -253.4px,-275.2px -250.3px,-270.5px -247.3px,-265.7px -244.3px,-261.0px -241.2px,-256.3px -238.2px,-251.6px -235.2px,-246.9px -232.1px,-242.1px -229.1px,-237.4px -226.0px,-232.7px -223.0px,-228.0px -219.9px,-223.2px -216.9px,-218.5px -213.8px,-213.8px -210.8px,-209.1px -207.7px,-204.4px -204.7px,-199.7px -201.6px,-194.9px -198.5px,-190.2px -195.5px,-185.5px -192.4px,-180.8px -189.4px,-176.1px -186.3px,-171.4px -183.2px,-166.7px -180.1px,-162.0px -177.1px,-157.3px -174.0px,-152.5px -170.9px,-147.8px -167.8px,-143.1px -164.8px,-138.4px -161.7px,-133.7px -158.6px,-129.0px -155.5px,-124.3px -152.4px,-119.7px -149.4px,-115.0px -146.3px,-110.3px -143.2px,-105.6px -140.1px,-100.9px -137.0px,-96.2px -133.9px,-91.5px -130.8px,-86.8px -127.8px,-82.1px -124.7px,-77.4px -121.6px,-72.7px -118.5px,-68.1px -115.4px,-63.4px -112.3px,-58.7px -109.2px,-54.0px -106.1px,-49.3px -103.0px,-44.6px -99.9px,-39.9px -96.8px,-35.3px -93.7px,-30.6px -90.7px,-25.9px -87.6px,-21.2px -84.5px,-16.5px -81.4px,-11.8px -78.3px,-7.2px -75.2px,-2.5px -72.1px,2.2px -69.0px,6.9px -65.9px,11.6px -62.8px,16.3px -59.7px,20.9px -56.6px,25.6px -53.5px,30.3px -50.5px,35.0px -47.4px,39.6px -44.3px,44.3px -41.2px,49.0px -38.1px,53.7px -35.0px,58.3px -31.9px,63.0px -28.8px,67.7px -25.7px,72.3px -22.7px,77.0px -19.6px,81.7px -16.5px,86.3px -13.4px,91.0px -10.3px,95.6px -7.2px,100.3px -4.2px,104.9px -1.1px,109.6px 2.0px,114.2px 5.1px,118.9px 8.2px,123.5px 11.2px,128.1px 14.3px,132.8px 17.4px,137.4px 20.5px,142.0px 23.5px,146.6px 26.6px,151.3px 29.7px,155.9px 32.8px,160.5px 35.8px,165.1px 38.9px,169.7px 42.0px,174.3px 45.0px,178.9px 48.1px,183.5px 51.2px,188.1px 54.2px,192.7px 57.3px,197.2px 60.3px,201.8px 63.4px,206.4px 66.4px,211.0px 69.5px,215.5px 72.5px,220.1px 75.6px,224.7px 78.6px,229.2px 81.7px,233.8px 84.7px,238.3px 87.8px,242.9px 90.8px,247.4px 93.8px,252.0px 96.9px,256.5px 99.9px,261.0px 102.9px,265.6px 106.0px,270.1px 109.0px,274.6px 112.0px,279.1px 115.0px,283.6px 118.0px,288.1px 121.1px,292.6px 124.1px,297.1px 127.1px,301.6px 130.1px,306.1px 133.1px,310.6px 136.1px,315.1px 139.1px,319.6px 142.1px,324.0px 145.1px,328.5px 148.1px,333.0px 151.1px,337.4px 154.0px,341.9px 157.0px,346.3px 160.0px,350.8px 163.0px,355.2px 165.9px,359.7px 168.9px,364.1px 171.9px,368.5px 174.8px,373.0px 177.8px,377.4px 180.8px,381.8px 183.7px,386.2px 186.7px,390.6px 189.6px,395.0px 192.5px,399.4px 195.5px,403.8px 198.4px,408.1px 201.3px,412.5px 204.3px,416.9px 207.2px,421.2px 210.1px,425.6px 213.0px,429.9px 216.0px,434.3px 218.9px,438.6px 221.8px,443.0px 224.7px,447.3px 227.6px,451.6px 230.5px,455.9px 233.3px,460.2px 236.2px,464.5px 239.1px,468.8px 242.0px,473.1px 244.9px,477.4px 247.7px,481.7px 250.6px,485.9px 253.4px,490.2px 256.3px,494.5px 259.1px,498.7px 262.0px,503.0px 264.8px,507.2px 267.7px,511.4px 270.5px,515.6px 273.3px,519.9px 276.1px,524.1px 278.9px,528.3px 281.8px,532.5px 284.6px,536.6px 287.4px,540.8px 290.1px,545.0px 292.9px,549.2px 295.7px,553.3px 298.5px,557.5px 301.2px,561.6px 304.0px,565.7px 306.8px,569.9px 309.5px,574.0px 312.3px,578.1px 315.0px,582.2px 317.7px,586.3px 320.5px,590.4px 323.2px,594.4px 325.9px,598.5px 328.6px,600.0px 1500.0px,-300.0px 1500.0px)"><i style="left:0px;top:0px;width:213px;height:3px;background:linear-gradient(90deg,#c4ff00 0px,#ffff00 167px,#fff000 212px)"></i><i style="left:0px;top:3px;width:213px;height:3px;background:linear-gradient(90deg,#c5ff00 0px,#ffff00 165px,#ffef00 212px)"></i><i style="left:0px;top:6px;width:213px;height:3px;background:linear-gradient(90deg,#c6ff00 0px,#ffff00 162px,#ffee00 212px)"></i><i style="left:0px;top:9px;width:213px;height:3px;background:linear-gradient(90deg,#c6ff00 0px,#ffff00 159px,#ffed00 212px)"></i><i style="left:0px;top:12px;width:213px;height:3px;background:linear-gradient(90deg,#c7ff01 0px,#ffff00 157px,#ffec00 212px)"></i><i style="left:0px;top:15px;width:213px;height:3px;background:linear-gradient(90deg,#c8ff01 0px,#ffff00 154px,#ffeb00 212px)"></i><i style="left:0px;top:18px;width:213px;height:3px;background:linear-gradient(90deg,#c9ff02 0px,#ffff00 151px,#ffea00 212px)"></i><i style="left:0px;top:21px;width:213px;height:3px;background:linear-gradient(90deg,#caff02 0px,#d3ff00 27px,#ffff00 149px,#ffe900 212px)"></i><i style="left:0px;top:24px;width:213px;height:3px;background:linear-gradient(90deg,#caff03 0px,#d5ff00 32px,#ffff00 146px,#ffe800 212px)"></i><i style="left:0px;top:27px;width:213px;height:3px;background:linear-gradient(90deg,#cbff03 0px,#d8ff00 37px,#ffff00 143px,#ffe700 212px)"></i><i style="left:0px;top:30px;width:213px;height:3px;background:linear-gradient(90deg,#ccff04 0px,#dbff00 42px,#ffff00 141px,#ffe600 212px)"></i><i style="left:0px;top:33px;width:213px;height:3px;background:linear-gradient(90deg,#cdff04 0px,#ddff00 47px,#ffff00 138px,#ffe500 212px)"></i><i style="left:0px;top:36px;width:213px;height:3px;background:linear-gradient(90deg,#ceff05 0px,#e0ff00 51px,#ffff00 135px,#ffe400 212px)"></i><i style="left:0px;top:39px;width:213px;height:3px;background:linear-gradient(90deg,#cfff05 0px,#e2ff00 56px,#ffff00 133px,#ffe300 212px)"></i><i style="left:0px;top:42px;width:213px;height:3px;background:linear-gradient(90deg,#cfff05 0px,#e5ff00 61px,#ffff00 130px,#ffe200 212px)"></i><i style="left:0px;top:45px;width:213px;height:3px;background:linear-gradient(90deg,#d0ff06 0px,#e8ff00 66px,#ffff00 127px,#ffe200 212px)"></i><i style="left:0px;top:48px;width:213px;height:3px;background:linear-gradient(90deg,#d1ff06 0px,#eaff00 70px,#ffff00 125px,#ffe100 212px)"></i><i style="left:0px;top:51px;width:213px;height:3px;background:linear-gradient(90deg,#d2ff07 0px,#edff00 75px,#ffff00 122px,#ffe000 212px)"></i><i style="left:0px;top:54px;width:213px;height:3px;background:linear-gradient(90deg,#d3ff07 0px,#f0ff00 80px,#ffff00 119px,#ffdf00 212px)"></i><i style="left:0px;top:57px;width:213px;height:3px;background:linear-gradient(90deg,#d4ff08 0px,#f2ff00 84px,#ffff00 117px,#ffde00 212px)"></i><i style="left:0px;top:60px;width:213px;height:3px;background:linear-gradient(90deg,#d5ff08 0px,#f5ff00 89px,#ffff00 114px,#ffdd00 212px)"></i><i style="left:0px;top:63px;width:213px;height:3px;background:linear-gradient(90deg,#d5ff09 0px,#ffff00 111px,#ffdc00 212px)"></i><i style="left:0px;top:66px;width:213px;height:3px;background:linear-gradient(90deg,#d6ff09 0px,#ffff00 109px,#ffdb00 212px)"></i><i style="left:0px;top:69px;width:213px;height:3px;background:linear-gradient(90deg,#d7ff0a 0px,#ffff00 106px,#ffda00 212px)"></i><i style="left:0px;top:72px;width:213px;height:3px;background:linear-gradient(90deg,#d8ff0a 0px,#ffff01 103px,#ffd900 212px)"></i><i style="left:0px;top:75px;width:213px;height:3px;background:linear-gradient(90deg,#d9ff0b 0px,#ffff01 101px,#ffd800 212px)"></i><i style="left:0px;top:78px;width:213px;height:3px;background:linear-gradient(90deg,#daff0b 0px,#ffff02 98px,#fff600 122px,#ffd800 212px)"></i><i style="left:0px;top:81px;width:213px;height:3px;background:linear-gradient(90deg,#dbff0c 0px,#ffff03 95px,#fff300 127px,#ffd700 212px)"></i><i style="left:0px;top:84px;width:213px;height:3px;background:linear-gradient(90deg,#dcff0c 0px,#ffff04 93px,#fff000 132px,#ffd600 212px)"></i><i style="left:0px;top:87px;width:213px;height:3px;background:linear-gradient(90deg,#ddff0d 0px,#ffff04 90px,#ffee00 136px,#ffd500 212px)"></i><i style="left:0px;top:90px;width:213px;height:3px;background:linear-gradient(90deg,#deff0d 0px,#ffff05 87px,#ffeb00 141px,#ffd400 212px)"></i><i style="left:0px;top:93px;width:213px;height:3px;background:linear-gradient(90deg,#dfff0e 0px,#ffff06 85px,#ffe800 146px,#ffd300 212px)"></i><i style="left:0px;top:96px;width:213px;height:3px;background:linear-gradient(90deg,#dfff0e 0px,#ffff07 82px,#ffe600 151px,#ffd200 212px)"></i><i style="left:0px;top:99px;width:213px;height:3px;background:linear-gradient(90deg,#e0ff0f 0px,#ffff08 79px,#ffe300 155px,#ffd100 212px)"></i><i style="left:0px;top:102px;width:213px;height:3px;background:linear-gradient(90deg,#e1ff0f 0px,#ffff08 77px,#ffe100 160px,#ffd000 212px)"></i><i style="left:0px;top:105px;width:213px;height:3px;background:linear-gradient(90deg,#e2ff10 0px,#ffff09 74px,#ffde00 164px,#ffd000 212px)"></i><i style="left:0px;top:108px;width:213px;height:3px;background:linear-gradient(90deg,#e3ff10 0px,#ffff0a 71px,#ffdc00 169px,#ffcf00 212px)"></i><i style="left:0px;top:111px;width:213px;height:3px;background:linear-gradient(90deg,#e4ff11 0px,#ffff0b 69px,#ffd900 174px,#ffce00 212px)"></i><i style="left:0px;top:114px;width:213px;height:3px;background:linear-gradient(90deg,#e5ff11 0px,#ffff0b 66px,#ffd700 179px,#ffcd00 212px)"></i><i style="left:0px;top:117px;width:213px;height:3px;background:linear-gradient(90deg,#e6ff12 0px,#ffff0c 63px,#ffd400 184px,#ffcc00 212px)"></i><i style="left:0px;top:120px;width:213px;height:3px;background:linear-gradient(90deg,#e7ff13 0px,#ffff0d 61px,#ffe405 133px,#ffcb00 212px)"></i><i style="left:0px;top:123px;width:213px;height:3px;background:linear-gradient(90deg,#e8ff13 0px,#ffff0e 58px,#ffe306 132px,#ffca00 212px)"></i><i style="left:0px;top:126px;width:213px;height:3px;background:linear-gradient(90deg,#e9ff14 0px,#ffff0f 55px,#ffe306 131px,#ffc900 212px)"></i><i style="left:0px;top:129px;width:213px;height:3px;background:linear-gradient(90deg,#eaff14 0px,#ffff0f 53px,#ffe207 129px,#ffc900 212px)"></i><i style="left:0px;top:132px;width:213px;height:3px;background:linear-gradient(90deg,#ebff15 0px,#ffff10 50px,#ffe208 127px,#ffc800 212px)"></i><i style="left:0px;top:135px;width:213px;height:3px;background:linear-gradient(90deg,#ecff15 0px,#ffff11 47px,#ffe108 126px,#ffc700 212px)"></i><i style="left:0px;top:138px;width:213px;height:3px;background:linear-gradient(90deg,#edff16 0px,#fffe12 45px,#ffe109 125px,#ffc601 212px)"></i><i style="left:0px;top:141px;width:213px;height:2px;background:linear-gradient(90deg,#eeff16 0px,#ffff13 42px,#ffe109 123px,#ffc501 212px)"></i><svg class="a" style="left:0;top:0" width="213" height="143"><polygon points="-622.6,-365.5 1127.7,681.6 1127.7,-3000 -622.6,-3000" fill="#000" fill-opacity=".4"/></svg></div><svg class="a" style="left:0;top:0" width="213" height="143"><rect x="99.45" y="63.85" width="13.5" height="13.5" fill="none" stroke="#fff" stroke-width="1.5" stroke-opacity=".92"/><circle cx="105.70" cy="74.90" r="3.9" fill="#c8c800" stroke="#151515" stroke-width="1.3"/></svg></div>
<div class="a" style="left:226.5px;top:1075.6px;width:1690.5px;height:70.4px;background:linear-gradient(#4a4a4a,#222);"></div>
<div class="a" style="left:226.5px;top:1075.6px;width:912px;height:70.4px;background:linear-gradient(#3c3c3c,#262626);"></div>
<div class="a" style="left:226px;top:1076.2px;width:51px;height:68.6px;background:linear-gradient(#a6a6a6,#5a5a5a);border-radius:6px;"></div>
<div class="a" style="left:242.9px;top:1078.4px;width:17.2px;height:17.2px;border-radius:50%;background:linear-gradient(#6e6e6e,#9a9a9a);"></div>
<svg class="a" style="left:247px;top:1083.7px" width="9" height="4.6" viewBox="0 0 9 4.6"><path d="M0 4.6H9L4.5 0Z" fill="#262626"/></svg>
<div class="a" style="left:232px;top:1105.3px;width:39px;height:34px;background:#ff0;border-radius:4px;box-shadow:inset 1px 1px 1px #cc0;"></div>
<div class="a" style="left:283.5px;top:1076.2px;width:168.8px;height:68.6px;background:linear-gradient(#a6a6a6,#5a5a5a);border-radius:6px;"></div>
<div class="a" style="left:289px;top:1082px;width:158.2px;height:40px;background:#c0c09a;border-radius:4.5px;border:1.4px solid rgba(0,0,0,.3);box-sizing:border-box;box-shadow:inset 0 1px 1px rgba(0,0,0,.25);"></div>
<div class="t" style="left:356.60px;top:1130.07px;font-size:11.45px;color:#2c2c2c;font-weight:bold;">20%</div>
<div class="a" style="left:454.55px;top:1076.2px;width:168.8px;height:68.6px;background:linear-gradient(#a6a6a6,#5a5a5a);border-radius:6px;"></div>
<div class="a" style="left:460.05px;top:1082px;width:158.2px;height:40px;background:#c0c080;border-radius:4.5px;border:1.4px solid rgba(0,0,0,.3);box-sizing:border-box;box-shadow:inset 0 1px 1px rgba(0,0,0,.25);"></div>
<div class="t" style="left:527.65px;top:1130.07px;font-size:11.45px;color:#2c2c2c;font-weight:bold;">40%</div>
<div class="a" style="left:625.6px;top:1076.2px;width:168.8px;height:68.6px;background:linear-gradient(#a6a6a6,#5a5a5a);border-radius:6px;"></div>
<div class="a" style="left:631.1px;top:1082px;width:158.2px;height:40px;background:#c0bf5a;border-radius:4.5px;border:1.4px solid rgba(0,0,0,.3);box-sizing:border-box;box-shadow:inset 0 1px 1px rgba(0,0,0,.25);"></div>
<div class="t" style="left:698.70px;top:1130.07px;font-size:11.45px;color:#2c2c2c;font-weight:bold;">60%</div>
<div class="a" style="left:796.65px;top:1076.2px;width:168.8px;height:68.6px;background:linear-gradient(#a6a6a6,#5a5a5a);border-radius:6px;"></div>
<div class="a" style="left:802.15px;top:1082px;width:158.2px;height:40px;background:#c4c028;border-radius:4.5px;border:1.4px solid rgba(0,0,0,.3);box-sizing:border-box;box-shadow:inset 0 1px 1px rgba(0,0,0,.25);"></div>
<div class="t" style="left:869.75px;top:1130.07px;font-size:11.45px;color:#2c2c2c;font-weight:bold;">80%</div>
<div class="a" style="left:967.7px;top:1076.2px;width:168.8px;height:68.6px;background:linear-gradient(#1c1c1c,#3e3e3e);border-radius:6px;"></div>
<div class="a" style="left:973.2px;top:1082px;width:158.2px;height:40px;background:#c1c000;border-radius:4.5px;border:1.4px solid rgba(0,0,0,.3);box-sizing:border-box;box-shadow:inset 0 1px 1px rgba(0,0,0,.25);"></div>
<div class="t" style="left:1037.30px;top:1130.07px;font-size:11.45px;color:#fff;font-weight:bold;transform:scaleX(1.0245);">100%</div>
<div class="a" style="left:1556.4px;top:1076px;width:54.2px;height:69px;background:linear-gradient(#a2a2a2,#8c8c8c 30%,#969696 32%,#5c5c5c);border-radius:7px;"></div>
<div class="a" style="left:1556.4px;top:1096.3px;width:54.2px;height:1.4px;background:#5e5e5e;"></div>
<div class="a" style="left:1574.8px;top:1077.6px;width:17.2px;height:17.2px;border-radius:50%;background:linear-gradient(#6e6e6e,#9c9c9c);"></div>
<svg class="a" style="left:1578.9px;top:1083.1px" width="9" height="4.6" viewBox="0 0 9 4.6"><path d="M0 4.6H9L4.5 0Z" fill="#262626"/></svg>
<div class="a" style="left:1566.2px;top:1103.7px;width:34.8px;height:33.8px;border:3px solid #242424;border-radius:6px;box-sizing:border-box;background:linear-gradient(#b4b4b4,#a2a2a2 50%,#8c8c8c 51%,#8a8a8a);"></div>
<div class="a" style="left:1576px;top:1114px;width:15.2px;height:14.8px;background:linear-gradient(#1c1c1c 49%,#000 50%);"></div>
<div class="a" style="left:1612.2px;top:1076px;width:50.85px;height:33.8px;background:linear-gradient(#a8a8a8,#6c6c6c);border-radius:6px 0 0 0;"></div>
<div class="a" style="left:1626.5px;top:1082px;width:22px;height:22px;border-radius:50%;background:linear-gradient(#6a6a6a,#9e9e9e);"></div>
<div class="a" style="left:1663.05px;top:1076px;width:50.85px;height:33.8px;background:linear-gradient(#a8a8a8,#6c6c6c);"></div>
<div class="a" style="left:1662.35px;top:1076px;width:1.4px;height:33.8px;background:#555;"></div>
<div class="a" style="left:1677.35px;top:1082px;width:22px;height:22px;border-radius:50%;background:linear-gradient(#6a6a6a,#9e9e9e);"></div>
<div class="a" style="left:1713.9px;top:1076px;width:50.85px;height:33.8px;background:linear-gradient(#a8a8a8,#6c6c6c);"></div>
<div class="a" style="left:1713.2px;top:1076px;width:1.4px;height:33.8px;background:#555;"></div>
<div class="a" style="left:1728.2px;top:1082px;width:22px;height:22px;border-radius:50%;background:linear-gradient(#6a6a6a,#9e9e9e);"></div>
<div class="a" style="left:1764.75px;top:1076px;width:50.85px;height:33.8px;background:linear-gradient(#a8a8a8,#6c6c6c);"></div>
<div class="a" style="left:1764.05px;top:1076px;width:1.4px;height:33.8px;background:#555;"></div>
<div class="a" style="left:1779.05px;top:1082px;width:22px;height:22px;border-radius:50%;background:linear-gradient(#6a6a6a,#9e9e9e);"></div>
<div class="a" style="left:1815.6px;top:1076px;width:50.85px;height:33.8px;background:linear-gradient(#a8a8a8,#6c6c6c);"></div>
<div class="a" style="left:1814.9px;top:1076px;width:1.4px;height:33.8px;background:#555;"></div>
<div class="a" style="left:1829.9px;top:1082px;width:22px;height:22px;border-radius:50%;background:linear-gradient(#6a6a6a,#9e9e9e);"></div>
<div class="a" style="left:1866.45px;top:1076px;width:50.55px;height:33.8px;background:linear-gradient(#a8a8a8,#6c6c6c);border-radius:0 6px 0 0;"></div>
<div class="a" style="left:1865.75px;top:1076px;width:1.4px;height:33.8px;background:#555;"></div>
<div class="a" style="left:1880.75px;top:1082px;width:22px;height:22px;border-radius:50%;background:linear-gradient(#6a6a6a,#9e9e9e);"></div>
<svg class="a" style="left:0;top:0" width="1920" height="1146"><rect x="1632.9" y="1088.4" width="9.2" height="9.2" fill="#2a2a2a"/><path d="M1684.75 1087.6V1098.6L1693.9499999999998 1093.1Z" fill="#2a2a2a"/><path d="M1735.6000000000001 1088H1733.2V1098H1735.6000000000001M1742.8 1088H1745.2V1098H1742.8" fill="none" stroke="#2a2a2a" stroke-width="1.7"/><circle cx="1737.6000000000001" cy="1093" r=".9" fill="#2a2a2a"/><circle cx="1740.8" cy="1093" r=".9" fill="#2a2a2a"/><path d="M1790.05 1093C1788.05 1089.6 1783.6499999999999 1089.6 1783.6499999999999 1093S1788.05 1096.4 1790.05 1093S1796.45 1089.6 1796.45 1093S1792.05 1096.4 1790.05 1093Z" fill="none" stroke="#2a2a2a" stroke-width="1.6"/><path d="M1835.7 1092A5.4 5.4 0 0 1 1844.5 1088.8" fill="none" stroke="#2a2a2a" stroke-width="2"/><path d="M1842.3000000000002 1087.2L1847.1000000000001 1087.2L1845.9 1091.8Z" fill="#2a2a2a"/><path d="M1846.1000000000001 1094A5.4 5.4 0 0 1 1837.3000000000002 1097.2" fill="none" stroke="#2a2a2a" stroke-width="2"/><path d="M1839.5 1098.8L1834.7 1098.8L1835.9 1094.2Z" fill="#2a2a2a"/></svg>
<div class="a" style="left:1612.2px;top:1111.2px;width:152.8px;height:34.8px;background:linear-gradient(#b2b2b2,#6e6e6e);border-radius:5px 0 0 6px;"></div>
<div class="a" style="left:1765px;top:1111.2px;width:152px;height:34.8px;background:linear-gradient(#b2b2b2,#6e6e6e);border-radius:0 5px 6px 0;"></div>
<div class="a" style="left:1764.3px;top:1111.2px;width:1.4px;height:34.8px;background:#5a5a5a;"></div>
<div class="a" style="left:1635.3px;top:1117px;width:22px;height:22px;border-radius:50%;background:linear-gradient(#727272,#a4a4a4);"></div>
<div class="a" style="left:1875.5px;top:1117px;width:22px;height:22px;border-radius:50%;background:linear-gradient(#727272,#a4a4a4);"></div>
<svg class="a" style="left:0;top:0" width="1920" height="1146" fill="none" stroke="#2c2c2c" stroke-width="1.5"><path d="M1645.6 1123.2L1641.4 1128L1645.6 1132.8M1650.4 1123.2L1646.2 1128L1650.4 1132.8"/><path d="M1882.4 1123.2L1886.6 1128L1882.4 1132.8M1887.2 1123.2L1891.4 1128L1887.2 1132.8"/></svg>
<div class="t" style="left:1676.90px;top:1115.34px;font-size:25.36px;color:#2c2c2c;-webkit-text-stroke:.45px #2c2c2c;">Back</div>
<div class="t" style="left:1796.80px;top:1115.34px;font-size:25.36px;color:#2c2c2c;transform:scaleX(1.1161);-webkit-text-stroke:.45px #2c2c2c;">Next</div>
</body></html>
